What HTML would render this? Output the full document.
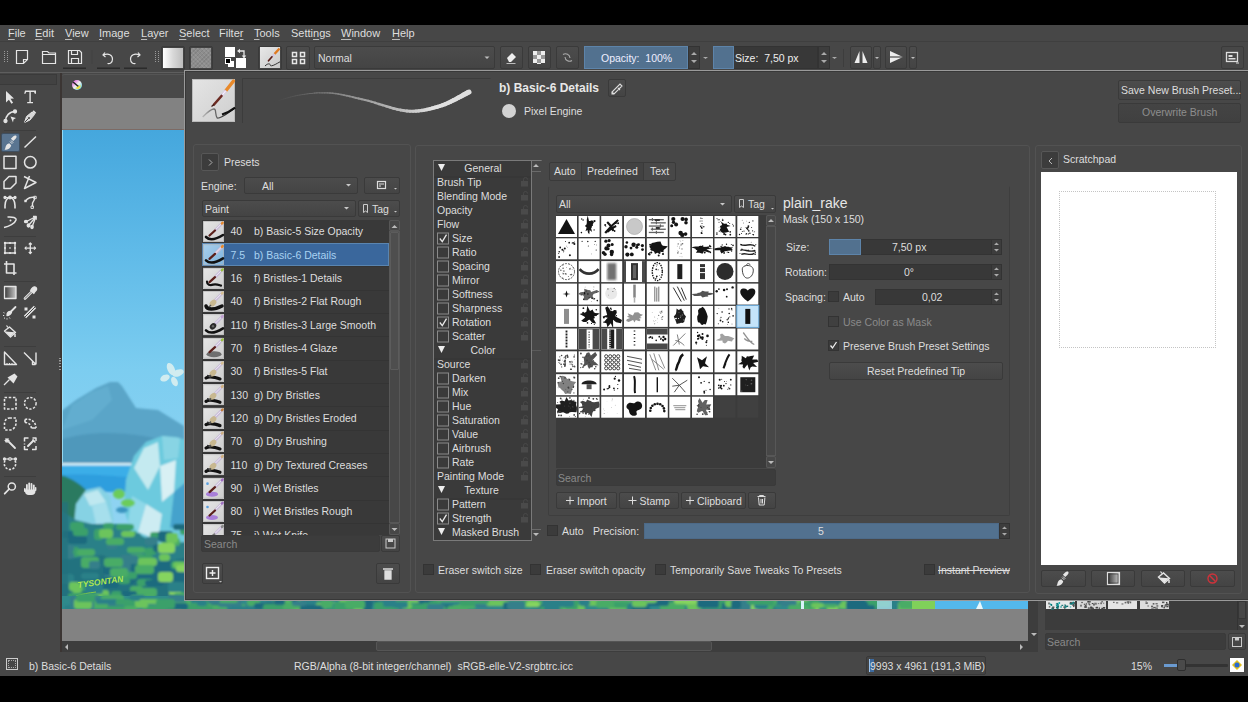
<!DOCTYPE html>
<html><head><meta charset="utf-8">
<style>
*{margin:0;padding:0;box-sizing:border-box}
html,body{width:1248px;height:702px;overflow:hidden;background:#000;font-family:"Liberation Sans",sans-serif;font-size:10.5px;color:#dedede}
.a{position:absolute}
.t{position:absolute;white-space:nowrap;line-height:1}
.btn{position:absolute;border:1px solid #3a3a3a;border-radius:2px;background:linear-gradient(#4c4c4c,#444)}
.inp{position:absolute;border:1px solid #333;border-radius:2px;background:#393939}
.cb{position:absolute;width:11px;height:11px;background:#3b3b3b;border:1px solid #333}
.u{text-decoration:underline;text-underline-offset:2px;text-decoration-color:#bbb}
svg{position:absolute;overflow:visible}
</style></head><body>
<!-- window -->
<div class="a" style="left:0;top:25px;width:1248px;height:651px;background:#474747"></div>
<!-- ================= MENUBAR ================= -->
<div class="a" style="left:0;top:41px;width:1248px;height:1px;background:#3f3f3f"></div>
<div class="t" style="left:8px;top:27px;font-size:11px;line-height:13px"><span class="u">F</span>ile</div>
<div class="t" style="left:35px;top:27px;font-size:11px;line-height:13px"><span class="u">E</span>dit</div>
<div class="t" style="left:65px;top:27px;font-size:11px;line-height:13px"><span class="u">V</span>iew</div>
<div class="t" style="left:99px;top:27px;font-size:11px;line-height:13px"><span class="u">I</span>mage</div>
<div class="t" style="left:141px;top:27px;font-size:11px;line-height:13px"><span class="u">L</span>ayer</div>
<div class="t" style="left:179px;top:27px;font-size:11px;line-height:13px"><span class="u">S</span>elect</div>
<div class="t" style="left:219px;top:27px;font-size:11px;line-height:13px">Filte<span class="u">r</span></div>
<div class="t" style="left:254px;top:27px;font-size:11px;line-height:13px"><span class="u">T</span>ools</div>
<div class="t" style="left:291px;top:27px;font-size:11px;line-height:13px">Setti<span class="u">n</span>gs</div>
<div class="t" style="left:341px;top:27px;font-size:11px;line-height:13px"><span class="u">W</span>indow</div>
<div class="t" style="left:392px;top:27px;font-size:11px;line-height:13px"><span class="u">H</span>elp</div>
<!-- ================= TOOLBAR ================= -->
<div class="a" style="left:0;top:72px;width:1248px;height:1px;background:#5e5e5e"></div>
<div id="toolbar">
<svg style="left:0;top:0" width="1248" height="72">
 <g fill="none" stroke="#e6e6e6" stroke-width="1.2">
  <!-- grips -->
  <g stroke="#9a9a9a" stroke-width="1" stroke-dasharray="1 1"><path d="M4.5 51v12M7.5 51v12M155.5 51v12M158.5 51v12"/></g>
  <!-- new -->
  <path d="M16.5 50.5h11v9l-4 4h-7z M27.5 59.5h-4v4"/>
  <!-- open -->
  <path d="M42.5 51.5h5l1.5 1.5h6.5v10.5h-13z M42.5 54.5h13"/>
  <!-- save -->
  <path d="M68.5 50.5h11l2 2v11h-13z M71.5 50.5v4h6v-4 M71.5 63.5v-5h7v5"/>
  <!-- undo -->
  <path d="M105 52.5l-2 2.5 2.5 2 M103.5 55c5-2 9 0 9 4s-3 5-5 4.5"/>
  <!-- redo -->
  <path d="M138 52.5l2 2.5-2.5 2 M139.5 55c-5-2-9 0-9 4s3 5 5 4.5"/>
 </g>
 <g fill="#2b2b2b"><rect x="63" y="67.5" width="23" height="1.5"/><rect x="97" y="67.5" width="23" height="1.5"/><rect x="124" y="67.5" width="23" height="1.5"/></g>
 <rect x="91.5" y="50" width="1" height="14" fill="#424242"/>
</svg>
<!-- gradient / pattern -->
<div class="btn" style="left:161px;top:46px;width:24px;height:24px;background:#444"></div>
<div class="a" style="left:163px;top:48px;width:20px;height:20px;background:linear-gradient(90deg,#fff,#d8d8d8 50%,#bdbdbd)"></div>
<div class="btn" style="left:189px;top:46px;width:24px;height:24px;background:#444"></div>
<div class="a" style="left:191px;top:48px;width:20px;height:20px;background:#8d8d8d;background-image:repeating-linear-gradient(45deg,rgba(255,255,255,.08) 0 1px,transparent 1px 3px),repeating-linear-gradient(-45deg,rgba(0,0,0,.08) 0 1px,transparent 1px 3px)"></div>
<!-- colors -->
<div class="a" style="left:225px;top:47px;width:10px;height:10px;background:#fff"></div>
<div class="a" style="left:236px;top:58px;width:10px;height:10px;background:#fff"></div>
<div class="a" style="left:228px;top:61px;width:6px;height:6px;background:#fff"></div>
<div class="a" style="left:225px;top:58px;width:6px;height:6px;background:#000;border:1px solid #fff"></div>
<svg style="left:0;top:0" width="260" height="72"><path d="M239.5 51h4.5v5" fill="none" stroke="#e8e8e8" stroke-width="1.3"/><path d="M237 51l3-2.2v4.4z M244 58.5l-2.2-3h4.4z" fill="#e8e8e8"/></svg>
<!-- brush preset btn -->
<div class="btn" style="left:258px;top:46px;width:24px;height:24px;background:#444"></div>
<div class="a" style="left:260px;top:47px;width:20px;height:21px;background:linear-gradient(135deg,#e8e8e8,#c9c9c9)"></div>
<svg style="left:0;top:0" width="290" height="72"><path d="M279.5 48.5l-5 5.5" stroke="#e07a20" stroke-width="2.4"/><path d="M274.5 54l-2.5 2.8" stroke="#d0c4e0" stroke-width="2"/><path d="M272 56.8l-3.5 4" stroke="#5a1f1a" stroke-width="1.7" stroke-linecap="round"/><path d="M265 66c1.5-1.5 3-2.5 4.5-2 1.5.5 0 2 2 1.8s5-2 8.5-4" fill="none" stroke="#333" stroke-width="1"/></svg>
<!-- grid btn -->
<div class="btn" style="left:286px;top:46px;width:24px;height:24px"></div>
<svg style="left:0;top:0" width="320" height="72"><g fill="none" stroke="#e6e6e6" stroke-width="1.5"><rect x="292.5" y="52.5" width="4" height="4"/><rect x="300.5" y="52.5" width="4" height="4"/><rect x="292.5" y="59.5" width="4" height="4"/><rect x="300.5" y="59.5" width="4" height="4"/></g></svg>
<!-- blend combo -->
<div class="btn" style="left:314px;top:46px;width:181px;height:23px"></div>
<div class="t" style="left:318px;top:53px">Normal</div>
<svg style="left:0;top:0" width="500" height="72"><path d="M484.5 56.5h5l-2.5 2.5z" fill="#bdbdbd"/></svg>
<!-- eraser / alpha / reload -->
<div class="btn" style="left:500px;top:46px;width:23px;height:23px"></div>
<div class="btn" style="left:528px;top:46px;width:23px;height:23px"></div>
<div class="btn" style="left:556px;top:46px;width:23px;height:23px"></div>
<svg style="left:0;top:0" width="600" height="72"><path d="M507 58l5-5 4 4-5 5h-2z" fill="#eee"/><path d="M506.5 63.5h9" stroke="#bbb"/>
<g fill="#eee"><rect x="533" y="51" width="4" height="4"/><rect x="541" y="51" width="4" height="4"/><rect x="537" y="55" width="4" height="4"/><rect x="533" y="59" width="4" height="4"/><rect x="541" y="59" width="4" height="4"/><rect x="537" y="63" width="4" height="1"/></g>
<g fill="#999"><rect x="537" y="51" width="4" height="4"/><rect x="533" y="55" width="4" height="4"/><rect x="541" y="55" width="4" height="4"/><rect x="537" y="59" width="4" height="4"/></g>
<path d="M563 54.5a4.5 4.5 0 0 1 7 3.5 M572 60.5a4.5 4.5 0 0 1-7-3.5" fill="none" stroke="#aaa" stroke-width="1.1"/></svg>
<!-- opacity slider -->
<div class="a" style="left:584px;top:46px;width:104px;height:23px;background:#52718f;border:1px solid #5d84aa"></div>
<div class="t" style="left:601px;top:53px;color:#eef">Opacity:&nbsp; 100%</div>
<div class="a" style="left:688px;top:46px;width:12px;height:23px;background:#3d3d3d;border:1px solid #333"></div>
<svg style="left:0;top:0" width="900" height="72"><g fill="#aaa"><path d="M691 55l3-3 3 3z M691 60l3 3 3-3z M703 57h5l-2.5 2z M817+0 0"/></g></svg>
<!-- size slider -->
<div class="a" style="left:713px;top:46px;width:105px;height:23px;background:#383838;border:1px solid #333"></div>
<div class="a" style="left:713px;top:46px;width:21px;height:23px;background:#52718f;border:1px solid #5d84aa"></div>
<div class="t" style="left:735px;top:53px;color:#eee">Size:&nbsp; 7,50 px</div>
<div class="a" style="left:818px;top:46px;width:12px;height:23px;background:#3d3d3d;border:1px solid #333"></div>
<svg style="left:0;top:0" width="900" height="72"><g fill="#aaa"><path d="M821 55l3-3 3 3z M821 60l3 3 3-3z M832 57h5l-2.5 2z"/></g></svg>
<div class="a" style="left:843px;top:49px;width:1px;height:18px;background:#3d3d3d"></div>
<!-- mirror -->
<div class="btn" style="left:850px;top:46px;width:22px;height:23px"></div>
<div class="btn" style="left:873px;top:46px;width:8px;height:23px"></div>
<div class="btn" style="left:885px;top:46px;width:22px;height:23px"></div>
<div class="btn" style="left:909px;top:46px;width:8px;height:23px"></div>
<svg style="left:0;top:0" width="1248" height="72"><g fill="#eee"><path d="M859.5 51v12h-5z M862.5 51v12h5z M890 51l13 6-13 6z"/></g><path d="M890 57h13" stroke="#474747" stroke-width="1.2"/><g fill="#bbb"><path d="M875 57h4l-2 2z M911 57h4l-2 2z"/></g>
<rect x="1226.5" y="52.5" width="11" height="9" fill="none" stroke="#ddd" stroke-width="1.3"/><rect x="1228.5" y="55" width="4" height="2" fill="#ddd"/><rect x="1228.5" y="58" width="7" height="1.5" fill="#ddd"/><path d="M1236 63h3" stroke="#ddd"/></svg>
<div class="btn" style="left:1221px;top:46px;width:23px;height:23px;background:transparent"></div>
</div>
<!-- ================= TOOLBOX ================= -->
<div class="a" style="left:0;top:74px;width:57px;height:11px;background:#424242;border:1px solid #3a3a3a;border-left:0"></div>
<div id="toolbox">
<div class="a" style="left:1px;top:133px;width:18.5px;height:18.5px;background:#5a7591;border:1px solid #3f4f60;border-radius:2px"></div>
<svg style="left:0;top:0" width="60" height="660">
<g fill="#3d3d3d"><rect x="4" y="130" width="32" height="1"/><rect x="4" y="236" width="32" height="1"/><rect x="4" y="281" width="32" height="1"/><rect x="4" y="346" width="32" height="1"/><rect x="4" y="392" width="32" height="1"/><rect x="4" y="476" width="32" height="1"/></g>
<g fill="none" stroke="#e4e4e4" stroke-width="1.3" stroke-linejoin="round">
 <!-- select -->
 <path d="M6 91l8 7.5-3.5.3 2.6 4-1.7 1-2.5-4-2.9 2.7z" fill="#e4e4e4" stroke="none"/>
 <!-- text T -->
 <path d="M25 90.5h11v3.2h-1.2l-.8-1.8h-3.2v10.2h2.2v1.2h-5.8v-1.2h2.2v-10.2h-3.2l-.8 1.8h-1.2z" fill="#e4e4e4" stroke="none"/>
 <!-- shape select -->
 <path d="M5.5 121c0-5 4-9.5 9.5-9.5" stroke-width="1.5"/><circle cx="5.5" cy="121" r="1.5" fill="#e4e4e4"/><circle cx="15" cy="111.5" r="1.5" fill="#e4e4e4"/><path d="M10.5 116.5l5.5 1.5-2.5 1.5-.5 3z" fill="#e4e4e4" stroke="none"/>
 <!-- calligraphy pen -->
 <path d="M24.5 122.5l2-6 5.5-4.5 2.5 2.5-4.5 5.5z" fill="#d8d8d8" stroke="#e4e4e4" stroke-width="1"/><path d="M24.5 122.5l4-4" stroke="#474747" stroke-width="1"/><circle cx="29" cy="118" r="1" fill="#474747" stroke="none"/><path d="M33 111l2.5 2.5" stroke-width="2"/>
 <!-- brush (active) -->
 <path d="M16.2 135.8c.8.8.3 2-.8 3.1l-2.2 2.2-2.3-2.3 2.2-2.2c1.1-1.1 2.3-1.6 3.1-.8z" fill="#e6e6e6" stroke="none"/>
 <path d="M11 140.5l2.2 2.2M10 141.6l2.2 2.2" stroke="#e6e6e6" stroke-width="1"/>
 <path d="M9.2 143.2l2 2c-.5 2.5-2.5 4.5-6.7 4.5 1-1 .8-2.2 1.3-3.5.6-1.6 1.8-2.6 3.4-3z" fill="#e6e6e6" stroke="none"/>
 <!-- line -->
 <path d="M24.5 147.5l11.5-11" stroke-width="1.5"/>
 <!-- rect -->
 <rect x="4" y="156.2" width="12" height="12.2" stroke-width="1.5"/>
 <!-- ellipse -->
 <circle cx="30.3" cy="162.3" r="5.8" stroke-width="1.5"/>
 <!-- polygon -->
 <path d="M9 176.5h7v6.5l-5.5 5.5h-6.5v-7z" stroke-width="1.5"/>
 <!-- polyline -->
 <path d="M24 176.5l12 6-11.5 6 5-12.5" stroke-width="1.5"/>
 <!-- bezier -->
 <path d="M5 208.5v-3c0-5 2.5-8 5-8s5 3 5 8v3" stroke-width="1.6"/><path d="M4.5 197.5h11" stroke-width="1"/><circle cx="5" cy="197.5" r="1" fill="#e4e4e4"/><circle cx="15" cy="197.5" r="1" fill="#e4e4e4"/><circle cx="10" cy="197.5" r="1.3" fill="#e4e4e4"/>
 <!-- freehand path -->
 <path d="M25.5 201c2-3 6-4.5 9-3.5.5 2-1 4-2 5.5v3.5" stroke-width="1.4"/><rect x="24.3" y="199.8" width="2.4" height="2.4" fill="#e4e4e4" stroke="none"/><rect x="33.8" y="196.3" width="2.4" height="2.4" fill="none" stroke-width="1"/><rect x="31" y="206" width="2.4" height="2.4" fill="none" stroke-width="1"/>
 <!-- dyna -->
 <path d="M4 227.5c5-1 11-4 12-7.5.5-2-3-3.5-8.5-3" stroke-width="1.5"/><circle cx="10.5" cy="220.5" r="1" fill="#e4e4e4" stroke="none"/>
 <!-- multibrush -->
 <path d="M26.5 221.5l9.5-5M28.5 225.5l7.5-9M32 227l4-10.5" stroke-width="1.3"/><path d="M33 216.5h3.2v3.2" stroke-width="1.3"/><ellipse cx="26" cy="221.5" rx="1.5" ry="1.2" fill="#e4e4e4"/><ellipse cx="28.5" cy="225.5" rx="1.3" ry="1.5" fill="#e4e4e4"/><ellipse cx="32" cy="227" rx="1.2" ry="1.5" fill="#e4e4e4"/>
 <!-- transform -->
 <rect x="5" y="243" width="10" height="10" stroke-width="1.3"/><g fill="#e4e4e4" stroke="none"><circle cx="5" cy="243" r="1.2"/><circle cx="15" cy="243" r="1.2"/><circle cx="5" cy="253" r="1.2"/><circle cx="15" cy="253" r="1.2"/><circle cx="10" cy="243" r="1"/><circle cx="10" cy="253" r="1"/><circle cx="5" cy="248" r="1"/><circle cx="15" cy="248" r="1"/><rect x="9.3" y="247.3" width="1.4" height="1.4"/></g>
 <!-- move -->
 <path d="M30.3 243v10.5M25 248.2h10.5" stroke-width="1.3"/><path d="M28.8 244.5l1.5-1.5 1.5 1.5M28.8 252l1.5 1.5 1.5-1.5M26.5 246.7l-1.5 1.5 1.5 1.5M34 246.7l1.5 1.5-1.5 1.5" stroke-width="1.2"/>
 <!-- crop -->
 <path d="M6.5 261v12h10 M4 264h10v11 " stroke-width="1.6"/>
 <!-- gradient -->
 <rect x="4.5" y="286.5" width="11.5" height="12" fill="url(#gr)" stroke-width="1.3"/>
 <!-- color picker -->
 <path d="M25 298.5l7-7" stroke-width="2.6" stroke-linecap="round"/><path d="M25 298.5l7-7" stroke="#474747" stroke-width="0.8"/><path d="M30.5 289.5l4 4" stroke-width="2.2"/><path d="M33 287.5a2 2 0 0 1 3 3l-1.5 1.5-3-3z" fill="#e4e4e4"/>
 <!-- smart patch -->
 <path d="M15.5 307l-4.5 4.5" stroke-width="1.8" stroke-linecap="round"/><path d="M10.5 311.5c-2 0-3.5 1.5-3.5 4 2 0 3.5-1 4.5-3z" fill="#e4e4e4"/><path d="M3.5 312.5l1 .5M3 315.5h1.2M4 318.5l1-.8M7 319.5v-1.2M10 318.5l-.6-1" stroke-width="1"/>
 <!-- similar/percent -->
 <path d="M25 317l10-10" stroke-width="3.2"/><path d="M25 317l10-10" stroke="#474747" stroke-width="1"/><rect x="24.5" y="307.5" width="3" height="3" fill="#e4e4e4" stroke="none"/><rect x="32.5" y="315.5" width="3" height="3" fill="#e4e4e4" stroke="none"/>
 <!-- fill -->
 <path d="M4.5 331l5-4 6 5.5-5 4.5z" fill="none" stroke-width="1.4"/><path d="M5 331.5l10 .8-4.6 4.2z" fill="#e4e4e4" stroke="none"/><path d="M8 327.5l-1.5-2" stroke-width="1.2"/><path d="M15 334v3" stroke-width="1.5"/>
 <!-- measure -->
 <path d="M4.5 352v12.5h12z" stroke-width="1.4"/><path d="M7 364.5v-1.5M9.5 364.5v-1.5M12 364.5v-1.5" stroke-width="1"/>
 <!-- angle -->
 <path d="M24 352.5l12 12M36 352.5v12M32.5 361v3.5h3" stroke-width="1.4"/>
 <!-- assistant pin -->
 <path d="M4 385l5.5-5.5" stroke-width="1.3"/><path d="M7.5 377.5l7-4 3 3-4 7z" fill="#e4e4e4" stroke="none"/>
 <!-- rect select -->
 <rect x="4.5" y="397.5" width="11.5" height="11.5" stroke-width="1.6" stroke-dasharray="2.6 1.6"/>
 <!-- ellipse select -->
 <circle cx="30.3" cy="403.3" r="5.8" stroke-width="1.5" stroke-dasharray="2.3 1.5"/>
 <!-- poly select -->
 <path d="M9.5 418h6.5v5c0 4-3 7-6 7h-5.5v-6c0-3.5 2-6 5-6z" stroke-width="1.6" stroke-dasharray="2.4 1.6"/>
 <!-- freehand select -->
 <path d="M25 419.5c5-1.5 11 2 11 8.5M25 422.5c3.5 0 6.5 2.5 6.5 6.5" stroke-width="1.6" stroke-dasharray="2.2 1.4"/><path d="M25 419.5v3M36 428h-4.5" stroke-width="1.6"/>
 <!-- magic wand -->
 <path d="M9 442l6 6" stroke-width="1.8" stroke-linecap="round"/><path d="M4.5 440.5h5M7 438v5M5.2 438.6l3.6 3.6M8.8 438.6l-3.6 3.6" stroke-width="1.1"/>
 <!-- similar select -->
 <path d="M24.5 441.5v-3.5h4M32.5 438h3.5v3M36 446v3.5h-4M28 449.5h-3.5v-3.5M24.5 443.5v1" stroke-width="1.5"/><path d="M28 446l5.5-5.5" stroke-width="2" stroke-linecap="round"/><path d="M32.5 439.5l3 3" stroke-width="1.5"/>
 <!-- bezier select -->
 <path d="M5 460.5c-1 2-1 4 0 6 2 4 8 4 10 0 1-2 1-4 0-6" stroke-width="1.6" stroke-dasharray="2.2 1.5"/><path d="M4 459h12" stroke-width="1.1"/><circle cx="4.5" cy="459" r="1" fill="#e4e4e4"/><circle cx="15.5" cy="459" r="1" fill="#e4e4e4"/><ellipse cx="10" cy="459" rx="2" ry="1.3" fill="none" stroke-width="1"/>
 <!-- zoom -->
 <circle cx="11.8" cy="486.5" r="3.6" stroke-width="1.5"/><path d="M9.2 489l-4.5 4.7" stroke-width="1.8" stroke-linecap="round"/>
 <!-- pan hand -->
 <g fill="#e4e4e4" stroke="none"><rect x="26" y="484" width="1.8" height="7" rx=".9"/><rect x="28.3" y="482.5" width="1.8" height="8" rx=".9"/><rect x="30.6" y="483" width="1.8" height="8" rx=".9"/><rect x="32.9" y="484.5" width="1.8" height="7" rx=".9"/><path d="M25 489.5h10.5v1.5c0 2.5-1.5 4-4 4h-3c-2 0-3.5-1.5-3.5-3.5z"/><rect x="34.8" y="487" width="1.6" height="4" rx=".8"/><rect x="24" y="488" width="1.7" height="4" rx=".8"/></g>
</g>
<defs><linearGradient id="gr"><stop offset="0" stop-color="#3a3a3a"/><stop offset="1" stop-color="#c8c8c8"/></linearGradient></defs>
<!-- splitter grip -->

</svg>
</div>
<!-- ================= CANVAS ================= -->
<div class="a" style="left:60px;top:73px;width:2px;height:579px;background:#3b3533"></div>
<div class="a" style="left:62px;top:74px;width:968px;height:24px;background:#494949;border-radius:3px 0 0 0;border-top:1px solid #555"></div>
<div class="a" style="left:62px;top:98px;width:966px;height:543px;background:#828282"></div>
<svg style="left:0;top:0" width="200" height="100"><defs><linearGradient id="kr" x1="0" y1="0" x2="1" y2="1"><stop offset="0" stop-color="#e040e0"/><stop offset=".5" stop-color="#f0f0f0"/><stop offset="1" stop-color="#40d0e0"/></linearGradient></defs><circle cx="77" cy="85" r="5" fill="url(#kr)"/><path d="M73 82l6 5" stroke="#222" stroke-width="1.6"/><path d="M75.5 88a3 3 0 0 0 5-3" fill="#f0e040"/></svg>
<div class="a" style="left:62px;top:129px;width:966px;height:1px;background:#7d6a64"></div>
<div id="painting" class="a" style="left:62px;top:130px;width:966px;height:479px;overflow:hidden"><svg style="left:0;top:0" width="966" height="479">
<defs><linearGradient id="sky" x1="0" y1="0" x2="0" y2="1"><stop offset="0" stop-color="#45a7dd"/><stop offset=".25" stop-color="#5fbae8"/><stop offset=".5" stop-color="#7ccdf0"/><stop offset=".7" stop-color="#8ad2f2"/><stop offset="1" stop-color="#9ad6f2"/></linearGradient><filter id="bl" x="-5%" y="-5%" width="110%" height="110%"><feGaussianBlur stdDeviation="0.8"/></filter></defs>
<rect width="966" height="479" fill="url(#sky)"/>
<g filter="url(#bl)">
<path d="M-2 282L14 270 34 258 48 252 56 252 60 256 74 278 96 280 122 296 124 340 -2 340z" fill="#5aa5c8" />
<path d="M10 275L30 262 46 256 50 270 30 290 0 300z" fill="#62adcf" />
<path d="M-2 310C30 300 70 300 124 316V340H-2z" fill="#5098bb" />
<path d="M-2 333H124V362H-2z" fill="#3aaee8" />
<path d="M-2 333H110V335.5H-2z" fill="#d8eef6" />
<path d="M-2 345C30 342 60 348 110 350V362H-2z" fill="#2f9ede" />
<path d="M-2 345C10 348 20 355 30 366 L14 392 -2 394z" fill="#2a7a60" />
<path d="M64 350L72 326 84 312 100 306 114 307 124 310 124 414 96 414 70 404 62 380z" fill="#6ccade" />
<path d="M72 338L82 318 96 312 98 336 86 360z" fill="#c4eaf0" />
<path d="M98 336L114 330 112 362 100 372z" fill="#d8f0f4" />
<path d="M100 306L118 308 116 328 102 330z" fill="#88d4e4" />
<path d="M112 362L124 352 124 394 108 398z" fill="#44a2cc" />
<path d="M84 374L100 384 96 410 76 402z" fill="#cdecf2" />
<path d="M70 366L84 374 76 402 66 392z" fill="#8ed8e8" />
<path d="M12 394L14 374 24 360 38 357 48 366 52 392z" fill="#86d2e4" />
<path d="M22 364L36 360 44 372 28 376z" fill="#bfe8f0" />
<path d="M30 376L44 372 50 392 34 394z" fill="#a6dfec" />
<path d="M-2 380L14 390 30 394 56 394 72 402 96 414 124 412 124 479H-2z" fill="#2b8088" />
<path d="M-2 430L40 425 80 440 124 434 124 479H-2z" fill="#24727f" />
<path d="M50 438C70 430 100 434 124 428V452C100 450 80 452 50 450z" fill="#1e6a80" />
<rect x="50" y="438" width="19" height="8" rx="3" fill="#357f8a"/>
<rect x="100" y="408" width="18" height="8" rx="3" fill="#48ac66"/>
<rect x="6" y="417" width="11" height="10" rx="3" fill="#3aa06a"/>
<rect x="68" y="424" width="15" height="10" rx="3" fill="#48ac66"/>
<rect x="71" y="460" width="11" height="6" rx="3" fill="#6cc45c"/>
<rect x="68" y="456" width="13" height="9" rx="3" fill="#48ac66"/>
<rect x="58" y="445" width="15" height="9" rx="3" fill="#1f6a7e"/>
<rect x="75" y="425" width="16" height="11" rx="3" fill="#3aa06a"/>
<rect x="82" y="418" width="12" height="7" rx="3" fill="#3aa06a"/>
<rect x="64" y="401" width="11" height="7" rx="3" fill="#3aa06a"/>
<rect x="113" y="461" width="10" height="7" rx="3" fill="#3aa06a"/>
<rect x="52" y="472" width="14" height="6" rx="3" fill="#48ac66"/>
<rect x="91" y="414" width="11" height="8" rx="3" fill="#1f6a7e"/>
<rect x="88" y="402" width="12" height="7" rx="3" fill="#3aa06a"/>
<rect x="52" y="432" width="17" height="7" rx="3" fill="#357f8a"/>
<rect x="18" y="452" width="11" height="9" rx="3" fill="#3aa06a"/>
<rect x="43" y="473" width="10" height="10" rx="3" fill="#2a8088"/>
<rect x="118" y="394" width="12" height="11" rx="3" fill="#3aa06a"/>
<rect x="-1" y="404" width="14" height="6" rx="3" fill="#2a8088"/>
<rect x="97" y="424" width="11" height="7" rx="3" fill="#6cc45c"/>
<rect x="-4" y="422" width="16" height="7" rx="3" fill="#357f8a"/>
<rect x="97" y="403" width="14" height="9" rx="3" fill="#2a8088"/>
<rect x="107" y="459" width="12" height="7" rx="3" fill="#86d45e"/>
<rect x="18" y="470" width="19" height="9" rx="3" fill="#1f6a7e"/>
<rect x="-0" y="401" width="15" height="7" rx="3" fill="#1f6a7e"/>
<rect x="26" y="460" width="16" height="7" rx="3" fill="#48ac66"/>
<rect x="109" y="472" width="11" height="8" rx="3" fill="#3aa06a"/>
<rect x="29" y="467" width="12" height="6" rx="3" fill="#6cc45c"/>
<rect x="45" y="412" width="10" height="7" rx="3" fill="#357f8a"/>
<rect x="65" y="403" width="14" height="10" rx="3" fill="#2a8088"/>
<rect x="75" y="449" width="16" height="7" rx="3" fill="#3aa06a"/>
<rect x="109" y="431" width="14" height="8" rx="3" fill="#3aa06a"/>
<rect x="-3" y="444" width="15" height="10" rx="3" fill="#2a8088"/>
<rect x="11" y="398" width="15" height="8" rx="3" fill="#3aa06a"/>
<rect x="106" y="452" width="17" height="10" rx="3" fill="#2a8088"/>
<rect x="38" y="448" width="19" height="10" rx="3" fill="#1f6a7e"/>
<rect x="111" y="394" width="15" height="6" rx="3" fill="#1f6a7e"/>
<rect x="41" y="393" width="11" height="6" rx="3" fill="#3aa06a"/>
<rect x="117" y="464" width="17" height="8" rx="3" fill="#1f6a7e"/>
<rect x="49" y="461" width="11" height="10" rx="3" fill="#3aa06a"/>
<rect x="32" y="399" width="10" height="11" rx="3" fill="#3aa06a"/>
<rect x="56" y="442" width="19" height="7" rx="3" fill="#3aa06a"/>
<rect x="40" y="404" width="16" height="9" rx="3" fill="#2a8088"/>
<rect x="76" y="428" width="19" height="8" rx="3" fill="#6cc45c"/>
<rect x="19" y="427" width="18" height="11" rx="3" fill="#48ac66"/>
<rect x="42" y="440" width="13" height="7" rx="3" fill="#357f8a"/>
<rect x="37" y="465" width="10" height="6" rx="3" fill="#6cc45c"/>
<rect x="96" y="401" width="15" height="11" rx="3" fill="#1f6a7e"/>
<rect x="41" y="435" width="17" height="10" rx="3" fill="#1f6a7e"/>
<rect x="34" y="460" width="13" height="9" rx="3" fill="#6cc45c"/>
<rect x="65" y="417" width="18" height="6" rx="3" fill="#48ac66"/>
<rect x="44" y="408" width="18" height="7" rx="3" fill="#48ac66"/>
<rect x="93" y="473" width="11" height="7" rx="3" fill="#86d45e"/>
<rect x="75" y="458" width="20" height="9" rx="3" fill="#48ac66"/>
<rect x="96" y="413" width="17" height="10" rx="3" fill="#86d45e"/>
<rect x="83" y="407" width="13" height="8" rx="3" fill="#357f8a"/>
<rect x="56" y="474" width="12" height="10" rx="3" fill="#6cc45c"/>
<rect x="5" y="468" width="17" height="7" rx="3" fill="#1f6a7e"/>
<rect x="18" y="465" width="10" height="9" rx="3" fill="#357f8a"/>
<rect x="93" y="469" width="15" height="9" rx="3" fill="#48ac66"/>
<rect x="6" y="463" width="18" height="11" rx="3" fill="#3aa06a"/>
<rect x="20" y="466" width="20" height="11" rx="3" fill="#86d45e"/>
<rect x="115" y="468" width="13" height="10" rx="3" fill="#3aa06a"/>
<rect x="37" y="399" width="14" height="9" rx="3" fill="#6cc45c"/>
<rect x="54" y="394" width="18" height="6" rx="3" fill="#3aa06a"/>
<rect x="15" y="419" width="18" height="7" rx="3" fill="#48ac66"/>
<rect x="118" y="466" width="15" height="9" rx="3" fill="#1f6a7e"/>
<rect x="111" y="432" width="19" height="6" rx="3" fill="#6cc45c"/>
<rect x="48" y="438" width="18" height="9" rx="3" fill="#48ac66"/>
<rect x="59" y="461" width="16" height="8" rx="3" fill="#1f6a7e"/>
<rect x="112" y="463" width="16" height="8" rx="3" fill="#48ac66"/>
<rect x="114" y="435" width="16" height="7" rx="3" fill="#86d45e"/>
<rect x="8" y="392" width="14" height="9" rx="3" fill="#3aa06a"/>
<rect x="58" y="425" width="18" height="9" rx="3" fill="#357f8a"/>
<rect x="6" y="406" width="19" height="8" rx="3" fill="#1f6a7e"/>
<rect x="27" y="431" width="11" height="8" rx="3" fill="#357f8a"/>
<rect x="59" y="401" width="14" height="6" rx="3" fill="#6cc45c"/>
<rect x="10" y="456" width="10" height="7" rx="3" fill="#6cc45c"/>
<rect x="-5" y="415" width="17" height="7" rx="3" fill="#357f8a"/>
<rect x="7" y="452" width="11" height="9" rx="3" fill="#6cc45c"/>
<rect x="83" y="450" width="19" height="6" rx="3" fill="#1f6a7e"/>
<rect x="96" y="442" width="15" height="10" rx="3" fill="#86d45e"/>
<rect x="73" y="435" width="19" height="9" rx="3" fill="#48ac66"/>
<rect x="23" y="453" width="18" height="11" rx="3" fill="#2a8088"/>
<rect x="69" y="465" width="12" height="10" rx="3" fill="#48ac66"/>
<rect x="104" y="403" width="12" height="10" rx="3" fill="#6cc45c"/>
<rect x="42" y="428" width="19" height="9" rx="3" fill="#48ac66"/>
<rect x="19" y="443" width="18" height="6" rx="3" fill="#2a8088"/>
<rect x="107" y="471" width="11" height="9" rx="3" fill="#2a8088"/>
<rect x="56" y="448" width="12" height="6" rx="3" fill="#3aa06a"/>
<rect x="-2" y="372" width="8" height="107" fill="#24707e" opacity=".7"/>
<ellipse cx="57" cy="364" rx="6" ry="5" fill="#6ccc5a"/><ellipse cx="66" cy="373" rx="7" ry="4" fill="#6ccc5a"/><ellipse cx="60" cy="380" rx="6" ry="3" fill="#3a94c0"/>
</g>
<text x="16" y="458" font-family="Liberation Sans" font-size="8.5" font-style="italic" font-weight="bold" fill="#b0e850" transform="rotate(-8 16 458)">TYSONTAN</text>
<path d="M14 466c6-2 12-3 20-4" stroke="#8ccf40" stroke-width="1" fill="none"/>
<g transform="translate(108,245)" fill="#d6eef0" opacity=".95"><ellipse cx="1" cy="-6" rx="3.6" ry="6.5" transform="rotate(-25 1 -6)"/><ellipse cx="8" cy="-2" rx="6" ry="3.4" transform="rotate(-20 8 -2)"/><ellipse cx="-5" cy="3" rx="5" ry="3.2" transform="rotate(-25 -5 3)"/><ellipse cx="4.5" cy="6.5" rx="3" ry="5" transform="rotate(-25 4.5 6.5)"/></g>
<rect x="0" y="466" width="966" height="13" fill="#2f8a8c"/>
<g filter="url(#bl)">
<rect x="21" y="473" width="20" height="10" rx="3" fill="#357f8a"/>
<rect x="126" y="466" width="13" height="9" rx="3" fill="#2a8088"/>
<rect x="797" y="465" width="11" height="10" rx="3" fill="#1f6a7e"/>
<rect x="67" y="465" width="16" height="7" rx="3" fill="#2a8088"/>
<rect x="370" y="471" width="10" height="9" rx="3" fill="#48ac66"/>
<rect x="156" y="469" width="22" height="7" rx="3" fill="#48ac66"/>
<rect x="520" y="465" width="23" height="7" rx="3" fill="#3aa06a"/>
<rect x="689" y="472" width="24" height="8" rx="3" fill="#1f6a7e"/>
<rect x="490" y="466" width="19" height="7" rx="3" fill="#6cc45c"/>
<rect x="240" y="465" width="22" height="6" rx="3" fill="#1f6a7e"/>
<rect x="115" y="468" width="19" height="7" rx="3" fill="#1f6a7e"/>
<rect x="658" y="469" width="22" height="5" rx="3" fill="#2a8088"/>
<rect x="259" y="465" width="24" height="10" rx="3" fill="#3aa06a"/>
<rect x="200" y="475" width="21" height="7" rx="3" fill="#1f6a7e"/>
<rect x="490" y="470" width="16" height="10" rx="3" fill="#48ac66"/>
<rect x="603" y="473" width="26" height="5" rx="3" fill="#3aa06a"/>
<rect x="635" y="467" width="16" height="5" rx="3" fill="#48ac66"/>
<rect x="557" y="464" width="14" height="6" rx="3" fill="#2a8088"/>
<rect x="473" y="470" width="25" height="8" rx="3" fill="#3aa06a"/>
<rect x="549" y="474" width="11" height="8" rx="3" fill="#3aa06a"/>
<rect x="332" y="475" width="16" height="10" rx="3" fill="#357f8a"/>
<rect x="466" y="471" width="17" height="7" rx="3" fill="#2a8088"/>
<rect x="453" y="471" width="16" height="6" rx="3" fill="#6cc45c"/>
<rect x="482" y="467" width="21" height="6" rx="3" fill="#3aa06a"/>
<rect x="664" y="471" width="20" height="7" rx="3" fill="#1f6a7e"/>
<rect x="45" y="468" width="16" height="8" rx="3" fill="#2a8088"/>
<rect x="63" y="475" width="17" height="7" rx="3" fill="#6cc45c"/>
<rect x="39" y="465" width="23" height="10" rx="3" fill="#48ac66"/>
<rect x="842" y="474" width="20" height="6" rx="3" fill="#1f6a7e"/>
<rect x="392" y="466" width="11" height="8" rx="3" fill="#3aa06a"/>
<rect x="312" y="466" width="17" height="8" rx="3" fill="#1f6a7e"/>
<rect x="313" y="473" width="23" height="6" rx="3" fill="#2a8088"/>
<rect x="631" y="467" width="12" height="9" rx="3" fill="#357f8a"/>
<rect x="537" y="468" width="14" height="8" rx="3" fill="#48ac66"/>
<rect x="544" y="473" width="13" height="6" rx="3" fill="#48ac66"/>
<rect x="756" y="464" width="11" height="6" rx="3" fill="#1f6a7e"/>
<rect x="23" y="464" width="14" height="6" rx="3" fill="#3aa06a"/>
<rect x="785" y="466" width="14" height="10" rx="3" fill="#357f8a"/>
<rect x="412" y="467" width="15" height="9" rx="3" fill="#3aa06a"/>
<rect x="690" y="469" width="23" height="9" rx="3" fill="#48ac66"/>
<rect x="382" y="473" width="16" height="6" rx="3" fill="#48ac66"/>
<rect x="562" y="476" width="15" height="8" rx="3" fill="#48ac66"/>
<rect x="368" y="468" width="12" height="9" rx="3" fill="#3aa06a"/>
<rect x="468" y="469" width="19" height="9" rx="3" fill="#1f6a7e"/>
<rect x="257" y="473" width="11" height="6" rx="3" fill="#3aa06a"/>
<rect x="598" y="470" width="22" height="7" rx="3" fill="#48ac66"/>
<rect x="188" y="472" width="15" height="10" rx="3" fill="#2a8088"/>
<rect x="610" y="471" width="25" height="10" rx="3" fill="#6cc45c"/>
<rect x="377" y="474" width="15" height="7" rx="3" fill="#1f6a7e"/>
<rect x="832" y="473" width="18" height="5" rx="3" fill="#2a8088"/>
<rect x="21" y="472" width="19" height="9" rx="3" fill="#2a8088"/>
<rect x="685" y="470" width="23" height="8" rx="3" fill="#48ac66"/>
<rect x="77" y="469" width="24" height="9" rx="3" fill="#6cc45c"/>
<rect x="443" y="471" width="19" height="10" rx="3" fill="#1f6a7e"/>
<rect x="55" y="471" width="23" height="5" rx="3" fill="#3aa06a"/>
<rect x="235" y="465" width="15" height="5" rx="3" fill="#48ac66"/>
<rect x="84" y="474" width="17" height="9" rx="3" fill="#357f8a"/>
<rect x="658" y="470" width="22" height="7" rx="3" fill="#2a8088"/>
<rect x="694" y="468" width="12" height="7" rx="3" fill="#3aa06a"/>
<rect x="609" y="475" width="17" height="9" rx="3" fill="#2a8088"/>
<rect x="734" y="474" width="23" height="9" rx="3" fill="#86d45e"/>
<rect x="551" y="470" width="21" height="9" rx="3" fill="#1f6a7e"/>
<rect x="794" y="475" width="14" height="6" rx="3" fill="#1f6a7e"/>
<rect x="588" y="468" width="16" height="8" rx="3" fill="#6cc45c"/>
<rect x="834" y="465" width="15" height="6" rx="3" fill="#48ac66"/>
<rect x="667" y="466" width="11" height="7" rx="3" fill="#357f8a"/>
<rect x="782" y="464" width="12" height="6" rx="3" fill="#48ac66"/>
<rect x="506" y="471" width="18" height="8" rx="3" fill="#1f6a7e"/>
<rect x="159" y="467" width="13" height="9" rx="3" fill="#2a8088"/>
<rect x="539" y="475" width="19" height="9" rx="3" fill="#357f8a"/>
<rect x="763" y="475" width="15" height="8" rx="3" fill="#3aa06a"/>
<rect x="415" y="467" width="11" height="10" rx="3" fill="#1f6a7e"/>
<rect x="839" y="474" width="22" height="9" rx="3" fill="#3aa06a"/>
<rect x="565" y="467" width="10" height="7" rx="3" fill="#2a8088"/>
<rect x="387" y="467" width="17" height="9" rx="3" fill="#1f6a7e"/>
<rect x="135" y="468" width="14" height="9" rx="3" fill="#357f8a"/>
<rect x="113" y="473" width="20" height="8" rx="3" fill="#3aa06a"/>
<rect x="130" y="473" width="10" height="9" rx="3" fill="#48ac66"/>
<rect x="707" y="465" width="14" height="9" rx="3" fill="#3aa06a"/>
<rect x="765" y="472" width="11" height="9" rx="3" fill="#86d45e"/>
<rect x="737" y="468" width="23" height="7" rx="3" fill="#3aa06a"/>
<rect x="672" y="469" width="11" height="7" rx="3" fill="#357f8a"/>
<rect x="135" y="474" width="15" height="7" rx="3" fill="#3aa06a"/>
<rect x="478" y="476" width="21" height="5" rx="3" fill="#3aa06a"/>
<rect x="591" y="465" width="16" height="7" rx="3" fill="#3aa06a"/>
<rect x="562" y="464" width="16" height="9" rx="3" fill="#6cc45c"/>
<rect x="252" y="465" width="22" height="9" rx="3" fill="#48ac66"/>
<rect x="775" y="466" width="20" height="10" rx="3" fill="#2a8088"/>
<rect x="821" y="473" width="19" height="5" rx="3" fill="#48ac66"/>
<rect x="172" y="473" width="15" height="10" rx="3" fill="#357f8a"/>
<rect x="622" y="468" width="23" height="5" rx="3" fill="#48ac66"/>
<rect x="535" y="466" width="20" height="6" rx="3" fill="#48ac66"/>
<rect x="346" y="474" width="19" height="5" rx="3" fill="#6cc45c"/>
<rect x="28" y="476" width="17" height="9" rx="3" fill="#2a8088"/>
<rect x="792" y="469" width="18" height="8" rx="3" fill="#48ac66"/>
<rect x="706" y="469" width="15" height="7" rx="3" fill="#3aa06a"/>
<rect x="625" y="471" width="15" height="9" rx="3" fill="#6cc45c"/>
<rect x="568" y="471" width="10" height="7" rx="3" fill="#2a8088"/>
<rect x="264" y="469" width="19" height="6" rx="3" fill="#2a8088"/>
<rect x="678" y="474" width="20" height="6" rx="3" fill="#86d45e"/>
<rect x="777" y="471" width="16" height="8" rx="3" fill="#48ac66"/>
<rect x="494" y="466" width="25" height="10" rx="3" fill="#48ac66"/>
<rect x="488" y="464" width="21" height="9" rx="3" fill="#48ac66"/>
<rect x="210" y="471" width="21" height="7" rx="3" fill="#2a8088"/>
<rect x="229" y="475" width="17" height="9" rx="3" fill="#6cc45c"/>
<rect x="777" y="471" width="19" height="8" rx="3" fill="#6cc45c"/>
<rect x="145" y="473" width="24" height="7" rx="3" fill="#48ac66"/>
<rect x="105" y="474" width="15" height="9" rx="3" fill="#6cc45c"/>
<rect x="652" y="468" width="13" height="8" rx="3" fill="#3aa06a"/>
<rect x="391" y="469" width="23" height="10" rx="3" fill="#48ac66"/>
<rect x="265" y="472" width="22" height="7" rx="3" fill="#3aa06a"/>
<rect x="136" y="469" width="11" height="8" rx="3" fill="#3aa06a"/>
<rect x="490" y="466" width="18" height="6" rx="3" fill="#2a8088"/>
<rect x="46" y="473" width="22" height="9" rx="3" fill="#1f6a7e"/>
<rect x="825" y="471" width="18" height="7" rx="3" fill="#1f6a7e"/>
<rect x="646" y="470" width="26" height="9" rx="3" fill="#1f6a7e"/>
<rect x="710" y="465" width="12" height="10" rx="3" fill="#2a8088"/>
<rect x="452" y="469" width="24" height="7" rx="3" fill="#3aa06a"/>
<rect x="255" y="471" width="17" height="7" rx="3" fill="#2a8088"/>
<rect x="647" y="468" width="19" height="5" rx="3" fill="#3aa06a"/>
<rect x="726" y="467" width="24" height="10" rx="3" fill="#357f8a"/>
<rect x="598" y="470" width="14" height="7" rx="3" fill="#1f6a7e"/>
<rect x="809" y="475" width="26" height="9" rx="3" fill="#2a8088"/>
<rect x="745" y="469" width="23" height="6" rx="3" fill="#1f6a7e"/>
<rect x="487" y="475" width="12" height="9" rx="3" fill="#3aa06a"/>
<rect x="759" y="471" width="17" height="6" rx="3" fill="#2a8088"/>
<rect x="21" y="466" width="17" height="7" rx="3" fill="#357f8a"/>
<rect x="342" y="468" width="19" height="5" rx="3" fill="#3aa06a"/>
<rect x="391" y="468" width="15" height="6" rx="3" fill="#357f8a"/>
<rect x="756" y="466" width="24" height="8" rx="3" fill="#3aa06a"/>
<rect x="168" y="474" width="16" height="7" rx="3" fill="#48ac66"/>
<rect x="546" y="472" width="19" height="8" rx="3" fill="#6cc45c"/>
<rect x="165" y="475" width="11" height="6" rx="3" fill="#2a8088"/>
<rect x="827" y="467" width="17" height="9" rx="3" fill="#2a8088"/>
<rect x="599" y="475" width="17" height="5" rx="3" fill="#6cc45c"/>
<rect x="741" y="465" width="21" height="6" rx="3" fill="#6cc45c"/>
<rect x="431" y="468" width="14" height="9" rx="3" fill="#357f8a"/>
<rect x="761" y="471" width="14" height="7" rx="3" fill="#48ac66"/>
<rect x="574" y="467" width="20" height="5" rx="3" fill="#3aa06a"/>
<rect x="379" y="470" width="18" height="5" rx="3" fill="#2a8088"/>
<rect x="462" y="469" width="19" height="6" rx="3" fill="#48ac66"/>
<rect x="211" y="467" width="19" height="6" rx="3" fill="#48ac66"/>
<rect x="849" y="464" width="17" height="9" rx="3" fill="#1f6a7e"/>
<rect x="2" y="475" width="11" height="5" rx="3" fill="#2a8088"/>
<rect x="276" y="470" width="11" height="6" rx="3" fill="#357f8a"/>
<rect x="640" y="470" width="20" height="9" rx="3" fill="#3aa06a"/>
<rect x="523" y="467" width="17" height="9" rx="3" fill="#6cc45c"/>
<rect x="223" y="471" width="24" height="8" rx="3" fill="#6cc45c"/>
<rect x="30" y="471" width="21" height="8" rx="3" fill="#48ac66"/>
<rect x="280" y="471" width="20" height="9" rx="3" fill="#357f8a"/>
<rect x="380" y="467" width="23" height="5" rx="3" fill="#48ac66"/>
<rect x="489" y="471" width="23" height="6" rx="3" fill="#48ac66"/>
<rect x="46" y="469" width="21" height="9" rx="3" fill="#357f8a"/>
<rect x="671" y="473" width="18" height="8" rx="3" fill="#357f8a"/>
<rect x="148" y="467" width="13" height="8" rx="3" fill="#1f6a7e"/>
<rect x="53" y="469" width="16" height="6" rx="3" fill="#3aa06a"/>
<rect x="110" y="473" width="20" height="6" rx="3" fill="#1f6a7e"/>
<rect x="449" y="476" width="10" height="7" rx="3" fill="#357f8a"/>
<rect x="122" y="469" width="15" height="7" rx="3" fill="#3aa06a"/>
<rect x="836" y="472" width="21" height="10" rx="3" fill="#6cc45c"/>
<rect x="254" y="465" width="24" height="7" rx="3" fill="#3aa06a"/>
<rect x="802" y="468" width="15" height="10" rx="3" fill="#48ac66"/>
<rect x="34" y="469" width="20" height="5" rx="3" fill="#2a8088"/>
<rect x="488" y="475" width="24" height="10" rx="3" fill="#48ac66"/>
<rect x="398" y="469" width="23" height="7" rx="3" fill="#3aa06a"/>
<rect x="185" y="468" width="13" height="8" rx="3" fill="#48ac66"/>
<rect x="413" y="469" width="20" height="9" rx="3" fill="#357f8a"/>
<rect x="385" y="476" width="21" height="9" rx="3" fill="#48ac66"/>
<rect x="465" y="469" width="11" height="6" rx="3" fill="#6cc45c"/>
<rect x="534" y="470" width="22" height="8" rx="3" fill="#48ac66"/>
<rect x="231" y="468" width="12" height="10" rx="3" fill="#2a8088"/>
<rect x="118" y="467" width="23" height="6" rx="3" fill="#2a8088"/>
<rect x="721" y="469" width="24" height="7" rx="3" fill="#6cc45c"/>
<rect x="663" y="470" width="11" height="7" rx="3" fill="#6cc45c"/>
<rect x="420" y="466" width="18" height="6" rx="3" fill="#48ac66"/>
<rect x="269" y="469" width="19" height="6" rx="3" fill="#86d45e"/>
<rect x="224" y="473" width="21" height="6" rx="3" fill="#48ac66"/>
<rect x="718" y="470" width="17" height="6" rx="3" fill="#357f8a"/>
<rect x="745" y="467" width="15" height="7" rx="3" fill="#48ac66"/>
<rect x="121" y="474" width="22" height="7" rx="3" fill="#3aa06a"/>
<rect x="696" y="476" width="15" height="8" rx="3" fill="#48ac66"/>
<rect x="480" y="468" width="12" height="9" rx="3" fill="#2a8088"/>
<rect x="202" y="472" width="11" height="7" rx="3" fill="#1f6a7e"/>
<rect x="424" y="470" width="25" height="6" rx="3" fill="#6cc45c"/>
<rect x="191" y="475" width="13" height="9" rx="3" fill="#2a8088"/>
<rect x="572" y="467" width="11" height="7" rx="3" fill="#1f6a7e"/>
<rect x="692" y="470" width="14" height="9" rx="3" fill="#2a8088"/>
<rect x="602" y="464" width="16" height="7" rx="3" fill="#3aa06a"/>
<rect x="785" y="467" width="16" height="9" rx="3" fill="#2a8088"/>
<rect x="403" y="468" width="14" height="5" rx="3" fill="#2a8088"/>
<rect x="278" y="468" width="15" height="9" rx="3" fill="#48ac66"/>
<rect x="552" y="469" width="15" height="9" rx="3" fill="#3aa06a"/>
<rect x="496" y="475" width="22" height="8" rx="3" fill="#86d45e"/>
<rect x="353" y="469" width="14" height="9" rx="3" fill="#1f6a7e"/>
<rect x="328" y="475" width="11" height="6" rx="3" fill="#357f8a"/>
<rect x="235" y="470" width="18" height="5" rx="3" fill="#48ac66"/>
<rect x="232" y="467" width="14" height="8" rx="3" fill="#86d45e"/>
<rect x="843" y="464" width="19" height="9" rx="3" fill="#86d45e"/>
<rect x="68" y="474" width="24" height="8" rx="3" fill="#2a8088"/>
<rect x="227" y="465" width="10" height="9" rx="3" fill="#48ac66"/>
<rect x="598" y="472" width="25" height="9" rx="3" fill="#48ac66"/>
<rect x="286" y="472" width="23" height="6" rx="3" fill="#1f6a7e"/>
<rect x="246" y="473" width="19" height="6" rx="3" fill="#6cc45c"/>
<rect x="312" y="472" width="25" height="9" rx="3" fill="#3aa06a"/>
<rect x="851" y="474" width="24" height="7" rx="3" fill="#1f6a7e"/>
<rect x="441" y="472" width="11" height="8" rx="3" fill="#1f6a7e"/>
<rect x="748" y="465" width="14" height="8" rx="3" fill="#1f6a7e"/>
<rect x="218" y="472" width="16" height="8" rx="3" fill="#48ac66"/>
<rect x="287" y="473" width="23" height="9" rx="3" fill="#1f6a7e"/>
<rect x="551" y="466" width="22" height="6" rx="3" fill="#48ac66"/>
<rect x="108" y="469" width="21" height="6" rx="3" fill="#48ac66"/>
<rect x="837" y="470" width="21" height="9" rx="3" fill="#48ac66"/>
<rect x="230" y="467" width="14" height="8" rx="3" fill="#1f6a7e"/>
<rect x="803" y="476" width="11" height="9" rx="3" fill="#3aa06a"/>
<rect x="749" y="466" width="16" height="8" rx="3" fill="#3aa06a"/>
<rect x="348" y="475" width="23" height="9" rx="3" fill="#48ac66"/>
<rect x="321" y="468" width="23" height="9" rx="3" fill="#2a8088"/>
<rect x="192" y="473" width="17" height="6" rx="3" fill="#1f6a7e"/>
<rect x="580" y="467" width="15" height="9" rx="3" fill="#1f6a7e"/>
<rect x="151" y="465" width="25" height="6" rx="3" fill="#357f8a"/>
<rect x="372" y="466" width="24" height="6" rx="3" fill="#48ac66"/>
<rect x="235" y="469" width="15" height="5" rx="3" fill="#48ac66"/>
<rect x="315" y="467" width="11" height="5" rx="3" fill="#2a8088"/>
<rect x="576" y="464" width="15" height="6" rx="3" fill="#48ac66"/>
<rect x="853" y="469" width="11" height="7" rx="3" fill="#86d45e"/>
<rect x="341" y="465" width="19" height="8" rx="3" fill="#6cc45c"/>
<rect x="238" y="475" width="24" height="10" rx="3" fill="#1f6a7e"/>
<rect x="491" y="475" width="11" height="9" rx="3" fill="#48ac66"/>
<rect x="464" y="472" width="14" height="5" rx="3" fill="#86d45e"/>
<rect x="267" y="470" width="10" height="6" rx="3" fill="#2a8088"/>
<rect x="9" y="470" width="23" height="9" rx="3" fill="#357f8a"/>
<rect x="343" y="474" width="23" height="9" rx="3" fill="#3aa06a"/>
<rect x="805" y="470" width="23" height="7" rx="3" fill="#3aa06a"/>
<rect x="8" y="466" width="15" height="9" rx="3" fill="#357f8a"/>
<rect x="565" y="474" width="16" height="8" rx="3" fill="#2a8088"/>
<rect x="268" y="465" width="20" height="8" rx="3" fill="#6cc45c"/>
<rect x="288" y="473" width="13" height="9" rx="3" fill="#86d45e"/>
<rect x="262" y="466" width="16" height="6" rx="3" fill="#2a8088"/>
<rect x="301" y="469" width="10" height="8" rx="3" fill="#1f6a7e"/>
<rect x="81" y="475" width="23" height="9" rx="3" fill="#3aa06a"/>
<rect x="757" y="468" width="22" height="6" rx="3" fill="#2a8088"/>
<rect x="370" y="476" width="14" height="7" rx="3" fill="#48ac66"/>
<rect x="699" y="465" width="16" height="10" rx="3" fill="#48ac66"/>
<rect x="669" y="470" width="10" height="9" rx="3" fill="#1f6a7e"/>
<rect x="784" y="465" width="20" height="7" rx="3" fill="#1f6a7e"/>
<rect x="736" y="472" width="18" height="8" rx="3" fill="#3aa06a"/>
<rect x="104" y="473" width="22" height="7" rx="3" fill="#1f6a7e"/>
<rect x="361" y="469" width="14" height="8" rx="3" fill="#3aa06a"/>
<rect x="443" y="464" width="20" height="7" rx="3" fill="#3aa06a"/>
<rect x="511" y="475" width="12" height="7" rx="3" fill="#6cc45c"/>
<rect x="635" y="468" width="22" height="10" rx="3" fill="#1f6a7e"/>
<rect x="45" y="476" width="22" height="9" rx="3" fill="#3aa06a"/>
<rect x="201" y="474" width="20" height="10" rx="3" fill="#3aa06a"/>
<rect x="686" y="470" width="26" height="5" rx="3" fill="#3aa06a"/>
<rect x="612" y="467" width="23" height="7" rx="3" fill="#86d45e"/>
<rect x="12" y="469" width="18" height="10" rx="3" fill="#6cc45c"/>
<rect x="63" y="471" width="23" height="7" rx="3" fill="#6cc45c"/>
<rect x="62" y="470" width="11" height="9" rx="3" fill="#3aa06a"/>
<rect x="685" y="466" width="16" height="6" rx="3" fill="#3aa06a"/>
<rect x="799" y="475" width="14" height="6" rx="3" fill="#1f6a7e"/>
<rect x="156" y="469" width="24" height="8" rx="3" fill="#357f8a"/>
<rect x="62" y="476" width="13" height="8" rx="3" fill="#48ac66"/>
<rect x="482" y="476" width="16" height="9" rx="3" fill="#2a8088"/>
<rect x="726" y="475" width="21" height="6" rx="3" fill="#48ac66"/>
<rect x="155" y="466" width="21" height="7" rx="3" fill="#48ac66"/>
<rect x="239" y="467" width="16" height="8" rx="3" fill="#2a8088"/>
<rect x="169" y="476" width="21" height="9" rx="3" fill="#2a8088"/>
<rect x="749" y="473" width="13" height="5" rx="3" fill="#6cc45c"/>
<rect x="365" y="474" width="17" height="7" rx="3" fill="#357f8a"/>
<rect x="106" y="465" width="18" height="7" rx="3" fill="#357f8a"/>
<rect x="498" y="467" width="24" height="6" rx="3" fill="#3aa06a"/>
<rect x="582" y="469" width="25" height="7" rx="3" fill="#1f6a7e"/>
<rect x="517" y="469" width="11" height="7" rx="3" fill="#2a8088"/>
<rect x="502" y="472" width="14" height="8" rx="3" fill="#3aa06a"/>
<rect x="578" y="467" width="17" height="6" rx="3" fill="#6cc45c"/>
<rect x="334" y="467" width="12" height="9" rx="3" fill="#3aa06a"/>
<rect x="469" y="465" width="24" height="5" rx="3" fill="#2a8088"/>
<rect x="14" y="464" width="19" height="8" rx="3" fill="#3aa06a"/>
<rect x="574" y="466" width="11" height="6" rx="3" fill="#357f8a"/>
<rect x="272" y="472" width="20" height="10" rx="3" fill="#3aa06a"/>
<rect x="854" y="469" width="23" height="8" rx="3" fill="#3aa06a"/>
<rect x="858" y="465" width="17" height="7" rx="3" fill="#48ac66"/>
<rect x="445" y="471" width="18" height="9" rx="3" fill="#357f8a"/>
<rect x="339" y="473" width="11" height="6" rx="3" fill="#6cc45c"/>
<rect x="570" y="476" width="18" height="9" rx="3" fill="#1f6a7e"/>
<rect x="403" y="464" width="24" height="10" rx="3" fill="#3aa06a"/>
<rect x="94" y="469" width="19" height="10" rx="3" fill="#3aa06a"/>
<rect x="259" y="470" width="12" height="8" rx="3" fill="#48ac66"/>
<rect x="570" y="470" width="15" height="7" rx="3" fill="#6cc45c"/>
<rect x="212" y="469" width="11" height="6" rx="3" fill="#1f6a7e"/>
<rect x="146" y="465" width="12" height="9" rx="3" fill="#357f8a"/>
<rect x="133" y="476" width="18" height="7" rx="3" fill="#3aa06a"/>
<rect x="356" y="464" width="12" height="9" rx="3" fill="#1f6a7e"/>
<rect x="135" y="470" width="10" height="6" rx="3" fill="#2a8088"/>
<rect x="784" y="471" width="22" height="9" rx="3" fill="#1f6a7e"/>
<rect x="358" y="465" width="14" height="6" rx="3" fill="#1f6a7e"/>
<rect x="283" y="470" width="20" height="9" rx="3" fill="#48ac66"/>
<rect x="488" y="470" width="24" height="7" rx="3" fill="#2a8088"/>
<rect x="230" y="471" width="14" height="5" rx="3" fill="#357f8a"/>
<rect x="331" y="472" width="15" height="6" rx="3" fill="#2a8088"/>
</g>
<rect x="850" y="466" width="24" height="13" fill="#80d05a"/>
<rect x="873" y="466" width="93" height="13" fill="#54b8ec"/>
<rect x="739" y="467" width="3" height="12" fill="#d8f2f8"/><rect x="815" y="468" width="15" height="11" fill="#a8dce8" opacity=".8"/><path d="M914 479l4-8 3 8z" fill="#e8f8fc"/>
<rect x="0" y="0" width="1" height="333" fill="#a6e6fa" opacity=".8"/>
</svg></div>
<div class="a" style="left:1028px;top:98px;width:10px;height:543px;background:#3d3d3d"></div>
<div class="a" style="left:62px;top:641px;width:976px;height:11px;background:#3d3d3d"></div>
<div class="a" style="left:376px;top:641px;width:336px;height:10px;background:#474747;border:1px solid #555;border-radius:2px"></div>
<div class="a" style="left:1038px;top:601px;width:210px;height:51px;background:#474747"></div>
<div class="a" style="left:1045px;top:601px;width:192px;height:29px;background:#3c3c3c"></div>
<div class="a" style="left:1046px;top:601px;width:29px;height:8px;background:#e8e8e8"></div>
<div class="a" style="left:1077px;top:601px;width:29px;height:8px;background:#d8d8d8"></div>
<div class="a" style="left:1108px;top:601px;width:29px;height:8px;background:#e4e4e4"></div>
<div class="a" style="left:1140px;top:601px;width:29px;height:8px;background:#dcdcdc"></div>
<svg style="left:0;top:0" width="1248" height="702"><rect x="1064.2" y="606.2" width="2.2" height="1.9" fill="#1a9a9a"/><rect x="1069.8" y="606.4" width="1.4" height="1.1" fill="#2ab0b0"/><rect x="1050.9" y="604.3" width="1.4" height="1.5" fill="#2ab0b0"/><rect x="1048.3" y="602.5" width="1.4" height="1.9" fill="#555"/><rect x="1052.1" y="606.6" width="1.2" height="1.6" fill="#2ab0b0"/><rect x="1051.4" y="607.8" width="1.0" height="1.8" fill="#2ab0b0"/><rect x="1070.7" y="603.0" width="2.4" height="1.5" fill="#2ab0b0"/><rect x="1052.7" y="607.8" width="1.3" height="2.0" fill="#555"/><rect x="1055.8" y="603.5" width="1.2" height="1.1" fill="#1a9a9a"/><rect x="1056.6" y="606.7" width="1.9" height="1.6" fill="#107070"/><rect x="1049.7" y="603.5" width="1.5" height="1.7" fill="#2ab0b0"/><rect x="1060.5" y="605.9" width="1.1" height="2.0" fill="#1a9a9a"/><rect x="1072.7" y="603.5" width="1.6" height="1.5" fill="#555"/><rect x="1057.5" y="605.0" width="1.0" height="1.0" fill="#2ab0b0"/><rect x="1064.2" y="607.7" width="1.2" height="1.2" fill="#555"/><rect x="1057.0" y="603.5" width="1.8" height="1.8" fill="#1a9a9a"/><rect x="1063.3" y="606.5" width="1.6" height="1.3" fill="#555"/><rect x="1072.6" y="601.6" width="1.5" height="1.6" fill="#2ab0b0"/><rect x="1056.8" y="607.5" width="1.8" height="1.3" fill="#107070"/><rect x="1056.0" y="606.6" width="1.9" height="1.7" fill="#107070"/><rect x="1073.9" y="602.1" width="1.1" height="2.0" fill="#555"/><rect x="1048.8" y="606.2" width="1.5" height="1.3" fill="#555"/><rect x="1051.8" y="607.9" width="2.0" height="1.8" fill="#107070"/><rect x="1069.8" y="601.9" width="2.1" height="1.9" fill="#555"/><rect x="1050.8" y="604.0" width="1.2" height="1.8" fill="#107070"/><rect x="1051.7" y="607.5" width="1.9" height="1.2" fill="#555"/><rect x="1073.0" y="605.8" width="1.5" height="1.3" fill="#555"/><rect x="1058.5" y="602.0" width="1.6" height="2.0" fill="#2ab0b0"/><rect x="1064.3" y="604.5" width="1.5" height="1.1" fill="#107070"/><rect x="1061.4" y="604.8" width="1.8" height="1.1" fill="#107070"/><rect x="1066.1" y="605.6" width="2.1" height="1.4" fill="#107070"/><rect x="1069.7" y="602.9" width="2.5" height="1.7" fill="#107070"/><rect x="1064.9" y="605.1" width="1.0" height="1.5" fill="#107070"/><rect x="1056.5" y="602.9" width="1.4" height="1.5" fill="#107070"/><rect x="1057.0" y="605.5" width="2.1" height="1.8" fill="#107070"/><rect x="1072.0" y="602.2" width="2.3" height="1.4" fill="#107070"/><rect x="1072.9" y="604.6" width="1.8" height="1.2" fill="#107070"/><rect x="1072.4" y="604.3" width="2.0" height="1.7" fill="#555"/><rect x="1052.5" y="606.5" width="1.9" height="1.7" fill="#555"/><rect x="1055.9" y="604.9" width="2.3" height="1.3" fill="#1a9a9a"/><rect x="1084.7" y="605.1" width="1.9" height="1.2" fill="#444"/><rect x="1084.3" y="606.0" width="2.5" height="2.0" fill="#555"/><rect x="1081.3" y="601.9" width="1.5" height="1.2" fill="#555"/><rect x="1093.2" y="603.9" width="1.5" height="1.7" fill="#555"/><rect x="1094.2" y="602.7" width="2.4" height="1.0" fill="#777"/><rect x="1102.9" y="607.0" width="2.3" height="1.7" fill="#444"/><rect x="1089.0" y="601.3" width="1.9" height="1.1" fill="#444"/><rect x="1092.3" y="607.7" width="1.4" height="1.4" fill="#555"/><rect x="1090.1" y="606.7" width="2.0" height="1.4" fill="#555"/><rect x="1083.8" y="603.7" width="1.7" height="1.2" fill="#555"/><rect x="1094.6" y="603.5" width="2.3" height="1.0" fill="#555"/><rect x="1087.8" y="607.4" width="1.8" height="1.3" fill="#444"/><rect x="1089.0" y="604.0" width="1.3" height="1.3" fill="#444"/><rect x="1089.1" y="607.7" width="2.4" height="1.6" fill="#777"/><rect x="1097.8" y="603.1" width="1.4" height="1.0" fill="#777"/><rect x="1091.8" y="603.0" width="1.7" height="1.1" fill="#444"/><rect x="1103.1" y="602.7" width="1.1" height="1.1" fill="#777"/><rect x="1080.3" y="604.7" width="1.4" height="1.9" fill="#555"/><rect x="1085.9" y="602.9" width="1.2" height="2.0" fill="#777"/><rect x="1091.8" y="607.9" width="1.8" height="1.9" fill="#444"/><rect x="1101.5" y="601.1" width="1.2" height="1.3" fill="#444"/><rect x="1088.1" y="603.1" width="1.8" height="1.5" fill="#777"/><rect x="1096.4" y="606.7" width="1.2" height="1.0" fill="#444"/><rect x="1090.9" y="607.4" width="2.3" height="1.5" fill="#555"/><rect x="1090.3" y="606.7" width="1.9" height="1.7" fill="#444"/><rect x="1095.6" y="607.0" width="2.3" height="1.5" fill="#444"/><rect x="1100.4" y="602.4" width="1.4" height="1.8" fill="#555"/><rect x="1087.3" y="601.0" width="2.2" height="1.6" fill="#444"/><rect x="1098.7" y="607.4" width="1.2" height="1.5" fill="#444"/><rect x="1101.3" y="607.8" width="1.8" height="1.4" fill="#444"/><rect x="1129.9" y="601.5" width="1.3" height="1.8" fill="#666"/><rect x="1126.6" y="601.2" width="2.1" height="2.0" fill="#888"/><rect x="1127.4" y="601.3" width="2.3" height="1.2" fill="#666"/><rect x="1127.7" y="601.9" width="1.4" height="1.9" fill="#666"/><rect x="1116.0" y="602.3" width="2.2" height="1.1" fill="#666"/><rect x="1113.0" y="601.8" width="1.6" height="1.1" fill="#666"/><rect x="1124.6" y="601.8" width="1.6" height="1.6" fill="#666"/><rect x="1121.5" y="603.2" width="1.9" height="1.5" fill="#888"/><rect x="1166.0" y="602.0" width="1.4" height="1.6" fill="#444"/><rect x="1156.1" y="607.4" width="1.8" height="1.6" fill="#777"/><rect x="1145.5" y="602.6" width="2.2" height="1.3" fill="#555"/><rect x="1163.4" y="607.0" width="1.7" height="1.4" fill="#555"/><rect x="1161.1" y="605.6" width="1.1" height="1.7" fill="#555"/><rect x="1164.7" y="604.5" width="1.7" height="1.4" fill="#777"/><rect x="1155.5" y="603.3" width="2.2" height="1.0" fill="#444"/><rect x="1153.2" y="606.9" width="2.4" height="1.4" fill="#555"/><rect x="1162.0" y="601.6" width="2.4" height="1.5" fill="#555"/><rect x="1147.4" y="605.4" width="1.5" height="1.2" fill="#777"/><rect x="1166.3" y="605.9" width="2.2" height="1.4" fill="#444"/><rect x="1163.9" y="605.5" width="2.2" height="1.4" fill="#777"/><rect x="1156.4" y="605.1" width="1.9" height="1.7" fill="#777"/><rect x="1145.5" y="601.3" width="1.3" height="1.2" fill="#777"/><rect x="1165.3" y="604.4" width="2.1" height="1.0" fill="#777"/><rect x="1151.2" y="607.5" width="2.4" height="1.3" fill="#777"/><rect x="1146.4" y="602.1" width="1.2" height="1.4" fill="#777"/><rect x="1164.9" y="604.3" width="1.8" height="1.1" fill="#555"/><rect x="1162.0" y="605.7" width="1.0" height="1.9" fill="#777"/><rect x="1166.2" y="603.6" width="2.4" height="1.7" fill="#444"/><rect x="1155.0" y="606.9" width="1.2" height="1.8" fill="#777"/><rect x="1151.0" y="605.7" width="2.1" height="1.2" fill="#555"/><rect x="1161.2" y="605.0" width="2.0" height="1.6" fill="#444"/><rect x="1152.7" y="603.2" width="1.7" height="1.3" fill="#444"/><rect x="1167.8" y="604.3" width="2.2" height="1.2" fill="#555"/></svg>
<div class="a" style="left:1237px;top:601px;width:10px;height:29px;background:#3e3e3e;border-left:1px solid #333"></div>
<div class="a" style="left:1238px;top:601px;width:8px;height:18px;background:#474747;border:1px solid #363636"></div>
<svg style="left:0;top:0" width="1248" height="702"><path d="M1239 625h6l-3 3z" fill="#bbb"/><path d="M1031 633h6l-3 3z M1020 644v6l3-3z M65 647l3-3v6z" fill="#bbb"/></svg>
<div class="inp" style="left:1045px;top:633px;width:181px;height:17px;background:#3c3c3c;border-color:#3a3a3a"></div>
<div class="t" style="left:1047px;top:637px;color:#8a8a8a">Search</div>
<div class="btn" style="left:1228px;top:633px;width:18px;height:17px"></div>
<svg style="left:0;top:0" width="1248" height="702"><rect x="1232.5" y="637.5" width="9" height="9" fill="none" stroke="#ccc"/><rect x="1235" y="637.5" width="4" height="3" fill="#ccc"/></svg>
<svg style="left:0;top:0" width="70" height="400"><g fill="#9a9a9a"><rect x="59" y="358" width="2" height="1"/><rect x="59" y="360" width="2" height="1.5"/><rect x="59" y="363" width="2" height="1"/><rect x="59" y="366" width="2" height="1"/><rect x="59" y="369" width="2" height="1"/></g></svg>
<!-- ================= STATUS ================= -->
<div id="status">
<div class="a" style="left:6px;top:658px;width:12px;height:12px;border:1px solid #ccc"></div>
<div class="a" style="left:8px;top:660px;width:8px;height:8px;border:1px dotted #aaa"></div>
<div class="t" style="left:29px;top:661px">b) Basic-6 Details</div>
<div class="t" style="left:294px;top:661px">RGB/Alpha (8-bit integer/channel)&nbsp; sRGB-elle-V2-srgbtrc.icc</div>
<div class="a" style="left:866px;top:656px;width:120px;height:19px;background:#444;border:1px solid #383838;border-radius:2px"></div>
<div class="a" style="left:869px;top:659px;width:5px;height:13px;background:#3d6a9e"></div>
<div class="a" style="left:869px;top:659px;width:1px;height:13px;background:#9ac4f0"></div>
<div class="t" style="left:870px;top:661px">9993 x 4961 (191,3 MiB)</div>
<div class="t" style="left:1131px;top:661px">15%</div>
<div class="a" style="left:1164px;top:664px;width:64px;height:3px;background:#333;border-radius:1px"></div>
<div class="a" style="left:1164px;top:664px;width:16px;height:3px;background:#6a9ad0"></div>
<div class="a" style="left:1177px;top:659px;width:9px;height:12px;background:#4a4a4a;border:1px solid #2e2e2e;border-radius:2px"></div>
<div class="a" style="left:1229px;top:657px;width:16px;height:16px;background:#fff;border:1px solid #444"></div>
<svg style="left:0;top:0" width="1248" height="702"><path d="M1237 660l5 5-5 5-5-5z" fill="#e0c020"/><circle cx="1237" cy="665" r="2.5" fill="#2a6ad0"/></svg>
</div>
<!-- ================= POPUP ================= -->
<div class="a" id="popup" style="left:184px;top:70px;width:1064px;height:531px;background:#474747;border:1px solid #9a9a9a;border-right:0">
  <div class="a" style="left:0;top:0;right:0;bottom:0;border:1px solid #383838;border-right:0"></div>
</div>
<div id="pop">
<!-- header -->
<div class="a" style="left:192px;top:79px;width:43px;height:43px;background:linear-gradient(135deg,#e4e4e4,#cfcfcf);border:1px solid #bbb"></div>
<svg style="left:0;top:0" width="1248" height="702">
 <defs><linearGradient id="sq" x1="202" y1="0" x2="235" y2="0" gradientUnits="userSpaceOnUse"><stop offset="0" stop-color="#bbb"/><stop offset=".5" stop-color="#555"/><stop offset="1" stop-color="#000"/></linearGradient></defs>
 <path d="M233.5 81l-7.5 9.5" stroke="#e8892a" stroke-width="3.4" stroke-linecap="round"/>
 <path d="M226 90.5l-4.5 5.5" stroke="#dcd0ea" stroke-width="2.8"/><path d="M225.5 91l-4 5" stroke="#fff" stroke-width=".8"/>
 <path d="M221.5 96l-7.5 8.5" stroke="#6b2a22" stroke-width="2.6" stroke-linecap="round"/><path d="M214 104.5l-2.5 2" stroke="#3a1510" stroke-width="1.2"/>
 <path d="M202.7 117c3-3 7-7.5 11-8 3-.3 1 6 3.5 9 3 1.5 12-6 18-10" fill="none" stroke="url(#sq)" stroke-width="1.3"/>
 <path d="M222 114.5c5-1.5 9-4 13-7" fill="none" stroke="#111" stroke-width="2"/>
 <!-- preview frame -->
 <path d="M242.5 123v-44.5h248" fill="none" stroke="#3c3c3c"/>
</svg>
<svg style="left:0;top:0" width="500" height="130"><path d="M274.0 102.0L275.5 101.5" stroke="#474747" stroke-width="0.60" stroke-linecap="round"/><path d="M275.5 101.5L277.1 101.0" stroke="#484848" stroke-width="0.60" stroke-linecap="round"/><path d="M277.1 101.0L279.0 100.4" stroke="#494949" stroke-width="0.61" stroke-linecap="round"/><path d="M279.0 100.4L281.0 99.8" stroke="#4b4b4b" stroke-width="0.63" stroke-linecap="round"/><path d="M281.0 99.8L283.2 99.1" stroke="#4d4d4d" stroke-width="0.64" stroke-linecap="round"/><path d="M283.2 99.1L285.5 98.4" stroke="#4f4f4f" stroke-width="0.66" stroke-linecap="round"/><path d="M285.5 98.4L287.9 97.8" stroke="#515151" stroke-width="0.68" stroke-linecap="round"/><path d="M287.9 97.8L290.3 97.1" stroke="#535353" stroke-width="0.71" stroke-linecap="round"/><path d="M290.3 97.1L292.8 96.5" stroke="#555555" stroke-width="0.73" stroke-linecap="round"/><path d="M292.8 96.5L295.2 95.9" stroke="#575757" stroke-width="0.76" stroke-linecap="round"/><path d="M295.2 95.9L297.6 95.4" stroke="#5a5a5a" stroke-width="0.79" stroke-linecap="round"/><path d="M297.6 95.4L300.0 95.0" stroke="#5c5c5c" stroke-width="0.82" stroke-linecap="round"/><path d="M300.0 95.0L302.3 94.6" stroke="#5e5e5e" stroke-width="0.86" stroke-linecap="round"/><path d="M302.3 94.6L304.7 94.3" stroke="#616161" stroke-width="0.89" stroke-linecap="round"/><path d="M304.7 94.3L307.1 93.9" stroke="#636363" stroke-width="0.93" stroke-linecap="round"/><path d="M307.1 93.9L309.5 93.6" stroke="#656565" stroke-width="0.97" stroke-linecap="round"/><path d="M309.5 93.6L312.0 93.4" stroke="#686868" stroke-width="1.01" stroke-linecap="round"/><path d="M312.0 93.4L314.4 93.1" stroke="#6a6a6a" stroke-width="1.05" stroke-linecap="round"/><path d="M314.4 93.1L316.9 92.9" stroke="#6d6d6d" stroke-width="1.09" stroke-linecap="round"/><path d="M316.9 92.9L319.5 92.8" stroke="#707070" stroke-width="1.13" stroke-linecap="round"/><path d="M319.5 92.8L322.1 92.8" stroke="#727272" stroke-width="1.18" stroke-linecap="round"/><path d="M322.1 92.8L324.7 92.8" stroke="#757575" stroke-width="1.23" stroke-linecap="round"/><path d="M324.7 92.8L327.3 92.8" stroke="#787878" stroke-width="1.28" stroke-linecap="round"/><path d="M327.3 92.8L330.0 93.0" stroke="#7a7a7a" stroke-width="1.32" stroke-linecap="round"/><path d="M330.0 93.0L332.7 93.3" stroke="#7d7d7d" stroke-width="1.38" stroke-linecap="round"/><path d="M332.7 93.3L335.5 93.6" stroke="#808080" stroke-width="1.43" stroke-linecap="round"/><path d="M335.5 93.6L338.2 94.0" stroke="#828282" stroke-width="1.48" stroke-linecap="round"/><path d="M338.2 94.0L341.0 94.5" stroke="#858585" stroke-width="1.54" stroke-linecap="round"/><path d="M341.0 94.5L343.9 95.1" stroke="#888888" stroke-width="1.59" stroke-linecap="round"/><path d="M343.9 95.1L346.8 95.7" stroke="#8b8b8b" stroke-width="1.65" stroke-linecap="round"/><path d="M346.8 95.7L349.7 96.3" stroke="#8e8e8e" stroke-width="1.71" stroke-linecap="round"/><path d="M349.7 96.3L352.6 97.0" stroke="#909090" stroke-width="1.77" stroke-linecap="round"/><path d="M352.6 97.0L355.6 97.8" stroke="#939393" stroke-width="1.83" stroke-linecap="round"/><path d="M355.6 97.8L358.7 98.5" stroke="#969696" stroke-width="1.89" stroke-linecap="round"/><path d="M358.7 98.5L361.8 99.2" stroke="#999999" stroke-width="1.95" stroke-linecap="round"/><path d="M361.8 99.2L365.0 100.0" stroke="#9c9c9c" stroke-width="2.02" stroke-linecap="round"/><path d="M365.0 100.0L368.3 100.8" stroke="#9f9f9f" stroke-width="2.08" stroke-linecap="round"/><path d="M368.3 100.8L371.7 101.8" stroke="#a2a2a2" stroke-width="2.15" stroke-linecap="round"/><path d="M371.7 101.8L375.2 102.8" stroke="#a5a5a5" stroke-width="2.22" stroke-linecap="round"/><path d="M375.2 102.8L378.8 104.0" stroke="#a8a8a8" stroke-width="2.29" stroke-linecap="round"/><path d="M378.8 104.0L382.5 105.1" stroke="#ababab" stroke-width="2.36" stroke-linecap="round"/><path d="M382.5 105.1L386.1 106.2" stroke="#aeaeae" stroke-width="2.43" stroke-linecap="round"/><path d="M386.1 106.2L389.8 107.3" stroke="#b1b1b1" stroke-width="2.50" stroke-linecap="round"/><path d="M389.8 107.3L393.4 108.4" stroke="#b4b4b4" stroke-width="2.57" stroke-linecap="round"/><path d="M393.4 108.4L397.0 109.3" stroke="#b7b7b7" stroke-width="2.65" stroke-linecap="round"/><path d="M397.0 109.3L400.4 110.0" stroke="#bababa" stroke-width="2.72" stroke-linecap="round"/><path d="M400.4 110.0L403.8 110.6" stroke="#bdbdbd" stroke-width="2.80" stroke-linecap="round"/><path d="M403.8 110.6L407.0 111.0" stroke="#c0c0c0" stroke-width="2.87" stroke-linecap="round"/><path d="M407.0 111.0L410.1 111.2" stroke="#c4c4c4" stroke-width="2.95" stroke-linecap="round"/><path d="M410.1 111.2L413.1 111.2" stroke="#c7c7c7" stroke-width="3.03" stroke-linecap="round"/><path d="M413.1 111.2L416.0 111.1" stroke="#cacaca" stroke-width="3.11" stroke-linecap="round"/><path d="M416.0 111.1L418.8 110.9" stroke="#cdcdcd" stroke-width="3.19" stroke-linecap="round"/><path d="M418.8 110.9L421.6 110.5" stroke="#d0d0d0" stroke-width="3.27" stroke-linecap="round"/><path d="M421.6 110.5L424.3 110.1" stroke="#d3d3d3" stroke-width="3.36" stroke-linecap="round"/><path d="M424.3 110.1L427.0 109.5" stroke="#d6d6d6" stroke-width="3.44" stroke-linecap="round"/><path d="M427.0 109.5L429.6 108.9" stroke="#dadada" stroke-width="3.52" stroke-linecap="round"/><path d="M429.6 108.9L432.2 108.3" stroke="#dddddd" stroke-width="3.61" stroke-linecap="round"/><path d="M432.2 108.3L434.8 107.5" stroke="#e0e0e0" stroke-width="3.70" stroke-linecap="round"/><path d="M434.8 107.5L437.4 106.8" stroke="#e0e0e0" stroke-width="3.78" stroke-linecap="round"/><path d="M437.4 106.8L440.0 106.0" stroke="#e0e0e0" stroke-width="3.87" stroke-linecap="round"/><path d="M440.0 106.0L442.6 105.1" stroke="#e0e0e0" stroke-width="3.96" stroke-linecap="round"/><path d="M442.6 105.1L445.3 104.1" stroke="#e0e0e0" stroke-width="4.05" stroke-linecap="round"/><path d="M445.3 104.1L448.1 102.9" stroke="#e0e0e0" stroke-width="4.14" stroke-linecap="round"/><path d="M448.1 102.9L450.8 101.6" stroke="#e0e0e0" stroke-width="4.23" stroke-linecap="round"/><path d="M450.8 101.6L453.5 100.2" stroke="#e0e0e0" stroke-width="4.33" stroke-linecap="round"/><path d="M453.5 100.2L456.2 98.9" stroke="#e0e0e0" stroke-width="4.42" stroke-linecap="round"/><path d="M456.2 98.9L458.7 97.5" stroke="#e0e0e0" stroke-width="4.51" stroke-linecap="round"/><path d="M458.7 97.5L461.2 96.2" stroke="#e0e0e0" stroke-width="4.61" stroke-linecap="round"/><path d="M461.2 96.2L463.5 94.9" stroke="#e0e0e0" stroke-width="4.71" stroke-linecap="round"/><path d="M463.5 94.9L465.5 93.8" stroke="#e0e0e0" stroke-width="4.80" stroke-linecap="round"/><path d="M465.5 93.8L467.4 92.8" stroke="#e0e0e0" stroke-width="4.90" stroke-linecap="round"/><path d="M467.4 92.8L469.0 92.0" stroke="#e0e0e0" stroke-width="5.00" stroke-linecap="round"/></svg>
<div class="t" style="left:499px;top:82px;font-weight:bold;font-size:12px;color:#e8e8e8">b) Basic-6 Details</div>
<div class="btn" style="left:608px;top:79px;width:18px;height:18px"></div>
<svg style="left:0;top:0" width="700" height="130"><path d="M612 92l2 2 8-8-2-2z M612 92v2h2 M618 88l2 2" fill="none" stroke="#ddd" stroke-width="1.1"/></svg>
<div class="a" style="left:502px;top:104px;width:14px;height:14px;border-radius:50%;background:#d2d2d2"></div>
<div class="t" style="left:524px;top:106px;font-size:10.5px">Pixel Engine</div>
<div class="btn" style="left:1118px;top:80px;width:123px;height:20px"></div>
<div class="t" style="left:1121px;top:85px">Save New Brush Preset...</div>
<div class="btn" style="left:1118px;top:103px;width:123px;height:20px;background:linear-gradient(#444,#404040)"></div>
<div class="t" style="left:1142px;top:107px;color:#8e8e8e">Overwrite Brush</div>

<!-- ===== presets group ===== -->
<div class="a" style="left:193px;top:144px;width:218px;height:449px;border:1px solid #525252;border-radius:3px"></div>
<div class="btn" style="left:201px;top:153px;width:18px;height:18px;background:#3c3c3c;border-color:#575757"></div>
<svg style="left:0;top:0" width="420" height="702"><path d="M209 159.5l3 3-3 3" fill="none" stroke="#bbb" stroke-width=".9"/></svg>
<div class="t" style="left:224px;top:157px">Presets</div>
<div class="t" style="left:201px;top:181px">Engine:</div>
<div class="btn" style="left:244px;top:177px;width:114px;height:17px"></div>
<div class="t" style="left:262px;top:181px">All</div>
<div class="btn" style="left:364px;top:177px;width:36px;height:17px"></div>
<div class="btn" style="left:202px;top:200px;width:154px;height:17px"></div>
<div class="t" style="left:205px;top:204px">Paint</div>
<div class="btn" style="left:358px;top:200px;width:42px;height:17px"></div>
<div class="t" style="left:372px;top:204px">Tag</div>
<svg style="left:0;top:0" width="420" height="702"><g fill="#c8c8c8"><path d="M346 184h5l-2.5 2.5z M344 207h5l-2.5 2.5z M394 188h3l-1.5 1.5z M394 211h3l-1.5 1.5z"/></g>
<rect x="377.5" y="181.5" width="8" height="7" fill="none" stroke="#ddd" stroke-width="1.2"/><path d="M379 184h5 M379 186h2" stroke="#ddd"/>
<path d="M363.5 204.5h4v8l-2-1.5-2 1.5z" fill="none" stroke="#ccc"/></svg>
<!-- list -->
<div class="a" style="left:202px;top:220px;width:187px;height:315px;background:#393939"></div>
<div class="a" style="left:389px;top:220px;width:11px;height:315px;background:#474747"></div>
<div class="a" style="left:389px;top:220px;width:11px;height:11px;background:#474747;border:1px solid #575757;border-radius:2px"></div>
<div class="a" style="left:389px;top:231px;width:11px;height:292px;background:#474747;border:1px solid #575757"></div>
<div class="a" style="left:390px;top:232px;width:9px;height:138px;background:#4e4e4e;border:1px solid #5c5c5c;border-radius:1px"></div>
<div class="a" style="left:389px;top:523px;width:11px;height:12px;background:#474747;border:1px solid #575757;border-radius:2px"></div>
<svg style="left:0;top:0" width="420" height="702"><g fill="#bbb"><path d="M391.5 228h6l-3-3z M391.5 528h6l-3 3z"/></g></svg>
<div class="a" style="left:202px;top:243px;width:187px;height:23px;background:#3a679c;border:1px solid #5a85b0"></div>
<div class="a" style="left:202px;top:220px;width:187px;height:315px;overflow:hidden">
<div class="a" style="left:1px;top:1.00px;width:21px;height:21px;background:linear-gradient(135deg,#e6e6e6,#cdcdcd)"></div>
<div class="t" style="left:28.5px;top:6.30px;color:#dedede">40</div>
<div class="t" style="left:52px;top:6.30px;color:#dedede">b) Basic-5 Size Opacity</div>
<div class="a" style="left:1px;top:24.33px;width:21px;height:21px;background:linear-gradient(135deg,#a9d0ee,#7fb3dc)"></div>
<div class="t" style="left:28.5px;top:29.63px;color:#a8d2f2">7.5</div>
<div class="t" style="left:52px;top:29.63px;color:#a8d2f2">b) Basic-6 Details</div>
<div class="a" style="left:1px;top:47.66px;width:21px;height:21px;background:linear-gradient(135deg,#e6e6e6,#cdcdcd)"></div>
<div class="a" style="left:0;top:46.46px;width:187px;height:1px;background:#343434"></div>
<div class="t" style="left:28.5px;top:52.96px;color:#dedede">16</div>
<div class="t" style="left:52px;top:52.96px;color:#dedede">f) Bristles-1 Details</div>
<div class="a" style="left:1px;top:70.99px;width:21px;height:21px;background:linear-gradient(135deg,#e6e6e6,#cdcdcd)"></div>
<div class="a" style="left:0;top:69.79px;width:187px;height:1px;background:#343434"></div>
<div class="t" style="left:28.5px;top:76.29px;color:#dedede">40</div>
<div class="t" style="left:52px;top:76.29px;color:#dedede">f) Bristles-2 Flat Rough</div>
<div class="a" style="left:1px;top:94.32px;width:21px;height:21px;background:linear-gradient(135deg,#e6e6e6,#cdcdcd)"></div>
<div class="a" style="left:0;top:93.12px;width:187px;height:1px;background:#343434"></div>
<div class="t" style="left:28.5px;top:99.62px;color:#dedede">110</div>
<div class="t" style="left:52px;top:99.62px;color:#dedede">f) Bristles-3 Large Smooth</div>
<div class="a" style="left:1px;top:117.65px;width:21px;height:21px;background:linear-gradient(135deg,#e6e6e6,#cdcdcd)"></div>
<div class="a" style="left:0;top:116.45px;width:187px;height:1px;background:#343434"></div>
<div class="t" style="left:28.5px;top:122.95px;color:#dedede">70</div>
<div class="t" style="left:52px;top:122.95px;color:#dedede">f) Bristles-4 Glaze</div>
<div class="a" style="left:1px;top:140.98px;width:21px;height:21px;background:linear-gradient(135deg,#e6e6e6,#cdcdcd)"></div>
<div class="a" style="left:0;top:139.78px;width:187px;height:1px;background:#343434"></div>
<div class="t" style="left:28.5px;top:146.28px;color:#dedede">30</div>
<div class="t" style="left:52px;top:146.28px;color:#dedede">f) Bristles-5 Flat</div>
<div class="a" style="left:1px;top:164.31px;width:21px;height:21px;background:linear-gradient(135deg,#e6e6e6,#cdcdcd)"></div>
<div class="a" style="left:0;top:163.11px;width:187px;height:1px;background:#343434"></div>
<div class="t" style="left:28.5px;top:169.61px;color:#dedede">130</div>
<div class="t" style="left:52px;top:169.61px;color:#dedede">g) Dry Bristles</div>
<div class="a" style="left:1px;top:187.64px;width:21px;height:21px;background:linear-gradient(135deg,#e6e6e6,#cdcdcd)"></div>
<div class="a" style="left:0;top:186.44px;width:187px;height:1px;background:#343434"></div>
<div class="t" style="left:28.5px;top:192.94px;color:#dedede">120</div>
<div class="t" style="left:52px;top:192.94px;color:#dedede">g) Dry Bristles Eroded</div>
<div class="a" style="left:1px;top:210.97px;width:21px;height:21px;background:linear-gradient(135deg,#e6e6e6,#cdcdcd)"></div>
<div class="a" style="left:0;top:209.77px;width:187px;height:1px;background:#343434"></div>
<div class="t" style="left:28.5px;top:216.27px;color:#dedede">70</div>
<div class="t" style="left:52px;top:216.27px;color:#dedede">g) Dry Brushing</div>
<div class="a" style="left:1px;top:234.30px;width:21px;height:21px;background:linear-gradient(135deg,#e6e6e6,#cdcdcd)"></div>
<div class="a" style="left:0;top:233.10px;width:187px;height:1px;background:#343434"></div>
<div class="t" style="left:28.5px;top:239.60px;color:#dedede">110</div>
<div class="t" style="left:52px;top:239.60px;color:#dedede">g) Dry Textured Creases</div>
<div class="a" style="left:1px;top:257.63px;width:21px;height:21px;background:linear-gradient(135deg,#e6e6e6,#cdcdcd)"></div>
<div class="a" style="left:0;top:256.43px;width:187px;height:1px;background:#343434"></div>
<div class="t" style="left:28.5px;top:262.93px;color:#dedede">90</div>
<div class="t" style="left:52px;top:262.93px;color:#dedede">i) Wet Bristles</div>
<div class="a" style="left:1px;top:280.96px;width:21px;height:21px;background:linear-gradient(135deg,#e6e6e6,#cdcdcd)"></div>
<div class="a" style="left:0;top:279.76px;width:187px;height:1px;background:#343434"></div>
<div class="t" style="left:28.5px;top:286.26px;color:#dedede">80</div>
<div class="t" style="left:52px;top:286.26px;color:#dedede">i) Wet Bristles Rough</div>
<div class="a" style="left:1px;top:304.29px;width:21px;height:21px;background:linear-gradient(135deg,#e6e6e6,#cdcdcd)"></div>
<div class="a" style="left:0;top:303.09px;width:187px;height:1px;background:#343434"></div>
<div class="t" style="left:28.5px;top:309.59px;color:#dedede">75</div>
<div class="t" style="left:52px;top:309.59px;color:#dedede">i) Wet Knife</div>
<svg style="left:0;top:0" width="187" height="315">
<g transform="translate(1,1.00)">
<rect x=".5" y=".5" width="20" height="20" fill="none" stroke="#b0b0b0" stroke-width=".6"/>
<path d="M3 16c3 3 9 3 17-2" fill="none" stroke="#111" stroke-width="2.6" stroke-linecap="round"/>
<path d="M19.5 2L12 9.5" stroke="#c8bcd8" stroke-width="3"/><path d="M19 2.2L12.3 8.9" stroke="#f6f2fa" stroke-width=".8"/>
<ellipse cx="19.3" cy="2.2" rx="1.8" ry="1.3" fill="#e8892a" transform="rotate(-45 19.3 2.2)"/>
<path d="M12 9.5L6.5 14.5" stroke="#5a1f1a" stroke-width="2.2" stroke-linecap="round"/>
</g>
<g transform="translate(1,24.33)">
<rect x=".5" y=".5" width="20" height="20" fill="none" stroke="#b0b0b0" stroke-width=".6"/>
<path d="M3 16c3 3 9 3 17-2" fill="none" stroke="#111" stroke-width="2.6" stroke-linecap="round"/>
<path d="M19.5 2L12 9.5" stroke="#c8bcd8" stroke-width="3"/><path d="M19 2.2L12.3 8.9" stroke="#f6f2fa" stroke-width=".8"/>
<ellipse cx="19.3" cy="2.2" rx="1.8" ry="1.3" fill="#e8892a" transform="rotate(-45 19.3 2.2)"/>
<path d="M12 9.5L6.5 14.5" stroke="#5a1f1a" stroke-width="2.2" stroke-linecap="round"/>
</g>
<g transform="translate(1,47.66)">
<rect x=".5" y=".5" width="20" height="20" fill="none" stroke="#b0b0b0" stroke-width=".6"/>
<path d="M4 14c0 3 3 4 6 3s5 0 8 1" fill="none" stroke="#111" stroke-width="2.2" stroke-linecap="round"/>
<path d="M19.5 2L12 9.5" stroke="#c8bcd8" stroke-width="3"/><path d="M19 2.2L12.3 8.9" stroke="#f6f2fa" stroke-width=".8"/>
<ellipse cx="19.3" cy="2.2" rx="1.8" ry="1.3" fill="#9ac040" transform="rotate(-45 19.3 2.2)"/>
<path d="M12 9.5L6.5 14.5" stroke="#5a1f1a" stroke-width="2.2" stroke-linecap="round"/>
</g>
<g transform="translate(1,70.99)">
<rect x=".5" y=".5" width="20" height="20" fill="none" stroke="#b0b0b0" stroke-width=".6"/>
<path d="M3 15c1 4 8 4 16 0" fill="none" stroke="#111" stroke-width="3.5" stroke-linecap="round"/>
<path d="M19.5 2L12 9.5" stroke="#c8bcd8" stroke-width="3"/><path d="M19 2.2L12.3 8.9" stroke="#f6f2fa" stroke-width=".8"/>
<ellipse cx="19.3" cy="2.2" rx="1.8" ry="1.3" fill="#d8c090" transform="rotate(-45 19.3 2.2)"/>
<ellipse cx="10" cy="12" rx="3.8" ry="2.8" transform="rotate(-45 10 12)" fill="#c8b890"/><path d="M8 14l-2 2" stroke="#555" stroke-width="1.5"/>
</g>
<g transform="translate(1,94.32)">
<rect x=".5" y=".5" width="20" height="20" fill="none" stroke="#b0b0b0" stroke-width=".6"/>
<path d="M3 16c3 3 9 3 17-2" fill="none" stroke="#111" stroke-width="2.6" stroke-linecap="round"/>
<path d="M19.5 2L12 9.5" stroke="#c8bcd8" stroke-width="3"/><path d="M19 2.2L12.3 8.9" stroke="#f6f2fa" stroke-width=".8"/>
<ellipse cx="19.3" cy="2.2" rx="1.8" ry="1.3" fill="#c0a0d0" transform="rotate(-45 19.3 2.2)"/>
<ellipse cx="10" cy="12" rx="3.6" ry="2.8" transform="rotate(-45 10 12)" fill="#2a2a2a"/><circle cx="10" cy="12" r="1.2" fill="#666"/>
</g>
<g transform="translate(1,117.65)">
<rect x=".5" y=".5" width="20" height="20" fill="none" stroke="#b0b0b0" stroke-width=".6"/>
<ellipse cx="11" cy="16.5" rx="7.5" ry="3" fill="#555" opacity=".8"/>
<path d="M19.5 2L12 9.5" stroke="#c8bcd8" stroke-width="3"/><path d="M19 2.2L12.3 8.9" stroke="#f6f2fa" stroke-width=".8"/>
<ellipse cx="19.3" cy="2.2" rx="1.8" ry="1.3" fill="#9ac040" transform="rotate(-45 19.3 2.2)"/>
<path d="M12 9.5L6.5 14.5" stroke="#5a1f1a" stroke-width="2.2" stroke-linecap="round"/>
</g>
<g transform="translate(1,140.98)">
<rect x=".5" y=".5" width="20" height="20" fill="none" stroke="#b0b0b0" stroke-width=".6"/>
<path d="M3 17c3-2 8-1 14 1" fill="none" stroke="#111" stroke-width="3.2" stroke-linecap="round" stroke-dasharray="4 1.2"/><path d="M4 14.5c2 0 3 1 4 2" stroke="#333" stroke-width="1.5" fill="none"/>
<path d="M19.5 2L12 9.5" stroke="#c8bcd8" stroke-width="3"/><path d="M19 2.2L12.3 8.9" stroke="#f6f2fa" stroke-width=".8"/>
<ellipse cx="19.3" cy="2.2" rx="1.8" ry="1.3" fill="#d8c090" transform="rotate(-45 19.3 2.2)"/>
<ellipse cx="10" cy="12" rx="3.8" ry="2.8" transform="rotate(-45 10 12)" fill="#c8b890"/><path d="M8 14l-2 2" stroke="#555" stroke-width="1.5"/>
</g>
<g transform="translate(1,164.31)">
<rect x=".5" y=".5" width="20" height="20" fill="none" stroke="#b0b0b0" stroke-width=".6"/>
<path d="M3 17c3-2 8-1 14 1" fill="none" stroke="#111" stroke-width="3.2" stroke-linecap="round" stroke-dasharray="4 1.2"/><path d="M4 14.5c2 0 3 1 4 2" stroke="#333" stroke-width="1.5" fill="none"/>
<path d="M19.5 2L12 9.5" stroke="#c8bcd8" stroke-width="3"/><path d="M19 2.2L12.3 8.9" stroke="#f6f2fa" stroke-width=".8"/>
<ellipse cx="19.3" cy="2.2" rx="1.8" ry="1.3" fill="#d0b080" transform="rotate(-45 19.3 2.2)"/>
<ellipse cx="10" cy="12" rx="3.8" ry="2.8" transform="rotate(-45 10 12)" fill="#c8b890"/><path d="M8 14l-2 2" stroke="#555" stroke-width="1.5"/>
</g>
<g transform="translate(1,187.64)">
<rect x=".5" y=".5" width="20" height="20" fill="none" stroke="#b0b0b0" stroke-width=".6"/>
<path d="M3 17c3-2 8-1 14 1" fill="none" stroke="#111" stroke-width="3.2" stroke-linecap="round" stroke-dasharray="4 1.2"/><path d="M4 14.5c2 0 3 1 4 2" stroke="#333" stroke-width="1.5" fill="none"/>
<path d="M19.5 2L12 9.5" stroke="#c8bcd8" stroke-width="3"/><path d="M19 2.2L12.3 8.9" stroke="#f6f2fa" stroke-width=".8"/>
<ellipse cx="19.3" cy="2.2" rx="1.8" ry="1.3" fill="#c08040" transform="rotate(-45 19.3 2.2)"/>
<ellipse cx="10" cy="12" rx="3.8" ry="2.8" transform="rotate(-45 10 12)" fill="#c8b890"/><path d="M8 14l-2 2" stroke="#555" stroke-width="1.5"/>
</g>
<g transform="translate(1,210.97)">
<rect x=".5" y=".5" width="20" height="20" fill="none" stroke="#b0b0b0" stroke-width=".6"/>
<path d="M3 17c3-2 8-1 14 1" fill="none" stroke="#111" stroke-width="3.2" stroke-linecap="round" stroke-dasharray="4 1.2"/><path d="M4 14.5c2 0 3 1 4 2" stroke="#333" stroke-width="1.5" fill="none"/>
<path d="M19.5 2L12 9.5" stroke="#c8bcd8" stroke-width="3"/><path d="M19 2.2L12.3 8.9" stroke="#f6f2fa" stroke-width=".8"/>
<ellipse cx="19.3" cy="2.2" rx="1.8" ry="1.3" fill="#d0b080" transform="rotate(-45 19.3 2.2)"/>
<ellipse cx="10" cy="12" rx="3.8" ry="2.8" transform="rotate(-45 10 12)" fill="#c8b890"/><path d="M8 14l-2 2" stroke="#555" stroke-width="1.5"/>
</g>
<g transform="translate(1,234.30)">
<rect x=".5" y=".5" width="20" height="20" fill="none" stroke="#b0b0b0" stroke-width=".6"/>
<path d="M3 17c3-2 8-1 14 1" fill="none" stroke="#111" stroke-width="3.2" stroke-linecap="round" stroke-dasharray="4 1.2"/><path d="M4 14.5c2 0 3 1 4 2" stroke="#333" stroke-width="1.5" fill="none"/>
<path d="M19.5 2L12 9.5" stroke="#c8bcd8" stroke-width="3"/><path d="M19 2.2L12.3 8.9" stroke="#f6f2fa" stroke-width=".8"/>
<ellipse cx="19.3" cy="2.2" rx="1.8" ry="1.3" fill="#d0b080" transform="rotate(-45 19.3 2.2)"/>
<ellipse cx="10" cy="12" rx="3.8" ry="2.8" transform="rotate(-45 10 12)" fill="#c8b890"/><path d="M8 14l-2 2" stroke="#555" stroke-width="1.5"/>
</g>
<g transform="translate(1,257.63)">
<rect x=".5" y=".5" width="20" height="20" fill="none" stroke="#b0b0b0" stroke-width=".6"/>
<ellipse cx="9" cy="16.5" rx="6" ry="2.5" fill="#a070d8" opacity=".85"/><circle cx="4.5" cy="6" r="1.3" fill="#5aa0e0"/>
<path d="M19.5 2L12 9.5" stroke="#c8bcd8" stroke-width="3"/><path d="M19 2.2L12.3 8.9" stroke="#f6f2fa" stroke-width=".8"/>
<ellipse cx="19.3" cy="2.2" rx="1.8" ry="1.3" fill="#a070c0" transform="rotate(-45 19.3 2.2)"/>
<path d="M12 9.5L6.5 14.5" stroke="#5a1f1a" stroke-width="2.2" stroke-linecap="round"/>
</g>
<g transform="translate(1,280.96)">
<rect x=".5" y=".5" width="20" height="20" fill="none" stroke="#b0b0b0" stroke-width=".6"/>
<ellipse cx="9" cy="16.5" rx="6" ry="2.5" fill="#a070d8" opacity=".85"/><circle cx="4.5" cy="6" r="1.3" fill="#5aa0e0"/>
<path d="M19.5 2L12 9.5" stroke="#c8bcd8" stroke-width="3"/><path d="M19 2.2L12.3 8.9" stroke="#f6f2fa" stroke-width=".8"/>
<ellipse cx="19.3" cy="2.2" rx="1.8" ry="1.3" fill="#a070c0" transform="rotate(-45 19.3 2.2)"/>
<path d="M12 9.5L6.5 14.5" stroke="#5a1f1a" stroke-width="2.2" stroke-linecap="round"/>
</g>
<g transform="translate(1,304.29)">
<rect x=".5" y=".5" width="20" height="20" fill="none" stroke="#b0b0b0" stroke-width=".6"/>
<path d="M19.5 2L12 9.5" stroke="#c8bcd8" stroke-width="3"/><path d="M19 2.2L12.3 8.9" stroke="#f6f2fa" stroke-width=".8"/>
<ellipse cx="19.3" cy="2.2" rx="1.8" ry="1.3" fill="#888" transform="rotate(-45 19.3 2.2)"/>
<path d="M12 9.5L5 15" stroke="#777" stroke-width="2"/>
</g>
</svg></div>
<div class="inp" style="left:201px;top:535px;width:179px;height:17px;background:#3c3c3c;border-color:#3a3a3a"></div>
<div class="t" style="left:204px;top:539px;color:#8a8a8a">Search</div>
<div class="btn" style="left:381px;top:535px;width:19px;height:17px"></div>
<div class="btn" style="left:202px;top:563px;width:21px;height:21px"></div>
<div class="btn" style="left:376px;top:563px;width:24px;height:21px"></div>
<svg style="left:0;top:0" width="420" height="702">
 <rect x="386" y="539" width="9" height="9" fill="none" stroke="#ccc"/><rect x="388" y="539" width="5" height="3" fill="#ccc"/>
 <rect x="206.5" y="567.5" width="12" height="11" fill="none" stroke="#eee" stroke-width="1.4"/><path d="M212.5 570v6 M209.5 573h6" stroke="#eee" stroke-width="1.4"/><path d="M219 581h3l-1.5 1.5z" fill="#bbb"/>
 <path d="M383 569h10 M385 571h6v8h-6z" stroke="#ddd" stroke-width="1.3" fill="#ddd"/>
</svg>

<!-- ===== middle group ===== -->
<div class="a" style="left:415px;top:145px;width:615px;height:448px;border:1px solid #525252;border-radius:3px"></div>
<div class="a" style="left:433px;top:160px;width:109px;height:381px;border:1px solid #7a7a7a;border-right-color:#555;background:#3a3a3a"></div>
<div class="a" style="left:531px;top:161px;width:11px;height:380px;background:#474747;border-left:1px solid #7a7a7a"></div>
<div class="a" style="left:532px;top:171px;width:9px;height:1.2px;background:#6a6a6a"></div>
<div class="a" style="left:532px;top:350px;width:9px;height:1px;background:#5a5a5a"></div>
<div class="a" style="left:532px;top:529px;width:9px;height:1.2px;background:#6a6a6a"></div>
<svg style="left:0;top:0" width="560" height="702"><g fill="#bbb"><path d="M533 167h6l-3-3z M533 533h6l-3 3z"/></g></svg>
<div class="a" style="left:434px;top:161px;width:97px;height:379px;overflow:hidden">
<div class="t" style="left:30.3px;top:2.4px">General</div>
<div class="t" style="left:3px;top:16.4px">Brush Tip</div>
<div class="t" style="left:3px;top:30.4px">Blending Mode</div>
<div class="t" style="left:3px;top:44.4px">Opacity</div>
<div class="t" style="left:3px;top:58.4px">Flow</div>
<div class="t" style="left:18px;top:72.4px">Size</div>
<div class="t" style="left:18px;top:86.4px">Ratio</div>
<div class="t" style="left:18px;top:100.4px">Spacing</div>
<div class="t" style="left:18px;top:114.4px">Mirror</div>
<div class="t" style="left:18px;top:128.4px">Softness</div>
<div class="t" style="left:18px;top:142.4px">Sharpness</div>
<div class="t" style="left:18px;top:156.4px">Rotation</div>
<div class="t" style="left:18px;top:170.4px">Scatter</div>
<div class="t" style="left:36.5px;top:184.4px">Color</div>
<div class="t" style="left:3px;top:198.4px">Source</div>
<div class="t" style="left:18px;top:212.4px">Darken</div>
<div class="t" style="left:18px;top:226.4px">Mix</div>
<div class="t" style="left:18px;top:240.4px">Hue</div>
<div class="t" style="left:18px;top:254.4px">Saturation</div>
<div class="t" style="left:18px;top:268.4px">Value</div>
<div class="t" style="left:18px;top:282.4px">Airbrush</div>
<div class="t" style="left:18px;top:296.4px">Rate</div>
<div class="t" style="left:3px;top:310.4px">Painting Mode</div>
<div class="t" style="left:30.3px;top:324.4px">Texture</div>
<div class="t" style="left:18px;top:338.4px">Pattern</div>
<div class="t" style="left:18px;top:352.4px">Strength</div>
<div class="t" style="left:18px;top:366.4px">Masked Brush</div>
<svg style="left:0;top:0" width="97" height="379">
<path d="M4 3h7l-3.5 7z" fill="#eee"/>
<rect x="0" y="15.5" width="97" height="1" fill="#343434"/>
<rect x="87" y="20" width="7" height="5.5" fill="#4a4a4a"/><path d="M89.5 20v-1.5a2 2 0 0 1 4 0" fill="none" stroke="#4a4a4a" stroke-width=".9"/>
<rect x="87" y="34" width="7" height="5.5" fill="#4a4a4a"/><path d="M89.5 34v-1.5a2 2 0 0 1 4 0" fill="none" stroke="#4a4a4a" stroke-width=".9"/>
<rect x="87" y="48" width="7" height="5.5" fill="#4a4a4a"/><path d="M89.5 48v-1.5a2 2 0 0 1 4 0" fill="none" stroke="#4a4a4a" stroke-width=".9"/>
<rect x="87" y="62" width="7" height="5.5" fill="#4a4a4a"/><path d="M89.5 62v-1.5a2 2 0 0 1 4 0" fill="none" stroke="#4a4a4a" stroke-width=".9"/>
<rect x="3.5" y="72" width="11" height="11" fill="#3a3a3a" stroke="#8a8a8a"/>
<path d="M5.8 77.5l2.5 3.2 4.2-7" fill="none" stroke="#e8e8e8" stroke-width="1.3"/>
<rect x="87" y="76" width="7" height="5.5" fill="#4a4a4a"/><path d="M89.5 76v-1.5a2 2 0 0 1 4 0" fill="none" stroke="#4a4a4a" stroke-width=".9"/>
<rect x="3.5" y="86" width="11" height="11" fill="#3a3a3a" stroke="#8a8a8a"/>
<rect x="87" y="90" width="7" height="5.5" fill="#4a4a4a"/><path d="M89.5 90v-1.5a2 2 0 0 1 4 0" fill="none" stroke="#4a4a4a" stroke-width=".9"/>
<rect x="3.5" y="100" width="11" height="11" fill="#3a3a3a" stroke="#8a8a8a"/>
<rect x="87" y="104" width="7" height="5.5" fill="#4a4a4a"/><path d="M89.5 104v-1.5a2 2 0 0 1 4 0" fill="none" stroke="#4a4a4a" stroke-width=".9"/>
<rect x="3.5" y="114" width="11" height="11" fill="#3a3a3a" stroke="#8a8a8a"/>
<rect x="87" y="118" width="7" height="5.5" fill="#4a4a4a"/><path d="M89.5 118v-1.5a2 2 0 0 1 4 0" fill="none" stroke="#4a4a4a" stroke-width=".9"/>
<rect x="3.5" y="128" width="11" height="11" fill="#3a3a3a" stroke="#8a8a8a"/>
<rect x="87" y="132" width="7" height="5.5" fill="#4a4a4a"/><path d="M89.5 132v-1.5a2 2 0 0 1 4 0" fill="none" stroke="#4a4a4a" stroke-width=".9"/>
<rect x="3.5" y="142" width="11" height="11" fill="#3a3a3a" stroke="#8a8a8a"/>
<rect x="87" y="146" width="7" height="5.5" fill="#4a4a4a"/><path d="M89.5 146v-1.5a2 2 0 0 1 4 0" fill="none" stroke="#4a4a4a" stroke-width=".9"/>
<rect x="3.5" y="156" width="11" height="11" fill="#3a3a3a" stroke="#8a8a8a"/>
<path d="M5.8 161.5l2.5 3.2 4.2-7" fill="none" stroke="#e8e8e8" stroke-width="1.3"/>
<rect x="87" y="160" width="7" height="5.5" fill="#4a4a4a"/><path d="M89.5 160v-1.5a2 2 0 0 1 4 0" fill="none" stroke="#4a4a4a" stroke-width=".9"/>
<rect x="3.5" y="170" width="11" height="11" fill="#3a3a3a" stroke="#8a8a8a"/>
<rect x="87" y="174" width="7" height="5.5" fill="#4a4a4a"/><path d="M89.5 174v-1.5a2 2 0 0 1 4 0" fill="none" stroke="#4a4a4a" stroke-width=".9"/>
<path d="M4 185h7l-3.5 7z" fill="#eee"/>
<rect x="0" y="197.5" width="97" height="1" fill="#343434"/>
<rect x="87" y="202" width="7" height="5.5" fill="#4a4a4a"/><path d="M89.5 202v-1.5a2 2 0 0 1 4 0" fill="none" stroke="#4a4a4a" stroke-width=".9"/>
<rect x="3.5" y="212" width="11" height="11" fill="#3a3a3a" stroke="#8a8a8a"/>
<rect x="87" y="216" width="7" height="5.5" fill="#4a4a4a"/><path d="M89.5 216v-1.5a2 2 0 0 1 4 0" fill="none" stroke="#4a4a4a" stroke-width=".9"/>
<rect x="3.5" y="226" width="11" height="11" fill="#3a3a3a" stroke="#8a8a8a"/>
<rect x="87" y="230" width="7" height="5.5" fill="#4a4a4a"/><path d="M89.5 230v-1.5a2 2 0 0 1 4 0" fill="none" stroke="#4a4a4a" stroke-width=".9"/>
<rect x="3.5" y="240" width="11" height="11" fill="#3a3a3a" stroke="#8a8a8a"/>
<rect x="87" y="244" width="7" height="5.5" fill="#4a4a4a"/><path d="M89.5 244v-1.5a2 2 0 0 1 4 0" fill="none" stroke="#4a4a4a" stroke-width=".9"/>
<rect x="3.5" y="254" width="11" height="11" fill="#3a3a3a" stroke="#8a8a8a"/>
<rect x="87" y="258" width="7" height="5.5" fill="#4a4a4a"/><path d="M89.5 258v-1.5a2 2 0 0 1 4 0" fill="none" stroke="#4a4a4a" stroke-width=".9"/>
<rect x="3.5" y="268" width="11" height="11" fill="#3a3a3a" stroke="#8a8a8a"/>
<rect x="87" y="272" width="7" height="5.5" fill="#4a4a4a"/><path d="M89.5 272v-1.5a2 2 0 0 1 4 0" fill="none" stroke="#4a4a4a" stroke-width=".9"/>
<rect x="3.5" y="282" width="11" height="11" fill="#3a3a3a" stroke="#8a8a8a"/>
<rect x="87" y="286" width="7" height="5.5" fill="#4a4a4a"/><path d="M89.5 286v-1.5a2 2 0 0 1 4 0" fill="none" stroke="#4a4a4a" stroke-width=".9"/>
<rect x="3.5" y="296" width="11" height="11" fill="#3a3a3a" stroke="#8a8a8a"/>
<rect x="87" y="300" width="7" height="5.5" fill="#4a4a4a"/><path d="M89.5 300v-1.5a2 2 0 0 1 4 0" fill="none" stroke="#4a4a4a" stroke-width=".9"/>
<rect x="87" y="314" width="7" height="5.5" fill="#4a4a4a"/><path d="M89.5 314v-1.5a2 2 0 0 1 4 0" fill="none" stroke="#4a4a4a" stroke-width=".9"/>
<path d="M4 325h7l-3.5 7z" fill="#eee"/>
<rect x="0" y="337.5" width="97" height="1" fill="#343434"/>
<rect x="3.5" y="338" width="11" height="11" fill="#3a3a3a" stroke="#8a8a8a"/>
<rect x="87" y="342" width="7" height="5.5" fill="#4a4a4a"/><path d="M89.5 342v-1.5a2 2 0 0 1 4 0" fill="none" stroke="#4a4a4a" stroke-width=".9"/>
<rect x="3.5" y="352" width="11" height="11" fill="#3a3a3a" stroke="#8a8a8a"/>
<path d="M5.8 357.5l2.5 3.2 4.2-7" fill="none" stroke="#e8e8e8" stroke-width="1.3"/>
<rect x="87" y="356" width="7" height="5.5" fill="#4a4a4a"/><path d="M89.5 356v-1.5a2 2 0 0 1 4 0" fill="none" stroke="#4a4a4a" stroke-width=".9"/>
<path d="M4 367h7l-3.5 7z" fill="#eee"/>
<rect x="0" y="379.5" width="97" height="1" fill="#343434"/>
</svg>
</div>

<!-- tabs -->
<div class="btn" style="left:549px;top:162px;width:127px;height:19px;background:#484848"></div>
<div class="a" style="left:581px;top:163px;width:63px;height:17px;background:#424242;border-left:1px solid #3a3a3a;border-right:1px solid #3a3a3a"></div>
<div class="t" style="left:554px;top:166px">Auto</div>
<div class="t" style="left:587px;top:166px">Predefined</div>
<div class="t" style="left:650px;top:166px">Text</div>
<div class="a" style="left:548px;top:186px;width:462px;height:330px;border:1px solid #3e3e3e;border-top-color:transparent;border-radius:2px"></div>
<div class="btn" style="left:556px;top:195px;width:176px;height:18px"></div>
<div class="t" style="left:559px;top:199px">All</div>
<div class="btn" style="left:734px;top:195px;width:42px;height:18px"></div>
<div class="t" style="left:748px;top:199px">Tag</div>
<svg style="left:0;top:0" width="800" height="702"><g fill="#c8c8c8"><path d="M720 203h5l-2.5 2.5z M771 208h3l-1.5 1.5z"/></g><path d="M739.5 199.5h4v8l-2-1.5-2 1.5z" fill="none" stroke="#ccc"/></svg>
<div class="a" style="left:556px;top:215px;width:210px;height:253px;background:#3b3b3b"></div>
<div class="a" style="left:766px;top:215px;width:10px;height:253px;background:#474747"></div>
<div class="a" style="left:766px;top:215px;width:10px;height:11px;border:1px solid #575757;border-radius:2px"></div>
<div class="a" style="left:766px;top:226px;width:10px;height:230px;border:1px solid #575757"></div>
<div class="a" style="left:766px;top:456px;width:10px;height:12px;border:1px solid #575757;border-radius:2px"></div>
<svg style="left:0;top:0" width="800" height="702"><g fill="#bbb"><path d="M768 222h6l-3-3z M768 461h6l-3 3z"/></g></svg>
<div class="a" style="left:556px;top:216px;width:210px;height:205px">
<svg style="left:0;top:0" width="210" height="205"><defs><filter id="gs" filterUnits="userSpaceOnUse" x="-2" y="-2" width="25" height="25"><feGaussianBlur stdDeviation="0.35"/></filter><filter id="gb"><feGaussianBlur stdDeviation="1"/></filter></defs>
<g transform="translate(0,0)"><rect width="21" height="21" fill="#fff"/><clipPath id="c0"><rect width="21" height="21"/></clipPath><g clip-path="url(#c0)"><g filter="url(#gs)" opacity=".92"><path d="M2 18L10.5 3 19 18z" fill="#000"/></g></g></g>
<g transform="translate(22.6,0)"><rect width="21" height="21" fill="#fff"/><clipPath id="c1"><rect width="21" height="21"/></clipPath><g clip-path="url(#c1)"><g filter="url(#gs)" opacity=".92"><polygon points="13.3,10.0 12.4,11.8 13.5,15.9 11.1,14.0 10.7,18.2 9.4,16.8 8.9,13.9 6.9,15.2 8.0,11.5 6.3,10.0 7.9,8.4 8.2,7.0 8.2,3.6 9.1,-0.5 10.4,5.1 11.4,5.0 13.5,4.2 15.4,6.0" fill="#000"/><circle cx="11.8" cy="8.7" r="1.5" fill="#000"/><circle cx="2.8" cy="16.6" r="0.8" fill="#000"/><circle cx="4.5" cy="4.0" r="0.8" fill="#000"/><circle cx="15.9" cy="5.1" r="1.1" fill="#000"/><circle cx="12.9" cy="8.3" r="1.0" fill="#000"/><circle cx="3.1" cy="3.0" r="0.7" fill="#000"/><circle cx="13.6" cy="9.3" r="0.8" fill="#000"/><circle cx="12.0" cy="9.7" r="0.8" fill="#000"/><circle cx="15.5" cy="13.9" r="0.7" fill="#000"/><circle cx="11.8" cy="10.9" r="1.4" fill="#000"/></g></g></g>
<g transform="translate(45.2,0)"><rect width="21" height="21" fill="#fff"/><clipPath id="c2"><rect width="21" height="21"/></clipPath><g clip-path="url(#c2)"><g filter="url(#gs)" opacity=".92"><path d="M4 17C8 12 12 8 17 4M6 6c3 3 5 5 6 9M15 10c-3 1-6 3-9 6" stroke="#000" stroke-width="2.2" fill="none"/><circle cx="14.4" cy="6.9" r="1.2" fill="#000"/><circle cx="4.0" cy="9.1" r="1.0" fill="#000"/><circle cx="4.6" cy="10.3" r="0.5" fill="#000"/><circle cx="13.4" cy="15.0" r="0.9" fill="#000"/><circle cx="16.9" cy="7.3" r="1.0" fill="#000"/><circle cx="12.1" cy="11.9" r="0.8" fill="#000"/></g></g></g>
<g transform="translate(68,0)"><rect width="21" height="21" fill="#fff"/><clipPath id="c3"><rect width="21" height="21"/></clipPath><g clip-path="url(#c3)"><g filter="url(#gs)" opacity=".92"><circle cx="10.5" cy="10.5" r="8" fill="#c4c4c4" stroke="#999" stroke-width=".6"/></g></g></g>
<g transform="translate(90.8,0)"><rect width="21" height="21" fill="#fff"/><clipPath id="c4"><rect width="21" height="21"/></clipPath><g clip-path="url(#c4)"><g filter="url(#gs)" opacity=".92"><rect x="2" y="3.0" width="15" height="1.3" fill="#555"/><rect x="4" y="6.2" width="15" height="1.3" fill="#555"/><rect x="2" y="9.4" width="15" height="1.3" fill="#555"/><rect x="4" y="12.600000000000001" width="15" height="1.3" fill="#555"/><rect x="2" y="15.8" width="15" height="1.3" fill="#555"/><rect x="5" y="2.0" width="1.2" height="3" fill="#555"/><rect x="9" y="5.2" width="1.2" height="3" fill="#555"/><rect x="13" y="8.4" width="1.2" height="3" fill="#555"/><rect x="5" y="11.600000000000001" width="1.2" height="3" fill="#555"/><rect x="9" y="14.8" width="1.2" height="3" fill="#555"/><rect x="8" y="3" width="5" height="2" fill="#222"/><rect x="9" y="11" width="4" height="2" fill="#222"/></g></g></g>
<g transform="translate(113.3,0)"><rect width="21" height="21" fill="#fff"/><clipPath id="c5"><rect width="21" height="21"/></clipPath><g clip-path="url(#c5)"><g filter="url(#gs)" opacity=".92"><circle cx="16.3" cy="18.1" r="1.8" fill="#000"/><circle cx="13.3" cy="3.0" r="2.1" fill="#000"/><circle cx="13.0" cy="18.9" r="2.2" fill="#000"/><circle cx="6.8" cy="8.6" r="2.0" fill="#000"/><circle cx="2.4" cy="9.8" r="1.5" fill="#000"/><circle cx="4.0" cy="3.0" r="2.1" fill="#000"/><circle cx="4.2" cy="6.2" r="1.7" fill="#000"/><circle cx="16.8" cy="3.4" r="1.8" fill="#000"/><circle cx="11.3" cy="17.0" r="2.2" fill="#000"/><circle cx="16.7" cy="6.7" r="1.8" fill="#000"/></g></g></g>
<g transform="translate(136,0)"><rect width="21" height="21" fill="#fff"/><clipPath id="c6"><rect width="21" height="21"/></clipPath><g clip-path="url(#c6)"><g filter="url(#gs)" opacity=".92"><path d="M10 2v17" stroke="#555" stroke-width="1.2" stroke-dasharray="1 1.5"/><circle cx="9.5" cy="17.0" r="0.9" fill="#000"/><circle cx="8.1" cy="5.0" r="0.5" fill="#000"/><circle cx="8.6" cy="10.2" r="0.7" fill="#000"/><circle cx="8.8" cy="2.1" r="0.6" fill="#000"/><circle cx="9.6" cy="11.6" r="0.9" fill="#000"/><circle cx="11.8" cy="10.8" r="0.7" fill="#000"/></g></g></g>
<g transform="translate(158.5,0)"><rect width="21" height="21" fill="#fff"/><clipPath id="c7"><rect width="21" height="21"/></clipPath><g clip-path="url(#c7)"><g filter="url(#gs)" opacity=".92"><polygon points="16.1,10.0 12.1,11.0 14.6,15.8 11.5,16.5 8.4,17.1 5.8,15.3 6.1,11.9 5.6,10.0 7.6,8.9 6.4,5.5 9.5,7.7 10.5,7.7 12.0,7.5 12.7,8.7" fill="#000"/><circle cx="7.8" cy="2.9" r="0.3" fill="#000"/><circle cx="4.6" cy="3.7" r="0.6" fill="#000"/><circle cx="2.4" cy="16.9" r="0.7" fill="#000"/><circle cx="4.5" cy="6.3" r="0.5" fill="#000"/><circle cx="8.2" cy="4.1" r="0.9" fill="#000"/><circle cx="18.9" cy="9.9" r="0.6" fill="#000"/><circle cx="3.5" cy="3.7" r="0.5" fill="#000"/><circle cx="6.5" cy="16.1" r="0.4" fill="#000"/><circle cx="2.4" cy="18.2" r="0.7" fill="#000"/><circle cx="4.5" cy="11.2" r="0.3" fill="#000"/><circle cx="11.0" cy="18.6" r="0.9" fill="#000"/><circle cx="13.8" cy="6.4" r="0.6" fill="#000"/><circle cx="4.8" cy="15.1" r="0.7" fill="#000"/><circle cx="15.2" cy="7.6" r="0.5" fill="#000"/><circle cx="15.8" cy="18.7" r="0.9" fill="#000"/><circle cx="15.7" cy="15.9" r="0.8" fill="#000"/><circle cx="5.9" cy="10.8" r="0.5" fill="#000"/><circle cx="2.5" cy="2.5" r="0.5" fill="#000"/><circle cx="6.4" cy="13.8" r="1.0" fill="#000"/><circle cx="9.6" cy="17.9" r="1.0" fill="#000"/><circle cx="18.2" cy="8.2" r="0.5" fill="#000"/><circle cx="5.9" cy="5.3" r="0.4" fill="#000"/></g></g></g>
<g transform="translate(181.3,0)"><rect width="21" height="21" fill="#fff"/><clipPath id="c8"><rect width="21" height="21"/></clipPath><g clip-path="url(#c8)"><g filter="url(#gs)" opacity=".92"><circle cx="12.6" cy="17.3" r="0.8" fill="#000"/><circle cx="10.2" cy="13.1" r="0.8" fill="#000"/><circle cx="3.4" cy="13.2" r="0.8" fill="#000"/><circle cx="15.3" cy="14.8" r="0.6" fill="#000"/><circle cx="5.0" cy="15.4" r="0.5" fill="#000"/><circle cx="15.6" cy="18.5" r="0.5" fill="#000"/><circle cx="8.8" cy="18.1" r="0.7" fill="#000"/><circle cx="4.9" cy="4.2" r="0.4" fill="#000"/><circle cx="17.4" cy="15.7" r="0.4" fill="#000"/><circle cx="16.1" cy="18.7" r="0.7" fill="#000"/><circle cx="8.0" cy="11.3" r="0.4" fill="#000"/><circle cx="2.2" cy="18.5" r="0.7" fill="#000"/><circle cx="11.0" cy="17.9" r="0.6" fill="#000"/><circle cx="16.8" cy="16.0" r="0.4" fill="#000"/><circle cx="6.3" cy="7.0" r="0.4" fill="#000"/><circle cx="12.0" cy="6.4" r="0.6" fill="#000"/><circle cx="4.2" cy="17.5" r="0.5" fill="#000"/><circle cx="9.8" cy="11.9" r="0.8" fill="#000"/><circle cx="9.2" cy="17.6" r="0.6" fill="#000"/><circle cx="11.0" cy="10.9" r="0.3" fill="#000"/><circle cx="9.5" cy="5.1" r="0.3" fill="#000"/><circle cx="15.6" cy="4.9" r="0.6" fill="#000"/><circle cx="14.3" cy="11.5" r="0.5" fill="#000"/><circle cx="10.8" cy="11.4" r="0.8" fill="#000"/><circle cx="3.8" cy="11.5" r="0.4" fill="#000"/><circle cx="6.7" cy="15.1" r="0.6" fill="#000"/><circle cx="11.5" cy="14.9" r="0.8" fill="#000"/><circle cx="9.5" cy="12.4" r="0.6" fill="#000"/><circle cx="10.7" cy="13.8" r="0.6" fill="#000"/><circle cx="11.1" cy="10.1" r="0.9" fill="#000"/></g></g></g>
<g transform="translate(0,22.3)"><rect width="21" height="21" fill="#fff"/><clipPath id="c9"><rect width="21" height="21"/></clipPath><g clip-path="url(#c9)"><g filter="url(#gs)" opacity=".92"><circle cx="13.9" cy="16.9" r="1.0" fill="#000"/><circle cx="6.4" cy="11.5" r="1.0" fill="#000"/><circle cx="16.3" cy="4.3" r="0.4" fill="#000"/><circle cx="9.5" cy="3.2" r="0.5" fill="#000"/><circle cx="3.2" cy="13.4" r="0.8" fill="#000"/><circle cx="17.2" cy="4.6" r="0.8" fill="#000"/><circle cx="13.2" cy="4.4" r="0.9" fill="#000"/><circle cx="18.4" cy="5.7" r="1.0" fill="#000"/><circle cx="8.8" cy="10.3" r="1.0" fill="#000"/><circle cx="16.2" cy="4.7" r="0.6" fill="#000"/><circle cx="10.8" cy="7.8" r="0.4" fill="#000"/><circle cx="7.4" cy="14.3" r="0.3" fill="#000"/><circle cx="11.4" cy="9.5" r="0.3" fill="#000"/><circle cx="7.6" cy="12.6" r="0.7" fill="#000"/><circle cx="3.1" cy="18.7" r="0.9" fill="#000"/><circle cx="18.5" cy="3.8" r="0.5" fill="#000"/><circle cx="2.7" cy="15.2" r="0.5" fill="#000"/><circle cx="4.2" cy="9.2" r="0.9" fill="#000"/></g></g></g>
<g transform="translate(22.6,22.3)"><rect width="21" height="21" fill="#fff"/><clipPath id="c10"><rect width="21" height="21"/></clipPath><g clip-path="url(#c10)"><g filter="url(#gs)" opacity=".92"><circle cx="15.9" cy="6.4" r="0.4" fill="#000"/><circle cx="17.6" cy="11.7" r="0.6" fill="#000"/><circle cx="3.5" cy="3.0" r="0.6" fill="#000"/><circle cx="9.2" cy="3.2" r="0.7" fill="#000"/><circle cx="12.8" cy="15.6" r="0.3" fill="#000"/><circle cx="16.6" cy="3.1" r="0.6" fill="#000"/><circle cx="9.7" cy="7.8" r="0.5" fill="#000"/><circle cx="17.8" cy="6.6" r="0.4" fill="#000"/></g></g></g>
<g transform="translate(45.2,22.3)"><rect width="21" height="21" fill="#fff"/><clipPath id="c11"><rect width="21" height="21"/></clipPath><g clip-path="url(#c11)"><g filter="url(#gs)" opacity=".92"><circle cx="11.0" cy="6.1" r="1.5" fill="#000"/><circle cx="4.7" cy="2.9" r="1.6" fill="#000"/><circle cx="7.3" cy="7.2" r="2.0" fill="#000"/><circle cx="6.9" cy="10.5" r="1.5" fill="#000"/><circle cx="7.9" cy="2.3" r="1.6" fill="#000"/><circle cx="2.3" cy="14.5" r="1.8" fill="#000"/><circle cx="5.2" cy="10.1" r="2.1" fill="#000"/><circle cx="3.8" cy="15.9" r="1.7" fill="#000"/><circle cx="10.4" cy="16.2" r="1.7" fill="#000"/><circle cx="10.6" cy="13.7" r="2.2" fill="#000"/></g></g></g>
<g transform="translate(68,22.3)"><rect width="21" height="21" fill="#fff"/><clipPath id="c12"><rect width="21" height="21"/></clipPath><g clip-path="url(#c12)"><g filter="url(#gs)" opacity=".92"><circle cx="7.8" cy="16.1" r="1.9" fill="#000"/><circle cx="12.8" cy="8.9" r="1.5" fill="#000"/><circle cx="2.9" cy="4.2" r="1.3" fill="#000"/><circle cx="14.6" cy="6.3" r="1.4" fill="#000"/><circle cx="3.4" cy="16.3" r="2.1" fill="#000"/><circle cx="13.4" cy="6.8" r="1.4" fill="#000"/><circle cx="7.0" cy="9.8" r="1.4" fill="#000"/><circle cx="9.6" cy="6.5" r="2.2" fill="#000"/><circle cx="18.5" cy="11.3" r="1.4" fill="#000"/><circle cx="18.4" cy="7.3" r="1.6" fill="#000"/><circle cx="2.0" cy="8.5" r="1.7" fill="#000"/></g></g></g>
<g transform="translate(90.8,22.3)"><rect width="21" height="21" fill="#fff"/><clipPath id="c13"><rect width="21" height="21"/></clipPath><g clip-path="url(#c13)"><g filter="url(#gs)" opacity=".92"><polygon points="18.5,10.5 16.3,11.9 17.0,14.0 13.3,13.4 12.5,15.1 10.5,14.5 8.2,15.7 7.5,13.6 6.5,12.7 4.1,12.1 4.2,10.5 2.4,8.5 3.9,6.9 4.9,4.7 7.7,4.1 10.5,3.5 13.7,3.1 14.8,6.1 16.1,7.5 21.1,7.9" fill="#000"/><circle cx="4.5" cy="14.3" r="1.0" fill="#000"/><circle cx="2.7" cy="16.2" r="1.1" fill="#000"/><circle cx="12.7" cy="14.5" r="1.1" fill="#000"/><circle cx="4.4" cy="10.9" r="0.9" fill="#000"/><circle cx="16.2" cy="15.7" r="1.1" fill="#000"/><circle cx="11.9" cy="17.2" r="1.0" fill="#000"/><circle cx="13.8" cy="5.9" r="0.5" fill="#000"/><circle cx="4.3" cy="8.1" r="0.6" fill="#000"/><circle cx="16.2" cy="11.5" r="0.9" fill="#000"/><circle cx="12.6" cy="13.6" r="0.8" fill="#000"/><circle cx="2.1" cy="15.6" r="1.0" fill="#000"/><circle cx="10.6" cy="11.1" r="1.0" fill="#000"/><circle cx="3.1" cy="14.5" r="0.7" fill="#000"/><circle cx="3.3" cy="6.5" r="1.0" fill="#000"/></g></g></g>
<g transform="translate(113.3,22.3)"><rect width="21" height="21" fill="#fff"/><clipPath id="c14"><rect width="21" height="21"/></clipPath><g clip-path="url(#c14)"><g filter="url(#gs)" opacity=".92"><circle cx="8.4" cy="14.6" r="0.7" fill="#555"/><circle cx="10.5" cy="8.5" r="0.4" fill="#555"/><circle cx="11.8" cy="15.0" r="0.5" fill="#555"/><circle cx="11.5" cy="3.3" r="0.3" fill="#555"/><circle cx="8.8" cy="14.6" r="0.4" fill="#555"/><circle cx="11.0" cy="2.2" r="0.2" fill="#555"/><circle cx="8.9" cy="13.4" r="0.5" fill="#555"/><circle cx="11.7" cy="6.9" r="0.5" fill="#555"/><circle cx="10.3" cy="9.9" r="0.3" fill="#555"/><circle cx="13.3" cy="5.4" r="0.7" fill="#555"/><circle cx="13.6" cy="2.3" r="0.4" fill="#555"/><circle cx="12.7" cy="18.5" r="0.4" fill="#555"/><circle cx="8.9" cy="5.6" r="0.7" fill="#555"/><circle cx="8.5" cy="11.9" r="0.3" fill="#555"/><circle cx="10.7" cy="18.2" r="0.3" fill="#555"/><circle cx="12.7" cy="10.6" r="0.6" fill="#555"/><circle cx="11.9" cy="5.9" r="0.6" fill="#555"/><circle cx="10.4" cy="2.4" r="0.2" fill="#555"/><circle cx="10.4" cy="9.7" r="0.4" fill="#555"/><circle cx="8.0" cy="7.8" r="0.4" fill="#555"/></g></g></g>
<g transform="translate(136,22.3)"><rect width="21" height="21" fill="#fff"/><clipPath id="c15"><rect width="21" height="21"/></clipPath><g clip-path="url(#c15)"><g filter="url(#gs)" opacity=".92"><polygon points="21.2,10.5 14.3,11.0 18.6,13.1 16.8,14.3 12.0,12.6 10.5,15.5 7.5,14.5 3.9,14.5 5.4,12.1 3.9,11.4 3.4,10.5 -0.9,8.9 3.5,8.3 6.5,8.1 8.2,7.4 10.5,7.8 11.9,8.7 13.3,8.8 19.1,7.8 16.5,9.7" fill="#000"/><circle cx="17.9" cy="8.2" r="0.6" fill="#000"/><circle cx="10.7" cy="7.7" r="0.7" fill="#000"/><circle cx="18.3" cy="14.0" r="0.9" fill="#000"/><circle cx="12.7" cy="14.2" r="1.0" fill="#000"/><circle cx="11.3" cy="12.5" r="0.5" fill="#000"/><circle cx="14.4" cy="10.1" r="0.9" fill="#000"/><circle cx="13.0" cy="8.6" r="0.5" fill="#000"/><circle cx="17.8" cy="7.1" r="0.7" fill="#000"/><circle cx="7.8" cy="8.7" r="0.9" fill="#000"/><circle cx="18.6" cy="8.3" r="0.8" fill="#000"/></g></g></g>
<g transform="translate(158.5,22.3)"><rect width="21" height="21" fill="#fff"/><clipPath id="c16"><rect width="21" height="21"/></clipPath><g clip-path="url(#c16)"><g filter="url(#gs)" opacity=".92"><polygon points="16.9,10.5 18.5,11.6 16.3,12.3 13.6,12.4 12.1,12.7 10.5,13.0 7.0,15.2 5.8,13.3 5.8,12.0 -0.2,12.0 -1.5,10.5 3.3,9.5 6.4,9.2 7.2,8.5 9.0,8.5 10.5,7.6 12.0,8.5 14.0,8.4 15.4,8.9 18.6,9.3" fill="#000"/><circle cx="17.1" cy="12.7" r="0.7" fill="#000"/><circle cx="9.0" cy="10.7" r="0.7" fill="#000"/><circle cx="7.7" cy="6.6" r="0.6" fill="#000"/><circle cx="18.5" cy="7.1" r="0.8" fill="#000"/><circle cx="12.7" cy="13.8" r="0.6" fill="#000"/><circle cx="6.6" cy="8.2" r="0.7" fill="#000"/><circle cx="9.6" cy="14.6" r="0.9" fill="#000"/><circle cx="16.8" cy="6.2" r="0.5" fill="#000"/><circle cx="14.1" cy="14.1" r="0.7" fill="#000"/><circle cx="12.0" cy="6.0" r="0.7" fill="#000"/></g></g></g>
<g transform="translate(181.3,22.3)"><rect width="21" height="21" fill="#fff"/><clipPath id="c17"><rect width="21" height="21"/></clipPath><g clip-path="url(#c17)"><g filter="url(#gs)" opacity=".92"><path d="M3 6c5 3 10-2 15 2M3 12c4-2 9 3 15 0M4 16c5-2 8 2 13-1" stroke="#111" stroke-width="1.4" fill="none"/><circle cx="17.8" cy="16.0" r="0.8" fill="#000"/><circle cx="18.5" cy="6.2" r="0.5" fill="#000"/><circle cx="4.6" cy="10.9" r="0.7" fill="#000"/><circle cx="18.0" cy="14.3" r="0.7" fill="#000"/><circle cx="15.0" cy="9.8" r="0.7" fill="#000"/><circle cx="2.7" cy="15.3" r="0.5" fill="#000"/><circle cx="17.6" cy="13.0" r="0.6" fill="#000"/><circle cx="4.2" cy="6.3" r="0.7" fill="#000"/><circle cx="13.9" cy="3.9" r="0.4" fill="#000"/><circle cx="10.9" cy="11.9" r="0.6" fill="#000"/></g></g></g>
<g transform="translate(0,45.1)"><rect width="21" height="21" fill="#fff"/><clipPath id="c18"><rect width="21" height="21"/></clipPath><g clip-path="url(#c18)"><g filter="url(#gs)" opacity=".92"><circle cx="10.5" cy="10.5" r="8" fill="none" stroke="#444" stroke-width="1" stroke-dasharray="2 1"/><circle cx="6.9" cy="11.8" r="0.3" fill="#555"/><circle cx="7.9" cy="10.0" r="0.8" fill="#555"/><circle cx="12.4" cy="15.5" r="0.5" fill="#555"/><circle cx="7.1" cy="7.2" r="0.8" fill="#555"/><circle cx="13.2" cy="8.0" r="0.3" fill="#555"/><circle cx="10.5" cy="12.8" r="0.5" fill="#555"/><circle cx="7.3" cy="12.7" r="0.8" fill="#555"/><circle cx="6.9" cy="4.4" r="0.5" fill="#555"/><circle cx="9.5" cy="12.9" r="0.4" fill="#555"/><circle cx="14.4" cy="13.6" r="0.6" fill="#555"/><circle cx="6.7" cy="16.6" r="0.5" fill="#555"/><circle cx="14.7" cy="7.0" r="0.4" fill="#555"/><circle cx="13.9" cy="7.8" r="0.8" fill="#555"/><circle cx="10.4" cy="6.4" r="0.4" fill="#555"/><circle cx="9.4" cy="12.6" r="0.8" fill="#555"/><circle cx="5.9" cy="9.1" r="0.4" fill="#555"/><circle cx="16.7" cy="5.8" r="0.3" fill="#555"/><circle cx="4.8" cy="9.1" r="0.7" fill="#555"/><circle cx="15.5" cy="13.5" r="0.8" fill="#555"/><circle cx="16.1" cy="8.3" r="0.4" fill="#555"/></g></g></g>
<g transform="translate(22.6,45.1)"><rect width="21" height="21" fill="#fff"/><clipPath id="c19"><rect width="21" height="21"/></clipPath><g clip-path="url(#c19)"><g filter="url(#gs)" opacity=".92"><path d="M1 8c5 6 14 6 19 0" stroke="#222" stroke-width="2.6" fill="none"/></g></g></g>
<g transform="translate(45.2,45.1)"><rect width="21" height="21" fill="#fff"/><clipPath id="c20"><rect width="21" height="21"/></clipPath><g clip-path="url(#c20)"><g filter="url(#gs)" opacity=".92"><rect x="6" y="2" width="9" height="17" fill="#333" opacity=".75" filter="url(#gb)"/></g></g></g>
<g transform="translate(68,45.1)"><rect width="21" height="21" fill="#fff"/><clipPath id="c21"><rect width="21" height="21"/></clipPath><g clip-path="url(#c21)"><g filter="url(#gs)" opacity=".92"><rect x="0" y="0" width="2" height="21" fill="#3a3a3a"/><rect x="18" y="0" width="3" height="21" fill="#3a3a3a"/><rect x="7" y="2" width="7" height="17" fill="#222"/><rect x="9" y="4" width="3" height="13" fill="#555"/></g></g></g>
<g transform="translate(90.8,45.1)"><rect width="21" height="21" fill="#fff"/><clipPath id="c22"><rect width="21" height="21"/></clipPath><g clip-path="url(#c22)"><g filter="url(#gs)" opacity=".92"><ellipse cx="10.5" cy="10.5" rx="5" ry="9" fill="none" stroke="#000" stroke-width="1.4" stroke-dasharray="1.5 1"/><circle cx="12.7" cy="14.2" r="0.4" fill="#000"/><circle cx="11.3" cy="8.7" r="0.5" fill="#000"/><circle cx="9.7" cy="5.5" r="0.4" fill="#000"/><circle cx="9.4" cy="8.3" r="0.8" fill="#000"/><circle cx="8.6" cy="17.5" r="0.5" fill="#000"/><circle cx="9.8" cy="15.3" r="0.7" fill="#000"/><circle cx="10.2" cy="3.7" r="0.6" fill="#000"/><circle cx="9.9" cy="16.8" r="0.5" fill="#000"/><circle cx="9.8" cy="16.5" r="0.4" fill="#000"/><circle cx="10.1" cy="15.2" r="0.7" fill="#000"/></g></g></g>
<g transform="translate(113.3,45.1)"><rect width="21" height="21" fill="#fff"/><clipPath id="c23"><rect width="21" height="21"/></clipPath><g clip-path="url(#c23)"><g filter="url(#gs)" opacity=".92"><rect x="8" y="3" width="5" height="15" fill="#111"/></g></g></g>
<g transform="translate(136,45.1)"><rect width="21" height="21" fill="#fff"/><clipPath id="c24"><rect width="21" height="21"/></clipPath><g clip-path="url(#c24)"><g filter="url(#gs)" opacity=".92"><rect x="8" y="3" width="5" height="15" fill="#222" stroke-dasharray="2 1"/><rect x="8" y="6" width="5" height="1" fill="#fff"/><rect x="8" y="11" width="5" height="1" fill="#fff"/></g></g></g>
<g transform="translate(158.5,45.1)"><rect width="21" height="21" fill="#fff"/><clipPath id="c25"><rect width="21" height="21"/></clipPath><g clip-path="url(#c25)"><g filter="url(#gs)" opacity=".92"><circle cx="10.5" cy="10.5" r="8.5" fill="#1a1a1a"/></g></g></g>
<g transform="translate(181.3,45.1)"><rect width="21" height="21" fill="#fff"/><clipPath id="c26"><rect width="21" height="21"/></clipPath><g clip-path="url(#c26)"><g filter="url(#gs)" opacity=".92"><path d="M5 8c0-5 11-5 11 1 0 5-3 8-6 8s-5-4-5-9zM9 4c1-2 3-2 4 0" stroke="#333" stroke-width="1" fill="none"/></g></g></g>
<g transform="translate(0,67.6)"><rect width="21" height="21" fill="#fff"/><clipPath id="c27"><rect width="21" height="21"/></clipPath><g clip-path="url(#c27)"><g filter="url(#gs)" opacity=".92"><path d="M10.5 7l1 3 3 .5-3 .5-1 3-1-3-3-.5 3-.5z" fill="#000"/></g></g></g>
<g transform="translate(22.6,67.6)"><rect width="21" height="21" fill="#fff"/><clipPath id="c28"><rect width="21" height="21"/></clipPath><g clip-path="url(#c28)"><g filter="url(#gs)" opacity=".92"><polygon points="14.8,10.5 14.5,11.4 13.9,12.3 16.2,16.6 11.6,14.2 8.8,16.6 4.9,16.6 5.4,13.2 4.7,11.8 -1.2,10.5 2.1,8.6 5.8,8.1 5.6,5.2 9.4,6.5 11.6,6.7 12.5,8.3 18.2,6.5 21.1,8.1" fill="#555"/><circle cx="12.8" cy="18.0" r="0.3" fill="#000"/><circle cx="6.0" cy="10.1" r="0.8" fill="#000"/><circle cx="18.2" cy="8.6" r="0.4" fill="#000"/><circle cx="9.3" cy="10.4" r="0.8" fill="#000"/><circle cx="5.1" cy="15.6" r="0.7" fill="#000"/><circle cx="16.0" cy="15.1" r="0.6" fill="#000"/><circle cx="7.6" cy="7.4" r="0.5" fill="#000"/><circle cx="15.3" cy="3.3" r="0.4" fill="#000"/><circle cx="14.8" cy="6.2" r="0.3" fill="#000"/><circle cx="2.6" cy="11.4" r="0.5" fill="#000"/><circle cx="18.7" cy="17.0" r="0.8" fill="#000"/><circle cx="6.5" cy="3.4" r="0.3" fill="#000"/><circle cx="10.5" cy="14.1" r="0.5" fill="#000"/><circle cx="6.0" cy="9.1" r="0.6" fill="#000"/><circle cx="13.5" cy="14.7" r="0.7" fill="#000"/></g></g></g>
<g transform="translate(45.2,67.6)"><rect width="21" height="21" fill="#fff"/><clipPath id="c29"><rect width="21" height="21"/></clipPath><g clip-path="url(#c29)"><g filter="url(#gs)" opacity=".92"><circle cx="10" cy="10" r="6" fill="#e8e8e8"/><circle cx="13.0" cy="4.8" r="0.6" fill="#555"/><circle cx="7.4" cy="11.5" r="0.4" fill="#555"/><circle cx="14.1" cy="6.0" r="0.4" fill="#555"/><circle cx="6.7" cy="5.3" r="0.7" fill="#555"/><circle cx="11.7" cy="7.9" r="0.5" fill="#555"/></g></g></g>
<g transform="translate(68,67.6)"><rect width="21" height="21" fill="#fff"/><clipPath id="c30"><rect width="21" height="21"/></clipPath><g clip-path="url(#c30)"><g filter="url(#gs)" opacity=".92"><path d="M10.5 1v13" stroke="#444" stroke-width="2.5" opacity=".7"/><path d="M10.5 14v5" stroke="#aaa" stroke-width="1.5"/></g></g></g>
<g transform="translate(90.8,67.6)"><rect width="21" height="21" fill="#fff"/><clipPath id="c31"><rect width="21" height="21"/></clipPath><g clip-path="url(#c31)"><g filter="url(#gs)" opacity=".92"><path d="M8 3v15M10 4v14M12 3v15" stroke="#555" stroke-width=".9"/></g></g></g>
<g transform="translate(113.3,67.6)"><rect width="21" height="21" fill="#fff"/><clipPath id="c32"><rect width="21" height="21"/></clipPath><g clip-path="url(#c32)"><g filter="url(#gs)" opacity=".92"><path d="M4 4l8 14M8 3l7 14M12 4l5 12" stroke="#222" stroke-width="1" fill="none"/></g></g></g>
<g transform="translate(136,67.6)"><rect width="21" height="21" fill="#fff"/><clipPath id="c33"><rect width="21" height="21"/></clipPath><g clip-path="url(#c33)"><g filter="url(#gs)" opacity=".92"><polygon points="21.7,10.5 18.2,11.3 15.6,11.7 16.4,13.0 13.3,13.2 10.5,14.0 8.8,12.1 5.9,12.5 2.4,12.3 0.8,11.5 -0.2,10.5 5.7,10.0 5.1,9.3 7.2,9.1 8.6,8.7 10.5,7.1 13.1,8.0 16.8,7.8 16.3,9.2 20.3,9.5" fill="#444"/></g></g></g>
<g transform="translate(158.5,67.6)"><rect width="21" height="21" fill="#fff"/><clipPath id="c34"><rect width="21" height="21"/></clipPath><g clip-path="url(#c34)"><g filter="url(#gs)" opacity=".92"><circle cx="9.6" cy="6.4" r="1.3" fill="#000"/><circle cx="18.1" cy="3.8" r="1.2" fill="#000"/><circle cx="12.5" cy="5.7" r="1.0" fill="#000"/><circle cx="4.4" cy="5.5" r="0.9" fill="#000"/><circle cx="12.2" cy="13.1" r="0.9" fill="#000"/><circle cx="2.2" cy="7.6" r="1.2" fill="#000"/></g></g></g>
<g transform="translate(181.3,67.6)"><rect width="21" height="21" fill="#fff"/><clipPath id="c35"><rect width="21" height="21"/></clipPath><g clip-path="url(#c35)"><g filter="url(#gs)" opacity=".92"><path d="M10.5 18c-9-6-9-12-5-13 3-1 5 2 5 2s2-3 5-2c4 1 4 7-5 13z" fill="#000"/></g></g></g>
<g transform="translate(0,89.9)"><rect width="21" height="21" fill="#fff"/><clipPath id="c36"><rect width="21" height="21"/></clipPath><g clip-path="url(#c36)"><g filter="url(#gs)" opacity=".92"><rect x="8" y="3" width="5" height="15" fill="#333" opacity=".6"/></g></g></g>
<g transform="translate(22.6,89.9)"><rect width="21" height="21" fill="#fff"/><clipPath id="c37"><rect width="21" height="21"/></clipPath><g clip-path="url(#c37)"><g filter="url(#gs)" opacity=".92"><polygon points="15.5,10.5 16.4,12.0 14.8,12.9 17.6,17.7 14.0,17.2 11.0,13.8 9.9,14.1 7.6,16.1 4.9,16.1 2.6,14.9 6.6,11.5 5.7,10.5 1.0,8.1 4.5,7.1 6.6,6.6 7.9,5.6 8.7,-0.2 11.4,5.1 14.1,3.6 14.8,6.1 16.6,7.1 21.5,7.7" fill="#000"/><circle cx="18.9" cy="8.2" r="0.6" fill="#000"/><circle cx="14.4" cy="5.5" r="0.5" fill="#000"/><circle cx="17.3" cy="9.2" r="1.1" fill="#000"/><circle cx="8.9" cy="17.0" r="0.8" fill="#000"/><circle cx="4.8" cy="2.3" r="0.9" fill="#000"/><circle cx="12.9" cy="17.5" r="0.6" fill="#000"/><circle cx="12.6" cy="8.3" r="0.9" fill="#000"/><circle cx="4.5" cy="6.8" r="0.9" fill="#000"/><circle cx="17.7" cy="3.8" r="0.8" fill="#000"/><circle cx="15.7" cy="18.4" r="0.6" fill="#000"/></g></g></g>
<g transform="translate(45.2,89.9)"><rect width="21" height="21" fill="#fff"/><clipPath id="c38"><rect width="21" height="21"/></clipPath><g clip-path="url(#c38)"><g filter="url(#gs)" opacity=".92"><polygon points="14.4,10.5 20.8,14.0 19.7,17.3 15.0,16.4 11.8,13.9 12.0,22.5 9.6,17.4 6.2,21.3 5.3,17.4 2.3,16.5 6.5,11.8 1.1,10.5 6.0,9.0 5.3,6.7 4.0,1.9 6.4,0.3 9.9,5.6 11.2,5.3 13.1,4.1 15.2,4.3 15.6,6.8 14.2,9.3" fill="#000"/><circle cx="6.2" cy="14.3" r="1.1" fill="#000"/><circle cx="2.7" cy="11.6" r="1.0" fill="#000"/><circle cx="2.6" cy="16.2" r="0.6" fill="#000"/><circle cx="12.2" cy="11.4" r="0.9" fill="#000"/><circle cx="7.2" cy="9.1" r="0.9" fill="#000"/><circle cx="9.2" cy="13.2" r="0.8" fill="#000"/><circle cx="9.5" cy="2.4" r="0.9" fill="#000"/><circle cx="10.3" cy="6.0" r="1.0" fill="#000"/><circle cx="15.3" cy="9.8" r="0.6" fill="#000"/><circle cx="10.0" cy="3.8" r="0.6" fill="#000"/></g></g></g>
<g transform="translate(68,89.9)"><rect width="21" height="21" fill="#fff"/><clipPath id="c39"><rect width="21" height="21"/></clipPath><g clip-path="url(#c39)"><g filter="url(#gs)" opacity=".92"><polygon points="17.9,12.0 15.0,12.7 16.6,14.2 15.3,15.3 11.8,14.1 10.5,16.5 9.1,14.2 4.7,16.0 2.2,15.0 2.8,13.3 6.1,12.0 2.9,10.8 4.8,9.9 3.7,7.3 8.9,9.6 10.5,6.6 14.2,6.3 16.3,8.0 19.0,8.9 15.8,11.1" fill="#888"/></g></g></g>
<g transform="translate(90.8,89.9)"><rect width="21" height="21" fill="#fff"/><clipPath id="c40"><rect width="21" height="21"/></clipPath><g clip-path="url(#c40)"><g filter="url(#gs)" opacity=".92"><circle cx="15.8" cy="10.9" r="0.7" fill="#666"/><circle cx="15.1" cy="6.3" r="0.6" fill="#666"/><circle cx="15.2" cy="4.9" r="0.4" fill="#666"/><circle cx="13.3" cy="6.2" r="0.6" fill="#666"/><circle cx="8.0" cy="15.4" r="0.3" fill="#666"/><circle cx="10.5" cy="16.9" r="0.3" fill="#666"/><circle cx="7.9" cy="11.1" r="0.4" fill="#666"/><circle cx="5.4" cy="6.5" r="0.3" fill="#666"/><circle cx="15.3" cy="13.5" r="0.6" fill="#666"/><circle cx="6.9" cy="15.0" r="0.3" fill="#666"/><circle cx="10.8" cy="12.9" r="0.4" fill="#666"/><circle cx="14.6" cy="11.8" r="0.5" fill="#666"/><circle cx="14.7" cy="5.5" r="0.7" fill="#666"/><circle cx="11.9" cy="9.5" r="0.6" fill="#666"/><circle cx="7.9" cy="17.9" r="0.5" fill="#666"/><circle cx="9.0" cy="14.7" r="0.4" fill="#666"/><circle cx="6.9" cy="14.4" r="0.2" fill="#666"/><circle cx="14.0" cy="7.6" r="0.5" fill="#666"/></g></g></g>
<g transform="translate(113.3,89.9)"><rect width="21" height="21" fill="#fff"/><clipPath id="c41"><rect width="21" height="21"/></clipPath><g clip-path="url(#c41)"><g filter="url(#gs)" opacity=".92"><polygon points="16.7,10.5 15.5,13.4 14.9,16.2 13.2,17.1 11.7,16.9 10.5,17.4 9.2,17.6 7.4,18.2 6.6,15.6 5.7,13.3 4.5,10.5 6.6,8.2 7.0,5.9 7.3,2.7 9.3,4.0 10.5,3.7 11.9,2.6 12.9,4.7 14.3,5.6 14.6,8.1" fill="#111"/><circle cx="11.3" cy="11.8" r="0.4" fill="#fff"/><circle cx="11.6" cy="10.1" r="0.4" fill="#fff"/><circle cx="14.4" cy="6.7" r="0.4" fill="#fff"/><circle cx="6.9" cy="12.6" r="0.7" fill="#fff"/><circle cx="13.0" cy="9.0" r="0.4" fill="#fff"/><circle cx="6.1" cy="12.7" r="0.6" fill="#fff"/><circle cx="9.2" cy="12.7" r="0.5" fill="#fff"/><circle cx="14.4" cy="14.0" r="0.4" fill="#fff"/><circle cx="14.1" cy="3.7" r="0.6" fill="#fff"/><circle cx="9.7" cy="6.6" r="0.3" fill="#fff"/><circle cx="13.0" cy="3.2" r="0.6" fill="#fff"/><circle cx="14.5" cy="5.1" r="0.4" fill="#fff"/></g></g></g>
<g transform="translate(136,89.9)"><rect width="21" height="21" fill="#fff"/><clipPath id="c42"><rect width="21" height="21"/></clipPath><g clip-path="url(#c42)"><g filter="url(#gs)" opacity=".92"><polygon points="15.7,10.5 15.3,13.3 14.7,16.0 13.7,18.5 11.9,18.2 10.5,19.0 9.0,18.5 8.0,16.8 6.0,16.4 5.3,13.5 5.2,10.5 6.4,8.1 6.0,4.7 7.3,2.7 9.0,2.0 10.5,0.8 12.0,2.1 13.2,3.8 14.1,5.8 14.9,7.9" fill="#000"/></g></g></g>
<g transform="translate(158.5,89.9)"><rect width="21" height="21" fill="#fff"/><clipPath id="c43"><rect width="21" height="21"/></clipPath><g clip-path="url(#c43)"><g filter="url(#gs)" opacity=".92"><circle cx="2.7" cy="7.7" r="0.7" fill="#000"/><circle cx="13.8" cy="16.4" r="0.7" fill="#000"/><circle cx="6.5" cy="11.4" r="0.6" fill="#000"/><circle cx="15.4" cy="10.9" r="0.5" fill="#000"/><circle cx="12.9" cy="18.4" r="0.4" fill="#000"/><circle cx="17.0" cy="2.3" r="0.5" fill="#000"/><circle cx="6.0" cy="14.6" r="0.9" fill="#000"/><circle cx="14.7" cy="7.6" r="0.8" fill="#000"/><circle cx="7.6" cy="6.1" r="0.8" fill="#000"/><circle cx="12.7" cy="13.8" r="0.7" fill="#000"/><circle cx="18.6" cy="10.0" r="0.8" fill="#000"/><circle cx="13.9" cy="16.6" r="0.6" fill="#000"/><circle cx="14.3" cy="11.7" r="0.5" fill="#000"/><circle cx="5.6" cy="12.6" r="0.3" fill="#000"/><circle cx="17.5" cy="4.5" r="0.3" fill="#000"/><circle cx="3.8" cy="17.8" r="0.5" fill="#000"/><circle cx="4.4" cy="2.5" r="0.3" fill="#000"/><circle cx="13.8" cy="12.8" r="0.7" fill="#000"/><circle cx="14.5" cy="3.1" r="0.7" fill="#000"/><circle cx="8.2" cy="15.9" r="0.8" fill="#000"/><circle cx="17.2" cy="3.1" r="0.8" fill="#000"/><circle cx="17.5" cy="18.1" r="0.4" fill="#000"/></g></g></g>
<g transform="translate(181.3,89.9)"><rect x="-.5" y="-.5" width="22" height="22" fill="#c4e4fa" stroke="#6aa8d8"/><rect x="8" y="3" width="5" height="15" fill="#111"/></g>
<g transform="translate(0,112.5)"><rect width="21" height="21" fill="#fff"/><clipPath id="c45"><rect width="21" height="21"/></clipPath><g clip-path="url(#c45)"><g filter="url(#gs)" opacity=".92"><path d="M10.5 2v17" stroke="#111" stroke-width="1.8" stroke-dasharray="2 1"/></g></g></g>
<g transform="translate(22.6,112.5)"><rect width="21" height="21" fill="#fff"/><clipPath id="c46"><rect width="21" height="21"/></clipPath><g clip-path="url(#c46)"><g filter="url(#gs)" opacity=".92"><rect x="0" y="0" width="21" height="21" fill="#3a3a3a"/><rect x="8" y="1" width="6" height="20" fill="#fff"/><path d="M10.5 3v16" stroke="#333" stroke-width="1" stroke-dasharray="1.5 1"/></g></g></g>
<g transform="translate(45.2,112.5)"><rect width="21" height="21" fill="#fff"/><clipPath id="c47"><rect width="21" height="21"/></clipPath><g clip-path="url(#c47)"><g filter="url(#gs)" opacity=".92"><rect x="0" y="0" width="21" height="21" fill="#3a3a3a"/><rect x="6" y="0" width="9" height="21" fill="#fff"/><rect x="8" y="1" width="5" height="19" fill="#111"/><rect x="8" y="2.0" width="1.5" height=".8" fill="#fff"/><rect x="8" y="4.1" width="1.5" height=".8" fill="#fff"/><rect x="8" y="6.2" width="1.5" height=".8" fill="#fff"/><rect x="8" y="8.3" width="1.5" height=".8" fill="#fff"/><rect x="8" y="10.4" width="1.5" height=".8" fill="#fff"/><rect x="8" y="12.5" width="1.5" height=".8" fill="#fff"/><rect x="8" y="14.600000000000001" width="1.5" height=".8" fill="#fff"/><rect x="8" y="16.700000000000003" width="1.5" height=".8" fill="#fff"/><rect x="8" y="18.8" width="1.5" height=".8" fill="#fff"/></g></g></g>
<g transform="translate(68,112.5)"><rect width="21" height="21" fill="#fff"/><clipPath id="c48"><rect width="21" height="21"/></clipPath><g clip-path="url(#c48)"><g filter="url(#gs)" opacity=".92"><path d="M10.5 2v17" stroke="#000" stroke-width="1.6" stroke-dasharray="1 2.5"/></g></g></g>
<g transform="translate(90.8,112.5)"><rect width="21" height="21" fill="#fff"/><clipPath id="c49"><rect width="21" height="21"/></clipPath><g clip-path="url(#c49)"><g filter="url(#gs)" opacity=".92"><rect x="0" y="0" width="21" height="21" fill="#3a3a3a"/><rect x="0" y="6" width="21" height="9" fill="#fff"/><circle cx="5.5" cy="8.6" r="0.6" fill="#000"/><circle cx="16.4" cy="12.1" r="1.0" fill="#000"/><circle cx="16.0" cy="11.2" r="0.8" fill="#000"/><circle cx="3.7" cy="8.5" r="1.1" fill="#000"/><circle cx="5.5" cy="9.6" r="0.9" fill="#000"/><circle cx="2.4" cy="9.3" r="0.8" fill="#000"/><circle cx="14.2" cy="9.8" r="0.8" fill="#000"/><circle cx="18.4" cy="10.5" r="1.2" fill="#000"/><circle cx="12.5" cy="8.2" r="0.9" fill="#000"/><circle cx="9.4" cy="11.9" r="0.8" fill="#000"/><circle cx="14.0" cy="10.7" r="0.8" fill="#000"/><circle cx="16.7" cy="8.5" r="1.2" fill="#000"/></g></g></g>
<g transform="translate(113.3,112.5)"><rect width="21" height="21" fill="#fff"/><clipPath id="c50"><rect width="21" height="21"/></clipPath><g clip-path="url(#c50)"><g filter="url(#gs)" opacity=".92"><path d="M4 17l12-12M6 12c3 0 6 2 9 5M8 6l2 10" stroke="#555" stroke-width=".8" fill="none"/></g></g></g>
<g transform="translate(136,112.5)"><rect width="21" height="21" fill="#fff"/><clipPath id="c51"><rect width="21" height="21"/></clipPath><g clip-path="url(#c51)"><g filter="url(#gs)" opacity=".92"><circle cx="5.6" cy="4.0" r="0.7" fill="#000"/><circle cx="14.4" cy="16.7" r="0.5" fill="#000"/><circle cx="10.4" cy="10.4" r="1.1" fill="#000"/><circle cx="5.8" cy="10.4" r="0.8" fill="#000"/><circle cx="15.5" cy="7.4" r="1.3" fill="#000"/><circle cx="7.3" cy="6.8" r="1.1" fill="#000"/><circle cx="10.5" cy="5.4" r="1.0" fill="#000"/><circle cx="4.2" cy="14.2" r="1.1" fill="#000"/><circle cx="14.8" cy="12.2" r="0.8" fill="#000"/><circle cx="9.0" cy="9.1" r="1.2" fill="#000"/><circle cx="4.3" cy="15.5" r="0.5" fill="#000"/><circle cx="6.1" cy="7.4" r="1.2" fill="#000"/><circle cx="10.5" cy="8.9" r="1.2" fill="#000"/><circle cx="6.5" cy="10.0" r="0.9" fill="#000"/><circle cx="14.3" cy="13.8" r="1.0" fill="#000"/><circle cx="8.2" cy="8.2" r="0.6" fill="#000"/></g></g></g>
<g transform="translate(158.5,112.5)"><rect width="21" height="21" fill="#fff"/><clipPath id="c52"><rect width="21" height="21"/></clipPath><g clip-path="url(#c52)"><g filter="url(#gs)" opacity=".92"><polygon points="19.9,10.0 18.2,11.4 17.5,12.9 13.3,12.2 12.5,13.6 10.5,15.1 8.2,14.1 7.9,12.0 5.1,12.3 1.3,11.7 5.3,10.0 5.9,9.1 6.0,8.1 5.5,6.1 7.6,4.9 10.5,7.4 11.9,7.5 13.6,7.6 15.2,8.1 17.3,8.7" fill="#999"/></g></g></g>
<g transform="translate(181.3,112.5)"><rect width="21" height="21" fill="#fff"/><clipPath id="c53"><rect width="21" height="21"/></clipPath><g clip-path="url(#c53)"><g filter="url(#gs)" opacity=".92"><path d="M6 4c3 4 6 10 11 12M7 10c2 2 5 3 8 3" stroke="#888" stroke-width="1.3" fill="none"/></g></g></g>
<g transform="translate(0,135.3)"><rect width="21" height="21" fill="#fff"/><clipPath id="c54"><rect width="21" height="21"/></clipPath><g clip-path="url(#c54)"><g filter="url(#gs)" opacity=".92"><circle cx="4.7" cy="7.6" r="0.4" fill="#333"/><circle cx="18.6" cy="14.4" r="0.4" fill="#333"/><circle cx="18.4" cy="3.7" r="0.6" fill="#333"/><circle cx="18.7" cy="15.5" r="0.8" fill="#333"/><circle cx="9.4" cy="5.3" r="0.7" fill="#333"/><circle cx="3.8" cy="5.5" r="0.6" fill="#333"/><circle cx="2.6" cy="8.8" r="0.9" fill="#333"/><circle cx="13.8" cy="10.5" r="0.7" fill="#333"/><circle cx="9.9" cy="4.4" r="0.7" fill="#333"/><circle cx="8.9" cy="14.6" r="0.9" fill="#333"/><circle cx="9.3" cy="11.8" r="0.8" fill="#333"/><circle cx="9.2" cy="5.9" r="0.8" fill="#333"/><circle cx="17.0" cy="15.2" r="0.8" fill="#333"/><circle cx="16.5" cy="13.6" r="0.7" fill="#333"/><circle cx="9.7" cy="7.3" r="0.7" fill="#333"/><circle cx="3.7" cy="9.1" r="0.8" fill="#333"/><circle cx="14.1" cy="12.7" r="0.5" fill="#333"/><circle cx="9.2" cy="9.7" r="0.7" fill="#333"/><circle cx="9.0" cy="13.5" r="1.0" fill="#333"/><circle cx="5.1" cy="13.1" r="0.8" fill="#333"/><circle cx="8.6" cy="10.3" r="1.0" fill="#333"/><circle cx="2.6" cy="11.2" r="0.4" fill="#333"/><circle cx="15.3" cy="18.0" r="0.7" fill="#333"/><circle cx="3.7" cy="11.8" r="0.7" fill="#333"/><circle cx="14.2" cy="10.7" r="0.7" fill="#333"/><circle cx="16.1" cy="10.9" r="0.6" fill="#333"/><circle cx="18.1" cy="5.6" r="0.8" fill="#333"/><circle cx="8.7" cy="15.0" r="0.4" fill="#333"/><circle cx="18.7" cy="8.0" r="0.3" fill="#333"/><circle cx="6.7" cy="8.8" r="0.3" fill="#333"/><circle cx="9.1" cy="9.1" r="0.8" fill="#333"/><circle cx="8.0" cy="6.5" r="0.5" fill="#333"/><circle cx="14.6" cy="18.0" r="0.7" fill="#333"/><circle cx="5.7" cy="15.6" r="0.6" fill="#333"/><circle cx="5.6" cy="4.2" r="0.8" fill="#333"/><circle cx="15.8" cy="12.8" r="0.6" fill="#333"/><circle cx="11.6" cy="5.8" r="1.0" fill="#333"/><circle cx="8.0" cy="12.9" r="0.9" fill="#333"/><circle cx="15.9" cy="10.0" r="0.5" fill="#333"/><circle cx="11.3" cy="4.1" r="0.9" fill="#333"/></g></g></g>
<g transform="translate(22.6,135.3)"><rect width="21" height="21" fill="#fff"/><clipPath id="c55"><rect width="21" height="21"/></clipPath><g clip-path="url(#c55)"><g filter="url(#gs)" opacity=".92"><polygon points="16.3,10.5 20.0,14.0 14.6,13.9 14.0,16.0 12.0,15.9 10.5,17.8 9.2,15.2 8.8,13.1 3.3,16.5 5.6,12.3 5.6,10.5 5.4,8.6 5.0,5.9 6.7,4.6 8.0,1.6 10.5,1.0 12.3,4.1 16.7,0.7 18.6,3.8 13.6,9.3" fill="#444"/><circle cx="16.1" cy="17.4" r="0.8" fill="#333"/><circle cx="4.4" cy="16.1" r="0.7" fill="#333"/><circle cx="2.3" cy="2.2" r="0.9" fill="#333"/><circle cx="13.2" cy="6.3" r="0.4" fill="#333"/><circle cx="4.4" cy="6.0" r="0.8" fill="#333"/><circle cx="7.9" cy="4.6" r="0.8" fill="#333"/><circle cx="15.5" cy="4.9" r="0.8" fill="#333"/><circle cx="12.3" cy="15.3" r="0.7" fill="#333"/><circle cx="17.2" cy="15.4" r="0.8" fill="#333"/><circle cx="5.4" cy="13.8" r="0.6" fill="#333"/><circle cx="14.6" cy="9.5" r="0.8" fill="#333"/><circle cx="11.4" cy="6.5" r="0.4" fill="#333"/><circle cx="4.4" cy="10.4" r="0.3" fill="#333"/><circle cx="9.9" cy="4.5" r="0.6" fill="#333"/><circle cx="10.5" cy="11.2" r="0.8" fill="#333"/><circle cx="2.1" cy="16.3" r="0.6" fill="#333"/><circle cx="11.6" cy="13.3" r="0.8" fill="#333"/><circle cx="8.4" cy="9.1" r="0.9" fill="#333"/><circle cx="3.3" cy="12.8" r="0.7" fill="#333"/><circle cx="2.5" cy="12.4" r="0.7" fill="#333"/></g></g></g>
<g transform="translate(45.2,135.3)"><rect width="21" height="21" fill="#fff"/><clipPath id="c56"><rect width="21" height="21"/></clipPath><g clip-path="url(#c56)"><g filter="url(#gs)" opacity=".92"><circle cx="5" cy="5" r="1.6" fill="none" stroke="#222" stroke-width=".9"/><circle cx="9" cy="5" r="1.6" fill="none" stroke="#222" stroke-width=".9"/><circle cx="13" cy="5" r="1.6" fill="none" stroke="#222" stroke-width=".9"/><circle cx="17" cy="5" r="1.6" fill="none" stroke="#222" stroke-width=".9"/><circle cx="5" cy="9" r="1.6" fill="none" stroke="#222" stroke-width=".9"/><circle cx="9" cy="9" r="1.6" fill="none" stroke="#222" stroke-width=".9"/><circle cx="13" cy="9" r="1.6" fill="none" stroke="#222" stroke-width=".9"/><circle cx="17" cy="9" r="1.6" fill="none" stroke="#222" stroke-width=".9"/><circle cx="5" cy="13" r="1.6" fill="none" stroke="#222" stroke-width=".9"/><circle cx="9" cy="13" r="1.6" fill="none" stroke="#222" stroke-width=".9"/><circle cx="13" cy="13" r="1.6" fill="none" stroke="#222" stroke-width=".9"/><circle cx="17" cy="13" r="1.6" fill="none" stroke="#222" stroke-width=".9"/><circle cx="5" cy="17" r="1.6" fill="none" stroke="#222" stroke-width=".9"/><circle cx="9" cy="17" r="1.6" fill="none" stroke="#222" stroke-width=".9"/><circle cx="13" cy="17" r="1.6" fill="none" stroke="#222" stroke-width=".9"/><circle cx="17" cy="17" r="1.6" fill="none" stroke="#222" stroke-width=".9"/></g></g></g>
<g transform="translate(68,135.3)"><rect width="21" height="21" fill="#fff"/><clipPath id="c57"><rect width="21" height="21"/></clipPath><g clip-path="url(#c57)"><g filter="url(#gs)" opacity=".92"><path d="M3 5l15 3M3 9l15 3M4 13l13 3M5 17l12 2" stroke="#444" stroke-width="1" fill="none"/></g></g></g>
<g transform="translate(90.8,135.3)"><rect width="21" height="21" fill="#fff"/><clipPath id="c58"><rect width="21" height="21"/></clipPath><g clip-path="url(#c58)"><g filter="url(#gs)" opacity=".92"><path d="M3 3l6 16M7 2l5 17M12 3l6 14M5 8l12 10" stroke="#666" stroke-width=".8" fill="none"/></g></g></g>
<g transform="translate(113.3,135.3)"><rect width="21" height="21" fill="#fff"/><clipPath id="c59"><rect width="21" height="21"/></clipPath><g clip-path="url(#c59)"><g filter="url(#gs)" opacity=".92"><path d="M14 3c-4 2-3 6-5 9s-1 6-3 7" stroke="#000" stroke-width="2.5" fill="none"/></g></g></g>
<g transform="translate(136,135.3)"><rect width="21" height="21" fill="#fff"/><clipPath id="c60"><rect width="21" height="21"/></clipPath><g clip-path="url(#c60)"><g filter="url(#gs)" opacity=".92"><path d="M5 6l5 3 5-4-2 7 4 4-6-1-3 3-1-5z" fill="#000"/></g></g></g>
<g transform="translate(158.5,135.3)"><rect width="21" height="21" fill="#fff"/><clipPath id="c61"><rect width="21" height="21"/></clipPath><g clip-path="url(#c61)"><g filter="url(#gs)" opacity=".92"><path d="M15 3c-3 4-4 8-6 14M9 17l2-5" stroke="#000" stroke-width="2" fill="none"/></g></g></g>
<g transform="translate(181.3,135.3)"><rect width="21" height="21" fill="#fff"/><clipPath id="c62"><rect width="21" height="21"/></clipPath><g clip-path="url(#c62)"><g filter="url(#gs)" opacity=".92"><polygon points="21.1,10.5 15.8,11.8 19.8,15.6 15.1,15.1 13.4,15.9 12.0,19.3 10.1,13.1 6.8,17.4 5.2,15.7 5.8,13.1 0.9,12.9 4.6,10.5 4.0,8.9 4.4,7.2 4.4,4.5 8.6,6.9 9.6,5.0 11.4,5.1 13.6,4.7 16.9,4.2 14.9,8.1 19.9,8.1" fill="#000"/></g></g></g>
<g transform="translate(0,158.2)"><rect width="21" height="21" fill="#fff"/><clipPath id="c63"><rect width="21" height="21"/></clipPath><g clip-path="url(#c63)"><g filter="url(#gs)" opacity=".92"><polygon points="18.0,10.5 18.2,12.8 16.3,14.2 15.8,16.6 14.8,19.9 11.7,19.2 9.2,19.8 7.5,17.0 5.8,15.9 4.6,14.3 2.4,12.9 1.9,10.5 1.5,7.9 5.6,7.4 4.6,3.6 6.4,1.5 9.3,2.4 11.3,4.7 13.4,4.1 14.2,6.2 16.0,7.0 20.1,7.7" fill="#777"/><circle cx="12.3" cy="13.2" r="0.9" fill="#333"/><circle cx="17.5" cy="12.4" r="0.7" fill="#333"/><circle cx="12.7" cy="13.8" r="0.7" fill="#333"/><circle cx="13.6" cy="5.6" r="0.8" fill="#333"/><circle cx="9.8" cy="15.0" r="0.4" fill="#333"/><circle cx="5.1" cy="2.6" r="0.8" fill="#333"/><circle cx="17.5" cy="13.1" r="0.6" fill="#333"/><circle cx="16.0" cy="15.4" r="0.7" fill="#333"/><circle cx="6.4" cy="7.1" r="0.6" fill="#333"/><circle cx="7.4" cy="9.3" r="0.7" fill="#333"/><circle cx="17.9" cy="2.9" r="0.7" fill="#333"/><circle cx="2.7" cy="4.0" r="0.9" fill="#333"/><circle cx="11.8" cy="17.6" r="0.6" fill="#333"/><circle cx="2.2" cy="8.6" r="0.7" fill="#333"/><circle cx="17.9" cy="18.7" r="0.6" fill="#333"/><circle cx="9.0" cy="3.7" r="0.8" fill="#333"/><circle cx="5.6" cy="4.6" r="0.3" fill="#333"/><circle cx="2.1" cy="13.6" r="0.4" fill="#333"/><circle cx="18.4" cy="3.5" r="0.9" fill="#333"/><circle cx="4.2" cy="2.3" r="0.8" fill="#333"/></g></g></g>
<g transform="translate(22.6,158.2)"><rect width="21" height="21" fill="#fff"/><clipPath id="c64"><rect width="21" height="21"/></clipPath><g clip-path="url(#c64)"><g filter="url(#gs)" opacity=".92"><path d="M3 10c0-5 15-5 15 0z" fill="#111"/><path d="M8 10v5h5v-5" fill="#444"/></g></g></g>
<g transform="translate(45.2,158.2)"><rect width="21" height="21" fill="#fff"/><clipPath id="c65"><rect width="21" height="21"/></clipPath><g clip-path="url(#c65)"><g filter="url(#gs)" opacity=".92"><circle cx="6.1" cy="14.5" r="0.7" fill="#000"/><circle cx="2.9" cy="15.2" r="1.0" fill="#000"/><circle cx="16.5" cy="14.4" r="0.7" fill="#000"/><circle cx="12.7" cy="14.1" r="0.9" fill="#000"/><circle cx="17.8" cy="6.3" r="1.2" fill="#000"/><circle cx="14.2" cy="2.2" r="0.6" fill="#000"/><circle cx="13.1" cy="15.9" r="0.6" fill="#000"/><circle cx="7.3" cy="14.4" r="0.7" fill="#000"/><circle cx="16.6" cy="10.3" r="0.6" fill="#000"/><circle cx="8.2" cy="11.8" r="0.9" fill="#000"/><circle cx="13.5" cy="4.5" r="1.1" fill="#000"/><circle cx="8.2" cy="13.0" r="1.0" fill="#000"/></g></g></g>
<g transform="translate(68,158.2)"><rect width="21" height="21" fill="#fff"/><clipPath id="c66"><rect width="21" height="21"/></clipPath><g clip-path="url(#c66)"><g filter="url(#gs)" opacity=".92"><path d="M10 2c2 5 0 10 1 17" stroke="#000" stroke-width="2" fill="none"/></g></g></g>
<g transform="translate(90.8,158.2)"><rect width="21" height="21" fill="#fff"/><clipPath id="c67"><rect width="21" height="21"/></clipPath><g clip-path="url(#c67)"><g filter="url(#gs)" opacity=".92"><path d="M10.5 3v15" stroke="#000" stroke-width="1.4"/></g></g></g>
<g transform="translate(113.3,158.2)"><rect width="21" height="21" fill="#fff"/><clipPath id="c68"><rect width="21" height="21"/></clipPath><g clip-path="url(#c68)"><g filter="url(#gs)" opacity=".92"><path d="M3 4l7 7 8-5M10 11l-5 7M10 11l6 7M3 12l7-1" stroke="#333" stroke-width=".9" fill="none"/></g></g></g>
<g transform="translate(136,158.2)"><rect width="21" height="21" fill="#fff"/><clipPath id="c69"><rect width="21" height="21"/></clipPath><g clip-path="url(#c69)"><g filter="url(#gs)" opacity=".92"><circle cx="9.1" cy="8.6" r="0.9" fill="#000"/><circle cx="18.1" cy="15.3" r="0.7" fill="#000"/><circle cx="7.0" cy="3.0" r="1.0" fill="#000"/><circle cx="14.0" cy="16.1" r="0.5" fill="#000"/><circle cx="12.3" cy="18.6" r="0.9" fill="#000"/><circle cx="12.2" cy="7.2" r="0.6" fill="#000"/><circle cx="17.1" cy="8.4" r="0.8" fill="#000"/><circle cx="12.2" cy="17.2" r="0.9" fill="#000"/></g></g></g>
<g transform="translate(158.5,158.2)"><rect width="21" height="21" fill="#fff"/><clipPath id="c70"><rect width="21" height="21"/></clipPath><g clip-path="url(#c70)"><g filter="url(#gs)" opacity=".92"><circle cx="7.2" cy="5.0" r="0.5" fill="#000"/><circle cx="9.3" cy="11.5" r="0.9" fill="#000"/><circle cx="16.3" cy="5.5" r="0.9" fill="#000"/><circle cx="15.2" cy="14.5" r="0.7" fill="#000"/><circle cx="7.1" cy="14.4" r="0.9" fill="#000"/><circle cx="13.3" cy="15.1" r="0.5" fill="#000"/><circle cx="4.3" cy="11.1" r="0.9" fill="#000"/><circle cx="6.0" cy="13.3" r="1.0" fill="#000"/><circle cx="6.5" cy="11.7" r="0.8" fill="#000"/><circle cx="10.0" cy="7.3" r="0.5" fill="#000"/><circle cx="14.3" cy="13.7" r="0.6" fill="#000"/><circle cx="4.3" cy="13.9" r="0.8" fill="#000"/><circle cx="6.5" cy="11.4" r="0.9" fill="#000"/><circle cx="16.3" cy="10.7" r="0.6" fill="#000"/><circle cx="11.8" cy="7.1" r="0.4" fill="#000"/><circle cx="5.7" cy="12.7" r="0.6" fill="#000"/><circle cx="11.5" cy="9.4" r="0.7" fill="#000"/><circle cx="5.2" cy="5.5" r="1.0" fill="#000"/></g></g></g>
<g transform="translate(181.3,158.2)"><rect width="21" height="21" fill="#fff"/><clipPath id="c71"><rect width="21" height="21"/></clipPath><g clip-path="url(#c71)"><g filter="url(#gs)" opacity=".92"><rect x="3" y="3" width="15" height="15" fill="#111"/><circle cx="8.9" cy="5.4" r="0.7" fill="#555"/><circle cx="14.2" cy="6.0" r="0.6" fill="#555"/><circle cx="8.5" cy="10.8" r="0.4" fill="#555"/><circle cx="4.4" cy="16.9" r="0.7" fill="#555"/><circle cx="10.3" cy="11.4" r="0.5" fill="#555"/><circle cx="14.1" cy="9.5" r="0.8" fill="#555"/></g></g></g>
<g transform="translate(0,180.7)"><rect width="21" height="21" fill="#fff"/><clipPath id="c72"><rect width="21" height="21"/></clipPath><g clip-path="url(#c72)"><g filter="url(#gs)" opacity=".92"><polygon points="20.9,10.5 20.9,13.0 20.5,15.6 15.9,15.3 13.8,15.5 12.4,16.8 10.5,17.0 8.8,16.3 7.2,15.6 3.9,16.4 1.0,15.4 2.0,12.5 -0.9,10.5 -0.3,7.9 4.7,7.5 3.8,4.5 6.3,4.0 8.7,4.5 10.5,0.3 12.5,3.9 15.2,3.3 17.4,4.4 20.4,5.4 20.1,8.2" fill="#111"/><circle cx="8.5" cy="9.5" r="0.4" fill="#333"/><circle cx="19.3" cy="19.8" r="0.5" fill="#333"/><circle cx="1.7" cy="5.9" r="0.5" fill="#333"/><circle cx="18.2" cy="18.2" r="0.9" fill="#333"/><circle cx="1.9" cy="15.9" r="0.8" fill="#333"/><circle cx="13.3" cy="19.7" r="0.3" fill="#333"/><circle cx="3.8" cy="15.3" r="1.0" fill="#333"/><circle cx="13.9" cy="6.7" r="0.7" fill="#333"/><circle cx="15.4" cy="3.0" r="0.5" fill="#333"/><circle cx="5.9" cy="3.4" r="0.6" fill="#333"/><circle cx="4.2" cy="5.5" r="0.4" fill="#333"/><circle cx="13.9" cy="1.2" r="0.8" fill="#333"/><circle cx="4.7" cy="1.7" r="0.9" fill="#333"/><circle cx="5.2" cy="18.7" r="0.9" fill="#333"/><circle cx="17.9" cy="3.7" r="0.6" fill="#333"/><circle cx="2.8" cy="18.6" r="0.9" fill="#333"/><circle cx="12.9" cy="9.6" r="0.5" fill="#333"/><circle cx="16.6" cy="10.1" r="0.7" fill="#333"/><circle cx="3.7" cy="5.2" r="0.3" fill="#333"/><circle cx="14.6" cy="11.5" r="0.4" fill="#333"/></g></g></g>
<g transform="translate(22.6,180.7)"><rect width="21" height="21" fill="#fff"/><clipPath id="c73"><rect width="21" height="21"/></clipPath><g clip-path="url(#c73)"><g filter="url(#gs)" opacity=".92"><polygon points="20.9,10.5 16.8,12.2 16.9,14.2 14.6,14.6 13.8,16.2 13.1,20.3 10.5,17.4 9.0,16.2 6.5,17.4 5.7,15.3 1.3,15.8 5.2,11.9 -0.6,10.5 5.5,9.2 1.4,5.2 4.1,4.1 7.4,5.2 8.5,2.9 10.5,3.9 12.2,4.3 13.5,5.2 15.5,5.5 20.1,4.9 21.3,7.6" fill="#333"/><circle cx="18.6" cy="2.9" r="0.5" fill="#222"/><circle cx="18.0" cy="2.1" r="0.8" fill="#222"/><circle cx="6.6" cy="19.6" r="0.3" fill="#222"/><circle cx="16.3" cy="7.5" r="0.4" fill="#222"/><circle cx="1.0" cy="16.8" r="0.7" fill="#222"/><circle cx="4.5" cy="9.3" r="0.9" fill="#222"/><circle cx="5.1" cy="11.9" r="0.4" fill="#222"/><circle cx="4.4" cy="15.6" r="0.8" fill="#222"/><circle cx="4.7" cy="2.5" r="0.4" fill="#222"/><circle cx="12.6" cy="10.4" r="0.5" fill="#222"/><circle cx="4.9" cy="12.6" r="0.8" fill="#222"/><circle cx="16.4" cy="12.1" r="0.4" fill="#222"/><circle cx="2.2" cy="14.9" r="0.6" fill="#222"/><circle cx="14.7" cy="2.1" r="0.9" fill="#222"/><circle cx="7.4" cy="17.0" r="0.9" fill="#222"/><circle cx="10.4" cy="1.3" r="0.9" fill="#222"/><circle cx="10.1" cy="17.6" r="0.5" fill="#222"/><circle cx="4.5" cy="16.8" r="0.6" fill="#222"/><circle cx="4.1" cy="8.1" r="0.7" fill="#222"/><circle cx="1.1" cy="10.9" r="0.6" fill="#222"/></g></g></g>
<g transform="translate(45.2,180.7)"><rect width="21" height="21" fill="#fff"/><clipPath id="c74"><rect width="21" height="21"/></clipPath><g clip-path="url(#c74)"><g filter="url(#gs)" opacity=".92"><circle cx="10.8" cy="4.1" r="0.4" fill="#888"/><circle cx="15.9" cy="16.7" r="0.3" fill="#888"/><circle cx="14.1" cy="8.5" r="0.4" fill="#888"/><circle cx="3.0" cy="16.8" r="0.5" fill="#888"/><circle cx="10.4" cy="10.7" r="0.4" fill="#888"/><circle cx="11.1" cy="2.4" r="0.5" fill="#888"/><circle cx="5.8" cy="5.1" r="0.2" fill="#888"/><circle cx="6.3" cy="15.9" r="0.2" fill="#888"/><circle cx="3.6" cy="13.9" r="0.3" fill="#888"/><circle cx="2.3" cy="12.2" r="0.4" fill="#888"/></g></g></g>
<g transform="translate(68,180.7)"><rect width="21" height="21" fill="#fff"/><clipPath id="c75"><rect width="21" height="21"/></clipPath><g clip-path="url(#c75)"><g filter="url(#gs)" opacity=".92"><path d="M3 8c3-4 6 0 8-2s6-2 7 2-3 5-5 6 2 4-2 5-6-3-6-5-4-2-2-6z" fill="#000"/></g></g></g>
<g transform="translate(90.8,180.7)"><rect width="21" height="21" fill="#fff"/><clipPath id="c76"><rect width="21" height="21"/></clipPath><g clip-path="url(#c76)"><g filter="url(#gs)" opacity=".92"><circle cx="3.5" cy="14.0" r="1.3" fill="#000"/><circle cx="4.0" cy="11.3" r="1.3" fill="#000"/><circle cx="5.6" cy="9.0" r="1.3" fill="#000"/><circle cx="8.0" cy="7.5" r="1.3" fill="#000"/><circle cx="10.7" cy="7.0" r="1.3" fill="#000"/><circle cx="13.4" cy="7.6" r="1.3" fill="#000"/><circle cx="15.7" cy="9.3" r="1.3" fill="#000"/><circle cx="17.1" cy="11.7" r="1.3" fill="#000"/><circle cx="17.5" cy="14.4" r="1.3" fill="#000"/></g></g></g>
<g transform="translate(113.3,180.7)"><rect width="21" height="21" fill="#fff"/><clipPath id="c77"><rect width="21" height="21"/></clipPath><g clip-path="url(#c77)"><g filter="url(#gs)" opacity=".92"><path d="M4 9h13M5 11h11M6 13h10" stroke="#888" stroke-width="1" fill="none"/></g></g></g>
<g transform="translate(136,180.7)"><rect width="21" height="21" fill="#fff"/><clipPath id="c78"><rect width="21" height="21"/></clipPath><g clip-path="url(#c78)"><g filter="url(#gs)" opacity=".92"><polygon points="17.7,10.5 18.5,13.1 13.9,13.0 16.1,18.3 13.1,18.6 10.5,14.3 9.2,14.6 6.4,16.1 4.8,14.6 5.3,12.2 6.1,10.5 4.5,8.5 6.9,7.9 6.0,4.3 7.6,1.4 10.5,6.0 12.8,3.4 15.6,3.4 14.3,7.8 19.3,7.6" fill="#555"/><circle cx="17.1" cy="8.8" r="0.6" fill="#222"/><circle cx="15.6" cy="10.9" r="0.5" fill="#222"/><circle cx="17.1" cy="14.7" r="0.5" fill="#222"/><circle cx="6.6" cy="8.0" r="0.6" fill="#222"/><circle cx="17.7" cy="15.1" r="0.8" fill="#222"/><circle cx="15.2" cy="15.7" r="0.3" fill="#222"/><circle cx="10.8" cy="17.4" r="0.9" fill="#222"/><circle cx="6.7" cy="9.3" r="0.7" fill="#222"/><circle cx="8.5" cy="11.0" r="0.3" fill="#222"/><circle cx="9.5" cy="10.6" r="0.3" fill="#222"/><circle cx="5.1" cy="17.5" r="0.8" fill="#222"/><circle cx="17.1" cy="12.5" r="0.8" fill="#222"/></g></g></g>
<rect x="158.5" y="180.7" width="21" height="21" fill="#404040"/>
<rect x="181.3" y="180.7" width="21" height="21" fill="#404040"/>
</svg></div>
<div class="inp" style="left:556px;top:469px;width:220px;height:17px;background:#3c3c3c;border-color:#3a3a3a"></div>
<div class="t" style="left:558px;top:473px;color:#8a8a8a">Search</div>
<div class="btn" style="left:556px;top:492px;width:61px;height:17px"></div>
<div class="btn" style="left:619px;top:492px;width:60px;height:17px"></div>
<div class="btn" style="left:681px;top:492px;width:65px;height:17px"></div>
<div class="btn" style="left:748px;top:492px;width:28px;height:17px"></div>
<div class="t" style="left:577px;top:496px">Import</div>
<div class="t" style="left:639.5px;top:496px">Stamp</div>
<div class="t" style="left:697px;top:496px">Clipboard</div>
<svg style="left:0;top:0" width="800" height="702"><path d="M566 500.5h8M570 496.5v8M628.5 500.5h8M632.5 496.5v8M686 500.5h8M690 496.5v8" stroke="#ddd" stroke-width="1"/><path d="M757.5 496.5h8M759.5 496.5v-1h4v1M758.5 497.5l.7 7.5h5l.7-7.5M761 499v4.5M762.5 499v4.5" stroke="#ddd" fill="none" stroke-width="1"/></svg>
<!-- right params -->
<div class="t" style="left:783px;top:196px;font-size:14px;color:#e6e6e6">plain_rake</div>
<div class="t" style="left:783px;top:214px;font-size:10.5px">Mask (150 x 150)</div>
<div class="t" style="left:786px;top:242px">Size:</div>
<div class="a" style="left:829px;top:239px;width:163px;height:16px;background:#383838;border:1px solid #333"></div>
<div class="a" style="left:829px;top:239px;width:32px;height:16px;background:#52718f;border:1px solid #5d84aa"></div>
<div class="t" style="left:892px;top:242px">7,50 px</div>
<div class="a" style="left:991px;top:239px;width:11px;height:16px;background:#3d3d3d;border:1px solid #333"></div>
<div class="t" style="left:785px;top:267px">Rotation:</div>
<div class="a" style="left:829px;top:264px;width:163px;height:16px;background:#383838;border:1px solid #333"></div>
<div class="t" style="left:904px;top:267px">0°</div>
<div class="a" style="left:991px;top:264px;width:11px;height:16px;background:#3d3d3d;border:1px solid #333"></div>
<div class="t" style="left:785px;top:292px">Spacing:</div>
<div class="cb" style="left:828px;top:291px"></div>
<div class="t" style="left:843px;top:292px">Auto</div>
<div class="a" style="left:875px;top:289px;width:117px;height:16px;background:#383838;border:1px solid #333"></div>
<div class="t" style="left:922px;top:292px">0,02</div>
<div class="a" style="left:991px;top:289px;width:11px;height:16px;background:#3d3d3d;border:1px solid #333"></div>
<svg style="left:0;top:0" width="1010" height="702"><g fill="#aaa"><path d="M994 245h5l-2.5-2.5z M994 249h5l-2.5 2.5z M994 270h5l-2.5-2.5z M994 274h5l-2.5 2.5z M994 295h5l-2.5-2.5z M994 299h5l-2.5 2.5z"/></g></svg>
<div class="cb" style="left:828px;top:316px;background:#404040"></div>
<div class="t" style="left:843px;top:317px;color:#8a8a8a">Use Color as Mask</div>
<div class="cb" style="left:828px;top:340px"></div>
<svg style="left:0;top:0" width="1010" height="702"><path d="M830.5 345.5l2 2.5 4-6" fill="none" stroke="#eee" stroke-width="1.3"/></svg>
<div class="t" style="left:843px;top:341px">Preserve Brush Preset Settings</div>
<div class="btn" style="left:829px;top:362px;width:174px;height:18px"></div>
<div class="t" style="left:867px;top:366px">Reset Predefined Tip</div>
<!-- precision -->
<div class="cb" style="left:547px;top:525px"></div>
<div class="t" style="left:562px;top:526px">Auto</div>
<div class="t" style="left:593px;top:526px">Precision:</div>
<div class="a" style="left:644px;top:523px;width:355px;height:16px;background:#52718f;border:1px solid #4d6a88"></div>
<div class="t" style="left:818px;top:526px">5</div>
<div class="a" style="left:999px;top:523px;width:11px;height:16px;background:#3d3d3d;border:1px solid #333"></div>
<svg style="left:0;top:0" width="1010" height="702"><g fill="#aaa"><path d="M1002 529h5l-2.5-2.5z M1002 533h5l-2.5 2.5z"/></g></svg>
<!-- bottom row -->
<div class="cb" style="left:423px;top:564px"></div>
<div class="t" style="left:438px;top:565px">Eraser switch size</div>
<div class="cb" style="left:530px;top:564px"></div>
<div class="t" style="left:546px;top:565px">Eraser switch opacity</div>
<div class="cb" style="left:655px;top:564px"></div>
<div class="t" style="left:670px;top:565px">Temporarily Save Tweaks To Presets</div>
<div class="cb" style="left:924px;top:564px"></div>
<div class="t" style="left:938px;top:565px;text-decoration:line-through">Instant Preview</div>

<!-- ===== scratchpad group ===== -->
<div class="a" style="left:1035px;top:145px;width:207px;height:449px;border:1px solid #525252;border-radius:3px"></div>
<div class="btn" style="left:1041px;top:151px;width:18px;height:18px;background:#3c3c3c;border-color:#575757"></div>
<svg style="left:0;top:0" width="1248" height="702"><path d="M1052 158l-3 3 3 3" fill="none" stroke="#bbb"/></svg>
<div class="t" style="left:1063px;top:154px">Scratchpad</div>
<div class="a" style="left:1041px;top:172px;width:196px;height:393px;background:#fff"></div>
<div class="a" style="left:1059px;top:191px;width:157px;height:157px;border:1px dotted #c4c4c4"></div>
<div class="btn" style="left:1041px;top:570px;width:45px;height:17px"></div>
<div class="btn" style="left:1091px;top:570px;width:44px;height:17px"></div>
<div class="btn" style="left:1141px;top:570px;width:44px;height:17px"></div>
<div class="btn" style="left:1190px;top:570px;width:45px;height:17px"></div>
<svg style="left:0;top:0" width="1248" height="702">
 <g transform="translate(1052,436)" fill="#e6e6e6"><path d="M16.2 135.8c.8.8.3 2-.8 3.1l-2.2 2.2-2.3-2.3 2.2-2.2c1.1-1.1 2.300-1.6 3.1-.8z"/><path d="M11 140.5l2.2 2.2M10 141.6l2.2 2.2" stroke="#e6e6e6" stroke-width="1"/><path d="M9.2 143.2l2 2c-.5 2.5-2.5 4.5-6.700 4.5 1-1 .8-2.2 1.3-3.5.6-1.6 1.8-2.6 3.4-3z"/></g>
 <rect x="1107.5" y="572.5" width="12" height="12" fill="url(#gr2)" stroke="#ddd" stroke-width="1.2"/><rect x="1109" y="574" width="9" height="9" fill="none" stroke="#333" stroke-width=".6"/>
 <defs><linearGradient id="gr2"><stop offset="0" stop-color="#333"/><stop offset="1" stop-color="#ccc"/></linearGradient></defs>
 <g transform="translate(1154,246)" fill="none" stroke="#e6e6e6"><path d="M4.5 331l5-4 6 5.5-5 4.5z" stroke-width="1.4"/><path d="M5 331.5l10 .8-4.6 4.2z" fill="#e6e6e6" stroke="none"/><path d="M8 327.5l-1.5-2" stroke-width="1.2"/><path d="M15 334v3" stroke-width="1.5"/></g>
 <circle cx="1212.5" cy="578.5" r="4.5" fill="none" stroke="#d0323a" stroke-width="1.4"/><path d="M1209.5 575.5l6 6" stroke="#d0323a" stroke-width="1.4"/>
</svg>
</div>
</body></html>
